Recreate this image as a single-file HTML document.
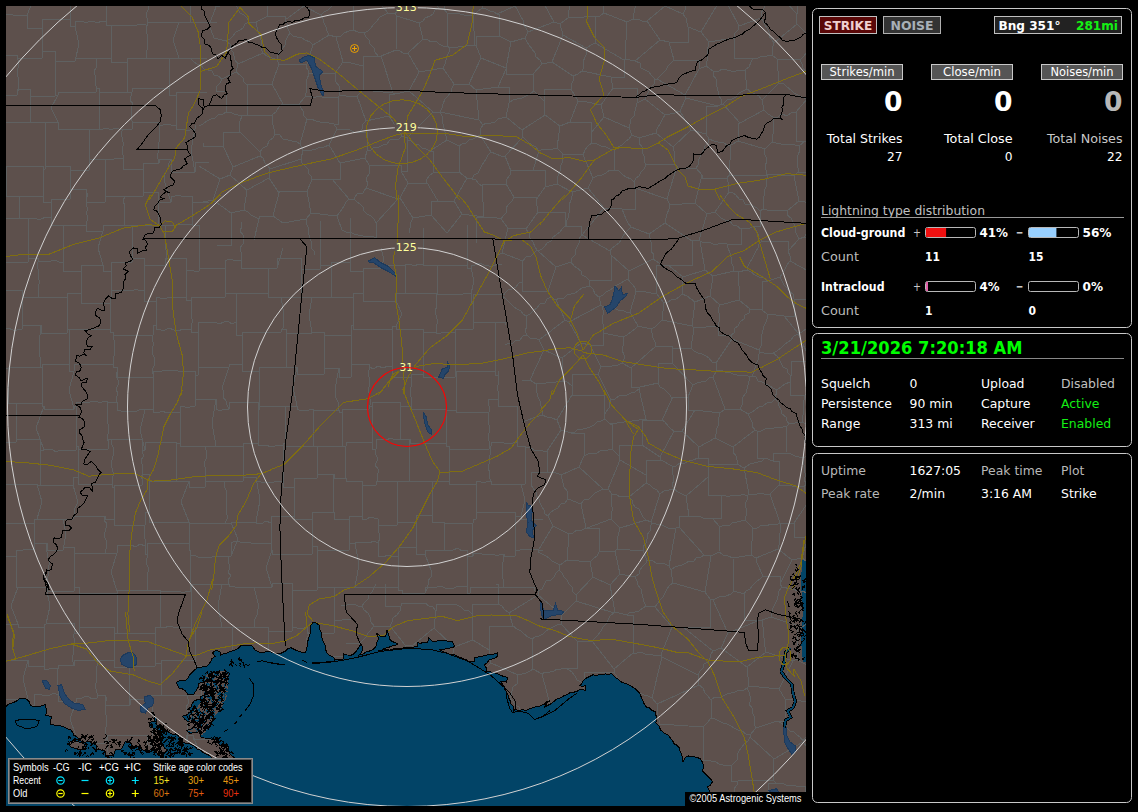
<!DOCTYPE html>
<html><head><meta charset="utf-8"><title>Lightning Map</title>
<style>
html,body{margin:0;padding:0;background:#000;}
body{width:1138px;height:812px;overflow:hidden;}
svg{display:block;}
text{font-family:"DejaVu Sans","Liberation Sans",sans-serif;}
.b{font-weight:bold;}
.r{font-weight:normal;}
.lib{font-family:"Liberation Sans",sans-serif;}
</style></head><body>
<svg width="1138" height="812" viewBox="0 0 1138 812">
<rect width="1138" height="812" fill="#000"/>
<defs><clipPath id="mc"><rect x="6" y="6" width="800" height="800"/></clipPath></defs>

<rect x="6" y="6" width="800" height="800" fill="#5d504c"/>
<g clip-path="url(#mc)" shape-rendering="crispEdges" fill="none" stroke-width="1">
<path d="M6.0 806.0 L6.0 706.8 L5.9 706.8 L8.2 704.4 L11.8 703.1 L14.8 701.9 L17.3 700.6 L19.7 698.2 L23.3 698.0 L27.1 699.4 L29.4 702.1 L30.8 705.6 L33.6 706.3 L36.9 706.8 L41.0 706.1 L45.6 704.3 L45.7 707.5 L46.8 710.5 L45.6 715.4 L48.3 715.8 L51.7 716.7 L50.6 720.3 L50.5 724.0 L54.8 725.1 L59.1 725.3 L62.3 726.3 L65.3 727.7 L68.6 729.2 L71.4 730.2 L73.9 735.1 L76.6 736.3 L78.8 738.8 L82.5 742.5 L77.7 741.8 L73.9 740.1 L70.6 741.7 L67.7 743.8 L71.4 747.4 L75.6 748.3 L78.8 749.9 L82.2 749.5 L86.2 748.7 L84.3 745.8 L83.7 742.5 L88.7 741.3 L92.5 743.2 L96.0 745.0 L97.3 749.9 L100.6 750.0 L104.7 751.1 L105.9 756.1 L110.0 755.5 L113.3 756.1 L114.3 752.9 L115.7 749.9 L118.9 750.0 L121.9 748.7 L123.4 744.8 L125.6 741.3 L130.5 742.5 L133.0 747.4 L135.8 746.7 L139.1 746.2 L142.8 749.9 L147.8 751.1 L151.0 749.7 L155.1 749.9 L157.1 753.3 L160.1 756.1 L162.8 753.8 L165.5 752.0 L167.5 749.9 L164.6 748.1 L162.5 745.0 L161.2 741.3 L160.1 737.6 L158.1 734.1 L157.6 730.2 L154.5 728.2 L150.2 727.7 L149.0 722.8 L152.3 721.6 L155.1 721.6 L154.3 717.3 L153.9 713.0 L151.8 712.6 L154.1 716.0 L157.0 718.8 L156.1 721.8 L156.2 724.9 L160.8 725.9 L164.1 728.4 L166.1 731.1 L169.3 732.8 L172.5 734.3 L175.4 733.9 L178.1 735.4 L180.6 739.2 L183.4 742.5 L186.4 743.3 L189.7 743.8 L192.2 745.1 L195.1 746.4 L197.0 749.0 L200.7 750.1 L202.7 752.1 L205.7 753.8 L208.7 755.1 L211.5 757.4 L213.8 759.3 L216.8 760.9 L219.9 760.2 L223.2 760.4 L225.4 761.6 L229.0 760.5 L231.5 760.4 L234.9 761.7 L237.9 760.9 L235.8 758.3 L232.6 756.5 L230.2 754.3 L229.1 751.3 L228.4 747.8 L227.3 744.2 L223.2 744.3 L220.3 746.0 L218.6 743.1 L216.8 739.8 L212.2 739.5 L208.0 738.1 L204.2 738.0 L201.0 737.2 L199.2 731.9 L194.7 732.2 L190.4 733.7 L186.0 730.2 L189.7 729.9 L192.2 728.4 L194.2 726.1 L195.7 723.1 L191.9 722.5 L188.3 721.6 L185.1 719.6 L182.5 716.1 L187.8 714.4 L191.3 710.8 L187.8 709.1 L191.1 707.0 L192.2 703.8 L193.9 701.2 L197.1 699.7 L201.0 699.4 L200.1 696.8 L204.5 695.0 L206.2 689.8 L202.7 688.0 L204.5 684.5 L203.6 681.8 L198.3 683.6 L198.5 686.8 L196.6 689.8 L193.9 694.1 L191.0 694.0 L187.8 694.1 L185.1 690.6 L182.1 688.7 L179.0 688.0 L176.4 682.7 L179.9 680.1 L185.1 681.0 L187.9 678.1 L189.6 674.8 L192.2 672.2 L194.8 669.8 L197.5 667.8 L202.0 667.0 L206.2 666.9 L208.8 664.2 L210.6 661.6 L212.0 658.5 L215.0 656.4 L212.4 652.8 L215.9 650.2 L220.3 652.0 L220.3 655.5 L223.3 653.7 L226.4 653.5 L229.1 652.0 L231.7 651.1 L235.0 650.2 L237.9 648.5 L240.5 645.8 L244.0 645.2 L248.2 645.1 L251.9 645.8 L255.4 650.2 L258.6 651.9 L262.5 652.8 L267.8 651.1 L273.0 652.8 L276.8 654.0 L280.1 653.7 L285.3 651.1 L287.3 649.0 L290.6 647.6 L295.9 650.2 L301.1 652.0 L305.5 652.8 L306.4 649.4 L307.3 645.8 L307.8 641.3 L309.1 637.0 L310.3 633.5 L310.8 630.0 L310.9 625.5 L313.1 621.9 L316.7 623.4 L319.3 625.5 L319.8 629.4 L321.2 632.8 L321.7 636.6 L322.5 639.8 L323.8 642.7 L325.5 645.7 L325.4 648.9 L326.8 652.5 L329.1 655.1 L334.0 657.6 L334.5 660.0 L338.0 659.3 L341.2 659.7 L343.9 658.8 L343.9 653.9 L347.1 655.0 L351.3 655.1 L353.9 653.8 L356.2 651.4 L358.4 647.7 L361.1 644.0 L363.1 648.9 L361.3 652.5 L358.7 655.1 L362.6 654.5 L365.2 652.3 L368.5 651.4 L372.7 649.7 L375.9 646.5 L376.9 642.6 L378.4 639.1 L377.7 635.7 L375.9 632.9 L378.6 634.7 L380.8 636.6 L385.7 636.6 L386.3 633.6 L387.0 630.5 L388.8 634.7 L389.4 639.1 L392.0 641.4 L395.2 642.7 L398.1 644.0 L394.5 645.5 L391.2 646.2 L388.2 647.7 L384.9 648.2 L381.6 650.2 L378.4 650.9 L381.8 650.2 L385.6 649.3 L389.7 650.2 L393.1 648.9 L396.7 648.9 L400.1 648.5 L404.1 647.8 L407.9 648.0 L411.2 647.7 L414.2 646.9 L417.8 646.5 L417.8 642.8 L420.7 643.3 L424.3 642.0 L427.6 642.8 L428.8 637.9 L432.5 641.6 L436.0 641.6 L438.8 640.2 L442.4 640.3 L445.7 640.3 L448.5 641.8 L452.2 641.6 L454.7 646.5 L451.3 647.9 L447.3 648.2 L443.8 649.3 L439.9 649.4 L442.4 651.4 L444.8 652.8 L448.0 653.2 L451.0 655.1 L454.2 654.6 L457.2 656.3 L460.4 657.4 L463.4 658.9 L466.4 659.9 L468.8 661.5 L471.9 662.0 L474.9 661.3 L474.4 657.6 L478.5 657.0 L481.8 656.3 L484.6 655.7 L488.0 654.6 L491.1 654.9 L494.1 653.9 L497.8 652.6 L497.8 656.3 L494.9 657.9 L492.2 659.1 L489.2 660.0 L487.2 662.8 L484.2 664.9 L486.1 667.7 L486.7 671.1 L489.8 671.8 L493.7 672.6 L496.6 673.6 L500.5 675.1 L503.7 676.5 L507.6 677.3 L506.4 682.2 L503.7 681.4 L500.3 681.4 L503.9 685.9 L504.8 689.1 L506.4 692.0 L507.9 694.7 L508.6 697.7 L510.1 700.7 L511.0 703.7 L513.1 706.2 L513.8 709.3 L518.7 710.5 L522.3 709.7 L526.1 710.5 L529.1 708.8 L532.0 708.0 L535.0 707.0 L538.4 706.8 L542.2 704.7 L545.8 703.1 L550.0 700.7 L546.2 701.8 L543.2 704.6 L540.0 705.6 L544.0 704.5 L547.4 701.9 L544.9 706.8 L548.6 705.0 L551.7 703.4 L554.8 700.7 L557.2 698.6 L561.1 697.8 L564.0 695.6 L567.1 694.5 L570.0 692.7 L573.1 692.4 L577.0 691.3 L579.4 689.6 L582.5 689.4 L585.6 690.8 L585.6 685.9 L582.7 686.1 L579.4 685.9 L581.8 683.6 L583.2 680.5 L585.6 678.5 L589.0 676.8 L592.9 674.8 L595.9 675.3 L599.1 674.8 L602.2 674.3 L605.5 673.9 L608.0 674.5 L611.4 673.6 L614.0 675.8 L616.0 678.0 L618.8 679.7 L621.5 682.1 L625.2 683.5 L628.7 684.6 L631.8 686.6 L635.0 688.4 L637.3 690.8 L639.9 693.3 L640.9 696.3 L642.2 699.4 L643.8 703.0 L645.9 706.8 L649.2 707.9 L652.1 710.6 L655.7 711.7 L655.8 714.9 L657.0 717.9 L655.7 722.8 L659.0 726.1 L660.7 730.2 L664.3 733.1 L668.1 735.1 L670.4 738.0 L672.5 740.5 L674.2 743.8 L677.0 745.3 L679.1 747.4 L680.2 751.2 L681.6 754.8 L682.7 758.5 L682.8 762.2 L685.3 757.3 L688.6 756.0 L692.7 756.1 L696.6 757.4 L700.1 758.5 L702.4 762.0 L703.8 765.9 L702.5 770.8 L705.4 773.9 L708.7 777.0 L710.7 779.1 L712.4 781.9 L710.6 785.0 L707.5 786.8 L709.9 791.8 L710.6 795.5 L712.1 799.0 L712.1 802.9 L712.4 806.5 L712.0 806.0Z" fill="#024467" stroke="none"/>
<path d="M802 560 L806 560 L806 662 L803 662 L801 640 L803 610 L801 585Z" fill="#024467" stroke="none"/>
<path d="M-1 -13L27 -13M27 -13L70 -13M70 -13L70 -10M70 -10L75 -11L79 -9L84 -11L88 -10L93 -10L97 -10L102 -9L106 -10M106 -10L106 -7M106 -7L147 -7M147 -7L147 -13M147 -13L151 -14L155 -13L160 -14L164 -14L169 -12L173 -14L177 -12L182 -12L186 -14L190 -13M190 -13L190 -17M-1 22L3 22M3 22L3 15M3 15L8 14L13 15L17 15L22 16L27 15M27 15L27 28M27 28L32 28L37 28L42 28M42 28L42 19M42 19L70 19M70 19L70 26M70 26L75 26M75 26L75 22M75 22L79 21L84 22L88 22L93 21L97 23L102 21L106 22M106 22L106 25M106 25L111 25M111 25L116 26L120 25L124 25L129 25L133 25L137 25L141 24L146 25M146 25L146 26M146 26L147 26M147 26L147 22M147 22L179 22M179 22L190 22M190 22L217 22M3 55L17 55M17 55L17 58M17 58L42 58M42 58L42 51M42 51L55 51M55 51L55 61M55 61L75 61M75 61L75 58M75 58L96 58M96 58L111 58M111 58L111 62M111 62L127 62M127 62L127 58M127 58L146 58M146 58L169 58M169 58L179 58M179 58L207 58M-9 95L17 95M17 95L17 89M17 89L30 89M30 89L30 96M30 96L55 96M55 96L55 95M55 95L58 95M58 95L58 92M58 92L96 92M96 92L96 88M96 88L99 88M99 88L99 92M99 92L127 92M127 92L132 92M132 92L132 88M132 88L169 88M169 88L169 95M169 95L176 95M176 95L176 92M176 92L207 92M-9 122L-1 122M-1 122L30 122M30 122L45 122M45 122L58 122M58 122L58 129M58 129L89 129M89 129L99 129M99 129L103 129L107 128L111 130L115 128L119 129L123 129M123 129L132 129M132 129L132 122M132 122L159 122M159 122L159 125M159 125L163 125L167 124L171 125L176 125M176 125L176 129M176 129L181 129L186 130L190 130L195 129M195 129L195 125M-1 169L6 169M6 169L6 166M6 166L43 166M43 166L43 169M43 169L45 169M45 169L45 166M45 166L70 166M70 166L70 170M70 170L89 170M89 170L89 159M89 159L105 159M105 159L110 159L114 159L118 158L123 159M123 159L123 169M123 169L143 169M143 169L143 163M143 163L159 163M159 163L159 159M159 159L165 160L171 159M171 159L171 172M171 172L195 172M195 172L195 162M195 162L209 162M6 196L19 196M19 196L43 196M43 196L43 202M43 202L51 202M51 202L51 199M51 199L70 199M70 199L70 189M70 189L86 189M86 189L86 202M86 202L105 202M105 202L105 196M105 196L125 196M125 196L143 196M143 196L143 192M143 192L158 192M158 192L158 202M158 202L171 202M171 202L171 196M171 196L175 196L179 195L183 197L187 196L192 196M192 196L192 202M192 202L209 202M-3 218L19 218M19 218L28 218M28 218L32 218L37 219L41 219L46 217L51 218M51 218L51 225M51 225L63 225M63 225L86 225M86 225L86 231M86 231L103 231M103 231L103 225M103 225L125 225M125 225L132 225M132 225L158 225M158 225L165 225M165 225L170 225L174 226L178 224L183 224L187 224L192 225M192 225L199 225M-4 271L-3 271M-3 271L-3 262M-3 262L28 262M28 262L28 258M28 258L38 258M38 258L38 262M38 262L42 261L46 262L51 261L55 260L59 262L63 262M63 262L63 271M63 271L81 271M81 271L81 265M81 265L103 265M103 265L103 271M103 271L111 271M111 271L111 262M111 262L132 262M132 262L132 258M132 258L144 258M144 258L144 265M144 265L165 265M165 265L165 258M165 258L186 258M186 258L186 271M186 271L190 270L194 271L199 271M199 271L199 268M199 268L225 268M225 268L225 261M225 261L229 259L233 260L237 260L241 261M241 261L241 268M241 268L268 268M268 268L277 268M277 268L277 258M277 258L301 258M301 258L301 269M301 269L320 269M320 269L320 265M320 265L331 265M331 265L331 262M331 262L350 262M350 262L350 271M350 271L355 272L359 271L363 271M363 271L363 268M363 268L384 268M384 268L384 265M384 265L405 265M405 265L410 264L414 266L419 264L423 265M423 265L437 265M437 265L467 265M467 265L467 268M467 268L471 268M471 268L471 265M471 265L475 265L480 263L484 265L489 266L493 266L498 264L502 265M-5 290L-4 290M-4 290L22 290M22 290L22 297M22 297L38 297M38 297L67 297M67 297L67 293M67 293L81 293M81 293L81 303M81 303L110 303M110 303L110 297M110 297L111 297M111 297L111 290M111 290L116 291L120 290L124 291L128 290L132 291L136 289L140 291L144 290M144 290L144 301M144 301L156 301M156 301L156 297M156 297L160 298L165 299L169 297L173 298L178 297L182 297L186 297M186 297L186 300M186 300L191 300M191 300L191 297M191 297L225 297M225 297L225 293M225 293L236 293M236 293L268 293M268 293L268 297M268 297L281 297M281 297L301 297M301 297L312 297M312 297L331 297M331 297L353 297M353 297L353 293M353 293L363 293M363 293L363 301M363 301L396 301M396 301L396 293M396 293L405 293M405 293L436 293M436 293L436 294M436 294L437 294M437 294L442 294L446 294L450 295L454 294L458 294L463 294L467 293L471 294M471 294L471 303M471 303L473 303M473 303L473 294M473 294L505 294M-5 329L-1 329M-1 329L3 328L8 328L13 330L17 330L22 329M22 329L22 325M22 325L27 326L31 325L36 325L41 325M41 325L41 333M41 333L67 333M67 333L67 329M67 329L69 329M69 329L110 329M110 329L110 332M110 332L113 332M113 332L113 335M113 335L153 335M153 335L153 325M153 325L156 325M156 325L156 329M156 329L161 330L165 330L169 328L174 330L178 331L183 329L187 330L191 329M191 329L191 332M191 332L198 332M198 332L198 322M198 322L202 323L206 322L211 322L215 322L219 324L224 322L228 321L232 324L236 322M236 322L236 335M236 335L242 335M242 335L242 332M242 332L281 332M281 332L281 329M281 329L286 329M286 329L286 333M286 333L312 333M312 333L312 332M312 332L324 332M324 332L324 335M324 335L351 335M351 335L351 325M351 325L353 325M353 325L353 329M353 329L392 329M392 329L392 326M392 326L396 326M396 326L396 329M396 329L423 329M423 329L423 332M423 332L436 332M436 332L436 333M436 333L441 333L446 332L450 332L455 333M455 333L455 329M455 329L473 329M473 329L473 322M473 322L495 322M495 322L500 322L505 322M505 322L505 325M-1 368L8 368M8 368L8 367M8 367L41 367M41 367L42 367M42 367L42 364M42 364L69 364M69 364L69 371M69 371L74 371M74 371L74 364M74 364L113 364M113 364L113 367M113 367L117 367M117 367L117 377M117 377L153 377M153 377L153 374M153 374L153 374M153 374L153 371M153 371L157 372L162 371L166 370L170 371L174 370L178 371L182 371L187 371L191 371L195 371M195 371L195 375M195 375L198 375M198 375L198 367M198 367L229 367M229 367L229 364M229 364L242 364M242 364L242 371M242 371L246 372L251 371L255 371L259 371M259 371L259 367M259 367L286 367M286 367L297 367M297 367L297 374M297 374L324 374M324 374L324 368M324 368L339 368M339 368L339 377M339 377L351 377M351 377L351 364M351 364L369 364M369 364L369 367M369 367L374 369L378 366L383 368L388 366L392 367M392 367L392 377M392 377L411 377M411 377L411 374M411 374L423 374M423 374L423 377M423 377L455 377M455 377L455 374M455 374L456 374M456 374L456 371M456 371L495 371M495 371L495 375M495 375L498 375M498 375L498 371M8 403L16 403M16 403L42 403M42 403L42 406M42 406L44 406M44 406L44 409M44 409L74 409M74 409L74 406M74 406L76 406M76 406L76 402M76 402L80 403L84 402L88 403L92 401L96 401L100 403L104 401L108 402M108 402L117 402M117 402L117 410M117 410L121 411L125 411L129 411L133 411L137 411L141 409L145 410M145 410L145 409M145 409L153 409M153 409L153 412M153 412L158 413L162 411L167 413L171 412L176 412L180 412M180 412L180 406M180 406L185 407L190 407L195 406M195 406L195 399M195 399L216 399M216 399L216 409M216 409L220 411L224 409L229 409M229 409L229 402M229 402L258 402M258 402L258 410M258 410L259 410M259 410L259 406M259 406L285 406M285 406L297 406M297 406L297 409M297 409L301 411L305 410L309 410L313 409M313 409L313 410M313 410L339 410M339 410L339 412M339 412L342 412M342 412L342 409M342 409L369 409M369 409L369 406M369 406L372 406M372 406L372 402M372 402L400 402M400 402L400 406M400 406L411 406M411 406L411 409M411 409L446 409M446 409L446 410M446 410L456 410M456 410L456 412M456 412L489 412M489 412L490 408L488 404L489 399M489 399L498 399M498 399L498 406M498 406L517 406M517 406L517 412M1 442L16 442M16 442L16 439M16 439L40 439M40 439L40 445L40 450M40 450L44 450M44 450L48 449L52 449L56 452L60 450L64 450L68 450L72 451L76 450M76 450L76 446M76 446L78 446M78 446L78 449M78 449L108 449M108 449L108 439M108 439L112 439M112 439L142 439M142 439L142 450M142 450L145 450M145 450L145 442M145 442L176 442M176 442L176 443M176 443L180 443M180 443L180 446M180 446L205 446M205 446L211 446L216 446M216 446L243 446M243 446L243 443M243 443L258 443M258 443L258 446M258 446L262 445L266 445L271 447L275 446L279 445L283 446M283 446L283 443M283 443L285 443M285 443L285 446M285 446L313 446M313 446L317 446M317 446L342 446M342 446L346 446M346 446L346 442M346 442L372 442M372 442L372 449M372 449L376 449M376 449L376 439M376 439L381 439L386 440L391 438L395 440L400 439M400 439L410 439M410 439L410 443M410 443L446 443M446 443L446 446M446 446L449 446M449 446L449 449M449 449L489 449M489 449L489 446M489 446L491 446M491 446L491 442M491 442L495 443L500 442L504 443L509 443L513 443L517 442M517 442L517 446M517 446L525 446M525 446L525 450M1 481L3 481M3 481L3 484M3 484L37 484M37 484L37 485M37 485L40 485M40 485L73 485M73 485L73 477M73 477L78 477M78 477L78 484M78 484L112 484M112 484L112 487M112 487L114 487M114 487L114 485M114 485L142 485M142 485L142 474M142 474L149 474M149 474L149 481M149 481L176 481M176 481L189 481M189 481L189 487M189 487L205 487M205 487L205 481M205 481L225 481M225 481L243 481M243 481L243 477M243 477L256 477M256 477L256 481M256 481L261 482L265 482L270 483L274 482L279 481L283 481M283 481L283 487M283 487L294 487M294 487L294 478M294 478L317 478M317 478L317 474M317 474L334 474M334 474L334 478M334 478L346 478M346 478L346 481M346 481L362 481M362 481L362 485M362 485L376 485M376 485L376 481M376 481L397 481M397 481L410 481M410 481L432 481M432 481L449 481M449 481L449 484M449 484L476 484M476 484L476 481M476 481L481 482L486 482L491 481M491 481L491 484M491 484L495 485L499 484L504 484L508 485L512 484L517 485L521 484M521 484L525 484M525 484L525 478M-2 519L3 519M3 519L3 523M3 523L34 523M34 523L34 519M34 519L37 519M37 519L63 519M63 519L68 520L73 519M73 519L73 516M73 516L105 516M105 516L105 519M105 519L114 519M114 519L114 525M114 525L145 525M145 525L145 512M145 512L149 512M149 512L149 522M149 522L189 522M189 522L189 522M189 522L189 523M189 523L225 523M225 523L231 523M231 523L231 522M231 522L256 522M256 522L256 523M256 523L261 524L266 521L271 523M271 523L271 516M271 516L294 516M294 516L294 519M294 519L312 519M312 519L312 512M312 512L334 512M334 512L334 519M334 519L349 519M349 519L349 516M349 516L362 516M362 516L362 519M362 519L366 520L370 517L374 518L378 519M378 519L378 525M378 525L383 525L388 526L392 525L397 525M397 525L397 522M397 522L416 522M416 522L416 515M416 515L432 515M432 515L432 522M432 522L444 522M444 522L444 523M444 523L473 523M473 523L473 519M473 519L476 519M476 519L476 512M476 512L515 512M515 512L515 516M515 516L521 516M521 516L521 519M521 519L543 519M-2 556L3 557L7 556L12 557L16 556M16 556L16 550M16 550L21 551L25 549L29 549L34 550M34 550L34 543M34 543L47 543M47 543L47 550M47 550L63 550M63 550L63 547M63 547L69 547L74 547M74 547L74 553M74 553L105 553M105 553L117 553M117 553L117 546M117 546L122 545L127 546L131 545L136 547L140 544L145 546M145 546L145 554M145 554L147 554M147 554L147 543M147 543L189 543M189 543L189 550M189 550L190 550M190 550L190 556M190 556L194 555L198 557L203 557L207 557L212 557L216 556L221 557L225 556L229 556M229 556L231 556M231 556L231 543M231 543L235 541L240 542L244 543L249 542L253 544L257 543L262 543L266 544L271 543M271 543L271 550M271 550L272 550M272 550L272 554M272 554L312 554M312 554L312 546M312 546L317 546M317 546L317 550M317 550L349 550M349 550L349 543M349 543L355 543M355 543L360 542L365 542L369 543L374 541L378 543M378 543L378 556M378 556L383 557L388 555L393 557L398 556M398 556L398 547M398 547L416 547M416 547L416 554M416 554L425 554M425 554L425 550M425 550L444 550M444 550L448 551L453 550L458 548L462 551L467 550M467 550L467 556M467 556L473 556M473 556L473 554M473 554L478 553L482 554L486 555L491 554L495 555L499 555L504 554M504 554L504 556M504 556L515 556M515 556L515 550M515 550L520 550L524 549L529 550L534 549L538 550L543 550M16 587L18 587M18 587L46 587M46 587L47 587M47 587L47 591M47 591L74 591M74 591L74 587M74 587L79 587M79 587L79 593M79 593L117 593M117 593L117 591M117 591L117 591M117 591L117 590M117 590L147 590M147 590L160 590M160 590L160 591M160 591L164 591L168 591L173 591L177 591L181 592L185 592L190 591M190 591L191 591M191 591L191 584M191 584L222 584M222 584L229 584M229 584L229 587M229 587L233 586L237 588L241 587L246 588L250 587L254 587M254 587L272 587M272 587L272 583M272 583L292 583M292 583L292 590M292 590L317 590M317 590L317 587M317 587L334 587M334 587L355 587M355 587L368 587M368 587L398 587M398 587L398 590M398 590L402 590M402 590L402 593M402 593L425 593M425 593L425 587M425 587L437 587M437 587L441 586L445 588L450 588L454 588L458 586L463 586L467 587M467 587L467 593M467 593L470 593M470 593L470 587M470 587L504 587M504 587L505 587M505 587L534 587M534 587L534 591M2 624L18 624M18 624L18 627M18 627L44 627M44 627L44 624M44 624L46 624M46 624L46 623M46 623L74 623M74 623L74 633M74 633L79 633M79 633L79 627M79 627L114 627M114 627L114 633M114 633L117 633M117 633L155 633M155 633L155 627M155 627L160 627M160 627L164 628L169 626L173 627L178 628L182 627L187 628L191 627M191 627L191 631M191 631L195 631M195 631L195 627M195 627L222 627M222 627L232 627M232 627L254 627M254 627L268 627M268 627L268 631M268 631L292 631M292 631L292 627M292 627L297 628L302 629L307 627M307 627L307 633M307 633L334 633M334 633L334 620M334 620L338 621L342 620L347 619L351 620M-4 656L2 656M2 656L2 660M2 660L28 660M28 660L28 666M28 666L44 666M44 666L44 669M44 669L49 669L53 668L58 669M58 669L58 666M58 666L64 665L69 665L74 666M74 666L74 660M74 660L97 660M97 660L114 660M114 660L114 667M114 667L130 667M130 667L130 666M130 666L155 666M155 666L155 663M155 663L161 663M161 663L161 660M161 660L195 660M195 660L195 666M195 666L201 666M201 666L201 669M201 669L232 669M232 669L232 659M232 659L246 659M246 659L246 667M246 667L251 668L255 667L259 667L264 666L268 667M268 667L268 663M268 663L279 663M279 663L279 667M279 667L307 667M307 667L307 663M307 663L319 663M319 663L319 656M319 656L351 656M-4 705L1 705M1 705L1 699M1 699L28 699M28 699L28 705M28 705L34 705M34 705L34 695M34 695L38 694L42 695L46 696L50 695L54 693L58 695M58 695L58 702M58 702L63 701L67 703L71 703L76 702M76 702L76 698M76 698L80 699L84 697L88 696L92 699L97 698M97 698L97 695M97 695L105 695M105 695L105 705M105 705L130 705M130 705L130 699M130 699L151 699M151 699L151 695M151 695L161 695M161 695L187 695M187 695L201 695M201 695L226 695M226 695L246 695M246 695L246 700L246 706M246 706L262 706M262 706L279 706M279 706L304 706M304 706L304 702M304 702L309 703L314 701L319 702M319 702L324 703L329 702L333 702L338 701L342 701L347 702M1 739L4 739M4 739L34 739M34 739L34 745M34 745L35 745M35 745L67 745M67 745L67 736M67 736L76 736M76 736L76 743M76 743L80 742L84 743L88 743L93 743L97 743L101 743L105 743M105 743L105 739M105 739L107 739M107 739L107 735M107 735L147 735M147 735L147 745M147 745L151 745M151 745L187 745M187 745L187 735M187 735L193 735M193 735L193 739M193 739L197 739L201 740L205 739L209 739L213 740L217 738L222 738L226 739M226 739L226 732M226 732L231 732L236 732M236 732L236 736M236 736L262 736M262 736L262 735M262 735L267 735M267 735L267 739M267 739L298 739M298 739L298 736M298 736L304 736M304 736L304 742M304 742L330 742M330 742L330 739M330 739L347 739M4 762L12 762M12 762L12 765M12 765L35 765M35 765L35 769M35 769L41 769M41 769L41 762M41 762L45 761L49 763L54 762L58 762L62 764L67 762M67 762L67 769M67 769L69 769M69 769L107 769M107 769L112 769M112 769L145 769M145 769L145 765M145 765L147 765M147 765L147 762M147 762L178 762M178 762L178 775M178 775L193 775M193 775L193 773M193 773L216 773M216 773L216 765M216 765L236 765M236 765L236 769M236 769L256 769M256 769L267 769M267 769L267 766M267 766L283 766M283 766L283 762M283 762L298 762M298 762L298 766M298 766L317 766M317 766L317 772M317 772L330 772M330 772L330 762M330 762L352 762M-2 808L12 808M12 808L12 814M12 814L38 814M38 814L38 808M38 808L41 808M41 808L41 801M41 801L45 800L49 800L54 801L58 802L63 802L67 801M67 801L67 814M67 814L69 814M69 814L69 808M69 808L73 808L78 808L82 807L86 808L90 808L94 809L98 809L103 808L107 808L111 808M111 808L111 811M111 811L112 811M112 811L112 808M112 808L116 808L120 808L124 807L128 807L132 809L137 808L141 807L145 808M145 808L145 811M145 811L155 811M155 811L155 812M155 812L178 812M178 812L178 808M178 808L184 808M184 808L184 814M184 814L216 814M216 814L216 804M216 804L229 804M229 804L229 805M229 805L256 805M256 805L256 814M256 814L263 814M263 814L263 812M263 812L283 812M283 812L283 814M283 814L305 814M305 814L305 812M305 812L317 812M317 812L317 808M317 808L346 808M-2 851L38 851M38 851L38 845M38 845L67 845M67 845L111 845M111 845L111 842M111 842L155 842M155 842L155 845M155 845L184 845M184 845L184 842M184 842L229 842M229 842L263 842M263 842L263 841M263 841L305 841M305 841L305 845M305 845L346 845M-1 -13L-1 -8L1 -4L3 -0L4 5M4 5L2 9L2 13L-0 18L-1 22M27 -13L33 1M33 1L27 15M70 -13L70 19M106 -10L106 22M147 -7L147 -3L146 1L148 5L148 10L146 14L147 18L147 22L147 26M190 -13L190 22M3 22L2 26L2 30L4 34L4 39L2 43L2 47L4 51L3 55M42 28L42 58M75 26L79 44M79 44L75 61M111 25L111 58M146 25L148 42M148 42L146 58M179 22L173 40M173 40L179 58M17 55L18 60L19 64L18 68L17 73L18 77L18 82L18 86L18 91L17 95M55 51L55 96M96 58L96 62L97 67L94 71L95 75L95 79L95 84L97 88L96 92M127 62L127 92M169 58L169 88M-9 95L-9 122M30 89L30 122M58 95L51 108M51 108L58 122M99 88L99 129M132 92L131 96L130 100L133 104L131 108L131 112L131 117L132 121L133 125L132 129M176 95L176 125M-1 122L1 145M1 145L-1 169M45 122L45 169M89 129L89 170M123 129L121 133L122 137L123 142L123 146L122 150L123 155L123 159M159 122L159 142M159 142L158 146L159 151L157 155L158 159L159 163M195 129L191 150M191 150L195 172M6 169L6 196M43 166L43 196M70 166L71 182M71 182L70 199M105 159L105 202M143 169L143 196M171 159L169 163L168 168L166 172L164 176L164 180M164 180L171 202M19 196L19 218M51 202L51 218M86 189L87 193L87 197L86 201L86 205L88 209L86 213L88 217L87 221L86 225M125 196L123 201L125 206L124 210M124 210L125 225M158 192L158 225M192 196L192 225M-3 218L-3 271M28 218L28 262M63 225L64 243M64 243L63 262M103 231L98 248M98 248L103 265M132 225L132 262M165 225L165 245M165 245L166 250L166 255L166 260L165 265M199 225L199 271M241 222L242 226L240 231L243 235L243 239L243 244L240 248L241 252L242 257L241 261M283 248L277 268M320 221L320 269M350 218L350 262M381 248L382 252L383 256L384 260L382 264L384 268M423 228L423 265M467 225L467 265M-4 271L-4 290M38 258L38 262L37 267L39 271L38 275L39 280L39 284L38 288L39 293L38 297M81 271L81 293M111 271L111 297M144 258L144 290M186 258L186 297M225 268L225 297M268 268L268 293M301 258L301 297M331 265L331 297M363 271L363 293M405 265L405 293M437 265L437 294M471 268L472 272L473 277L474 281M474 281L471 294M-5 290L-6 295L-5 299L-5 303L-5 308L-5 312L-5 316L-5 321L-5 325L-5 329M22 290L22 329M67 297L67 333M110 303L110 329M156 301L156 325M191 300L191 304L191 309L192 313L191 317L193 321L191 325L191 329M236 293L236 322M281 297L284 315M284 315L283 319L284 324L283 328L281 332M312 297L309 315M309 315L312 333M353 297L353 325M396 301L402 314M402 314L396 326M436 293L436 298L436 302L437 306L435 311L436 315L437 319L437 324L436 328L436 332M473 303L473 329M-1 329L-1 368M41 325L39 346M39 346L41 367M69 329L69 364M113 332L115 348M115 348L113 364M153 335L152 340L154 344L152 348L152 353L154 357L154 361L154 366L152 370L153 374M198 332L198 375M242 335L242 364M286 329L286 367M324 332L324 374M351 335L351 377M392 329L392 367M423 329L423 374M455 333L455 377M495 322L495 371M8 368L8 403M42 367L42 403M74 371L69 390M69 390L74 409M117 367L117 372L116 376L118 380L118 385L116 389L118 394L116 398L117 402M153 377L153 409M195 371L195 406M229 367L222 388M222 388L224 392L223 397L226 401L227 405L229 409M259 371L259 410M297 367L293 387M293 387L297 406M339 368L335 389M335 389L335 394L336 398L338 402L338 406L339 410M369 364L370 368L368 372L369 377L369 381L370 385L368 389L369 393L369 397L371 401L370 405L369 409M411 377L412 382L411 387L410 392M410 392L411 397L411 401L411 406M456 374L457 392M457 392L456 410M498 375L498 379L499 383L497 387L498 391L498 395L498 399M16 403L16 442M44 406L36 428M36 428L44 450M76 406L76 450M108 402L107 407L107 411L107 415L107 419L108 424L108 428L109 432L107 436L108 441L108 445L108 449M145 410L140 430M140 430L145 450M180 412L180 443M216 399L212 423M212 423L216 446M258 402L258 443M285 406L285 443M313 409L313 446M342 412L342 446M372 406L372 442M400 402L400 439M446 409L446 443M489 412L488 416L488 421L489 425L490 429L489 433L488 437L489 441L489 445L489 449M517 406L517 442M1 442L1 447L1 451L-0 455L1 460L-1 464L1 468L1 473L2 477L1 481M40 439L40 485M78 446L78 477M112 439L111 443L113 447L113 452L113 456L112 460L111 464L112 468L113 472L113 476L112 480L112 484M142 439L143 443L142 448L142 452L144 456L141 460L142 464L142 469L143 473L141 477L143 481L142 485M176 442L176 481M205 446L206 450L206 454L206 459L204 463L205 467L205 471L205 475L205 479L205 483L205 487M243 446L243 481M283 446L283 481M317 446L317 478M346 446L345 462M345 462L346 478M376 449L375 453L377 457L377 461L375 465L378 469L378 473L377 477L377 481L376 485M410 439L409 460M409 460L410 481M449 446L449 481M491 446L489 464M489 464L488 468L490 473L489 477L491 481M525 446L525 484M3 481L-5 500M-5 500L3 519M37 484L42 502M42 502L37 519M73 485L78 502M78 502L76 506L74 510L75 515L73 519M114 487L114 519M149 474L149 512M189 481L181 502M181 502L189 522M225 481L224 486L226 490L226 494L226 498L227 502M227 502L226 506L226 510L227 515L227 519L225 523M256 477L260 500M260 500L256 522M294 487L294 516M334 474L333 493M333 493L334 512M362 481L362 516M397 481L397 503M397 503L397 525M432 481L432 515M476 484L476 519M521 484L525 500M525 500L521 516M-2 519L-2 556M34 523L34 550M63 519L64 524L65 529L66 534M66 534L63 550M105 516L104 520L107 524L106 528L105 532L104 536L106 540L106 544L106 549L105 553M145 525L144 529L145 533L144 537L146 541L145 546M189 522L189 543M231 523L238 539M238 539L231 556M271 523L271 543M312 519L312 554M349 519L349 550M378 519L379 524L378 528L379 533L380 538L378 543M416 522L416 547M444 522L444 550M473 523L472 539M472 539L473 556M515 512L515 556M16 556L16 587M47 543L46 547L47 552L47 556L49 560L49 565M49 565L47 587M74 547L74 591M117 553L111 572M111 572L117 591M147 554L147 558L146 563L148 567L148 572M148 572L147 590M190 550L190 591M229 556L228 560L229 564L230 568L228 572L231 576L228 580L229 584M272 550L266 568M266 568L272 587M317 546L317 590M355 543L359 565M359 565L355 587M398 556L398 587M425 554L432 573M432 573L431 577L428 581L428 585L427 589L425 593M467 550L467 587M504 554L502 570M502 570L504 587M18 587L11 606M11 606L18 624M46 587L50 606M50 606L46 624M79 587L79 633M117 593L117 633M160 590L160 627M191 591L191 627M222 584L218 606M218 606L222 627M254 587L259 607M259 607L257 611L257 615L255 619L254 623L254 627M292 583L292 631M334 587L334 633M2 624L1 629L3 633L1 638L3 642L3 647L2 651L2 656M44 627L44 666M74 623L74 627L75 632L73 636L75 640L74 645L73 649L74 653L72 657L73 662L74 666M114 627L114 660M155 633L155 666M195 631L195 660M232 627L232 669M268 627L268 667M307 627L308 632L308 636L306 640L308 645L308 649L307 654L307 658L307 663L307 667M-4 656L-4 705M28 660L23 679M23 679L28 699M58 669L57 682M57 682L58 686L59 690L58 695M97 660L98 664L96 668L97 673L96 677L97 681L95 685L96 689L97 693L97 698M130 667L129 686M129 686L130 705M161 663L161 695M201 666L201 695M246 659L246 695M279 663L279 706M319 663L319 702M1 705L1 739M34 705L34 739M76 702L70 719M70 719L76 736M105 695L107 699L105 703L105 707L105 711L106 715L106 719L106 723L106 727L105 731L106 735L106 739L105 743M151 699L154 722M154 722L152 727L152 731L153 736L153 741L151 745M187 695L188 699L189 703L186 707L188 712L189 716L188 720L187 724L187 728L188 733L186 737L187 741L187 745M226 695L223 717M223 717L223 722L225 726L224 731L224 735L226 739M262 706L262 736M304 706L304 736M4 739L4 762M35 745L35 765M67 745L67 762M107 739L109 744L107 748L108 752L109 756L109 761L107 765L107 769M147 735L153 750M153 750L147 765M193 735L200 755M200 755L193 775M236 732L236 765M267 735L267 769M298 739L296 743L294 747L292 751M292 751L298 762M330 742L328 757M328 757L330 772M12 762L8 785M8 785L12 808M41 769L39 774L41 778L41 782L41 786L40 791L40 795L39 799L40 804L41 808M69 769L69 814M112 769L112 811M145 769L145 774L144 778L145 782L146 786L145 791L145 795L145 799L145 804L145 808M178 762L178 812M216 773L217 794M217 794L215 798L215 802L217 806L216 810L216 814M256 769L249 787M249 787L256 805M283 766L283 789M283 789L283 794L284 798L282 803L282 808L283 812M317 766L317 812M-2 808L1 829M1 829L-2 851M38 814L39 818L38 822L39 826L37 830L37 834L37 839L37 843L39 847L38 851M67 801L60 823M60 823L67 845M111 808L111 845M155 811L155 842M184 808L184 845M229 804L229 842M263 814L269 828M269 828L263 842M305 814L311 827M311 827L305 841M823 5L797 5L797 14M797 14L796 19L797 24M797 24L816 43M781 -3L797 14M777 59L772 55M777 59L800 60M774 43L772 49L772 55M774 43L797 24M800 60L816 43M816 719L813 715L813 710L810 706L809 702M819 686L809 702M761 18L739 26M761 18L761 13L763 10L765 6L767 2L768 -2M743 -13L740 -9L737 -6L734 -2L731 1L728 5M728 5L739 26M774 43L772 40L769 36L769 32L767 28L765 25L763 21L761 18M772 55L767 56L762 56L758 58L753 58M753 58L734 58L734 38M734 38L735 33L738 30L739 26M814 755L803 742M816 719L814 723L812 727L808 729L807 734L806 737L803 741M803 742L803 741M813 778L805 787M805 787L801 786L796 786L792 785L788 786L784 784L780 783L776 783M803 742L774 759M774 759L773 780M773 780L776 783M802 422L812 427M802 422L802 417L804 413L803 409L803 404L804 400L805 395M805 395L810 394L814 392L819 393L823 391L827 390M800 60L802 64L803 68L806 72L809 76L811 80L813 84M745 70L749 67L751 62L753 58M745 70L740 70L736 71L731 71L727 70L722 69L718 72L713 71M734 38L709 42M709 42L708 47L707 51L707 56L707 61L706 66M713 71L706 66M517 0L522 -0L526 1L530 2L534 1L539 2L543 2M517 0L515 -4L515 -8L514 -12L514 -16M543 2L551 2L551 -17M517 0L515 6M515 6L517 9L519 13L521 17L523 20L524 25L526 28L528 32M528 32L554 22M543 2L554 22M809 702L785 699M803 741L800 737L797 735L794 732L790 731L787 728L784 725L781 723L777 721M777 721L785 721L785 699M762 620L771 617M762 620L762 625L764 629L763 634L764 638L764 643L765 647L766 652M771 617L802 627M766 652L793 661M802 627L797 627L797 659M793 661L797 659M747 667L749 686M747 667L766 652M779 689L749 686M779 689L793 661M813 667L809 665L805 664L801 662L797 659M779 689L785 699M802 627L805 625L810 624L813 621L816 618M805 787L809 813M776 783L768 783L768 819M773 780L738 780L738 781M738 781L737 785L734 789L735 794L731 798L732 803L730 807M736 815L730 807M353 6L374 -4M353 6L353 6L353 30M353 30L358 32L364 33M364 33L368 31L371 28L374 24L377 21L380 17L384 15L388 13M388 13L374 -4M415 -16L395 14M395 14L388 13M378 56L375 52L374 48L370 44L369 40L366 37L364 33M378 56L363 56L363 66M336 37L343 62M336 37L341 36L344 33L349 31L353 30M363 66L359 65L355 64L351 63L347 62L343 62M378 56L381 56M395 14L397 16M381 56L396 50M397 16L396 50M381 56L393 93M363 66L363 90M393 93L363 90M777 59L779 83M813 84L806 99M779 83L784 84L787 87L791 90L794 93L798 95L802 97L806 99M745 70L747 89M779 83L762 100M747 89L751 92L755 94L759 96L762 100M354 199L357 194L363 193L366 188M354 199L357 202L360 204L363 207L364 211L367 214L371 216L374 219L376 223M376 223L398 199M366 188L398 199M337 216L340 212L342 209L344 206L346 202L349 199M337 216L342 230M354 199L349 199M376 223L376 223L376 238M342 230L346 232L350 232L354 234L358 235L363 236L367 236L372 236L376 238M306 219L283 223M306 219L306 223L308 227L308 231L309 235L310 239L312 243L311 248L314 251L314 255M311 213L337 216M311 213L306 219M777 721L756 728M749 686L747 688M756 728L754 724L754 720L754 716L752 712L752 708L749 704L751 700L750 696L749 692L747 688M515 6L497 14M497 14L494 12L490 11L486 9L482 8M479 -14L481 -10L479 -5L482 -1L483 4L482 8M353 6L340 -3M303 -7L304 6M340 -3L336 -0L333 3L331 7L328 10L324 12L321 15M304 6L321 15M336 37L329 35M329 35L327 31L326 27L324 23L323 19L321 15M415 -16L439 8M397 16L419 23M419 23L423 21L425 18L430 16L433 14L435 10L439 8M456 -14L455 -9L451 -7L451 -2L448 2L445 5L444 9M482 8L477 12L473 16M473 16L469 15L464 15L460 14L456 13L451 13L447 13M447 13L444 9M439 8L444 9M332 179L349 199M332 179L340 179L340 163M366 188L368 184L366 179L369 174L369 169L369 165M369 165L365 158M365 158L340 163M369 165L401 165L401 171M398 199L400 198M400 198L408 183M401 171L408 183M804 458L818 446M804 458L803 463L805 467L804 471L806 475L804 479L806 484M806 484L830 474M798 334L811 361M798 334L794 336L791 340L788 342L784 345L781 348L777 351L773 353M811 361L791 361L791 376M773 353L777 356L779 359L781 363L783 367L787 369L788 373L791 376M805 395L790 395L790 382M811 361L822 363M790 382L791 376M709 42L701 32M706 66L699 69M674 60L699 60L699 69M674 60L669 42M669 42L688 42L688 27M701 32L688 27M728 5L717 5M701 32L717 5M717 5L701 -12M552 62L573 76M552 62L563 35M582 71L584 67L583 62L585 57L587 53L586 48M582 71L578 74L573 76M586 48L563 35M528 32L525 38M554 22L560 24M552 62L542 64M525 38L527 42L529 45L532 49L535 53L536 57L540 60L542 64M560 24L563 35M747 89L743 91L739 93L736 97L732 99L727 100L723 104M762 100L764 110M764 110L740 123M740 123L723 104M713 71L713 75L716 79L716 83L717 87L718 91L719 96L721 99L722 104M722 104L723 104M499 36L476 36L476 45M499 36L511 42M511 42L506 68M506 68L481 58M481 58L476 45M475 45L473 16M475 45L476 45M497 14L499 14L499 36M525 38L511 42M542 64L533 74M533 74L506 74L506 69M506 69L506 68M469 84L476 90M469 84L481 58M506 69L498 87M476 90L498 87M703 760L703 727M703 760L707 760L711 761L715 761L719 764L723 765L727 765L731 766M731 766L734 763L737 760L737 755L739 751L742 747L744 744L748 741L750 737M703 727L707 723L711 718M711 718L715 719L719 721L723 723L727 724L731 726L734 728L738 730L742 731L746 734L750 735M750 737L750 735M660 753L663 755L667 757L671 758L675 759L679 760L683 762L686 763L690 766L694 767M660 753L656 753L656 730M694 767L698 763L703 760M656 730L659 724M659 724L703 727M774 759L750 737M738 781L731 781L731 766M756 728L750 735M711 700L715 697L720 698L723 696L727 694L731 693L735 692L739 690L744 690L747 688M711 700L711 718M656 797L650 767M656 797L634 813M622 802L625 805L628 807L632 809L634 813M622 802L621 798L620 794L621 789L621 785L620 781L618 777L618 773L618 769M650 767L620 767M620 767L618 769M588 828L587 801M587 801L622 801L622 802M587 801L582 796M582 796L583 792L585 788L586 783L586 779L587 774L588 770M588 770L618 769M660 753L650 767M618 734L656 734L656 730M618 734L618 739L619 743L620 747L619 751L621 755L620 759L619 763L620 767M691 786L670 799M691 786L715 807M670 799L681 825M715 807L696 828M694 767L691 786M656 797L670 799M730 807L715 807L715 807M747 667L721 648M760 620L728 633M760 620L762 620M721 648L728 633M760 620L744 620L744 594M744 594L734 591M734 591L731 594L726 596L721 596L717 598L713 600M728 633L713 600M343 62L335 73M363 90L357 96M357 96L352 96L348 97L344 95L340 95M340 95L339 91L339 86L336 82L335 78L335 73M283 223L273 216M254 240L259 219M273 216L259 216L259 219M311 213L307 191M332 179L312 180M312 180L307 191M273 216L279 193M307 191L279 191L279 193M259 219L255 217L251 215L248 212L244 210M244 210L247 190M247 190L269 178M279 193L269 178M396 50L400 51L403 53L408 53M419 23L423 39M408 53L423 39M447 13L448 46M423 39L427 39L431 42L436 41L439 44L443 46L448 46M475 45L449 48M449 48L448 46M359 132L367 132L367 151M359 132L362 129L363 124L366 121M367 151L371 150L374 147L379 147L383 145L387 144L390 140L394 139L399 139L402 136M366 121L389 116M402 136L389 116M365 158L367 151M340 163L329 145M329 145L337 129M337 129L342 129L346 129L350 130L354 132L359 132M393 93L395 94M357 96L366 121M395 94L389 94L389 116M401 171L407 171L407 140M402 136L407 138M407 138L407 140M806 484L804 487M829 509L809 501M804 487L805 492L807 496L809 501M827 533L808 537M808 537L794 537L794 523M809 501L794 523M809 593L821 572M809 593L782 587M821 572L817 570L814 566L809 564L806 561L802 558M782 587L780 584M780 584L792 560M802 558L792 560M816 618L815 614L813 610L814 605L811 601L810 597L809 593M771 617L772 613L773 608L775 604L777 600L778 596L779 591L782 587M808 537L802 558M744 594L746 591L750 589L753 585L756 582L760 579L763 576M763 576L780 576L780 584M778 549L792 560M778 549L756 558M763 576L761 572L759 567L757 563L756 558M778 549L779 545L780 541L779 537L780 533L780 528L781 524M794 523L781 524M719 552L723 555L728 556L733 558M719 552L720 527M733 558L751 555M751 555L753 528M720 527L724 525L729 526L732 523L737 522L741 521L745 520M745 520L753 528M734 591L733 558M756 558L751 555M780 523L781 524M780 523L776 525L771 524L766 526L762 525L757 528L753 528M767 314L784 316M767 314L767 319L766 322L764 326L763 330L762 334L761 338L761 342L761 346L759 350M784 316L798 333M798 334L798 333M773 353L769 353L764 353L760 352M759 350L760 352M777 390L773 388L770 386L766 384L762 382L758 381L756 377L752 376M777 390L781 387L785 384L790 382M760 352L758 356L758 360L756 364L755 368L754 372L752 376M804 458L799 457L795 456L791 454L786 453M786 453L773 453L773 461M804 487L779 485M773 461L779 461L779 485M780 523L770 494M779 485L770 494M739 300L750 309M739 300L740 295L739 290L739 286L738 281L738 277L738 272M768 281L764 278L759 277L755 275L751 272L747 270M768 281L762 281L762 310M762 310L750 309M738 272L747 270M762 241L788 241L788 251M762 241L759 244L758 248L756 251L754 255L752 259L750 262L748 266L747 270M780 277L768 281M780 277L783 273L785 269L787 265L790 261M790 261L790 256L788 251M767 314L762 310M784 316L794 316L794 299M794 299L793 294L789 291L787 288L784 285L782 281L780 277M731 335L734 333L735 328L738 326L740 322L744 319L745 315L749 313L750 309M731 335L732 339M732 339L759 350M731 335L718 335L718 326M739 300L720 305M720 305L718 309L719 313L720 317L719 322L718 326M738 272L734 271M720 305L710 296M710 296L713 276M734 271L713 276M806 99L807 99M827 111L807 99M754 226L760 226L760 211M754 226L750 228L745 228L741 229M760 211L757 208L753 206L750 204L745 204L743 200L739 199L736 195L733 193L729 192M741 229L737 226L733 225L730 221L725 220L721 218L718 215L715 212M729 192L715 212M762 241L759 238L758 234L756 230L754 226M734 271L733 266L731 262L731 257L730 253L728 248L727 244M727 244L741 244L741 229M729 175L766 175L766 174M729 175L731 145M738 141L731 145M738 141L765 149M765 149L764 153L766 157L767 161L765 166L766 170L766 174M740 123L738 123L738 141M718 106L722 104M718 106L706 106L706 134M706 134L709 139M709 139L714 141L718 142L723 142L727 145L731 145M794 299L811 299L811 295M790 261L810 272M810 272L811 295M798 333L802 332L806 329L810 329L813 325L818 324M811 295L816 298M669 42L660 40M660 40L647 21M647 21L665 6M688 27L687 23L686 18L683 14M665 6L683 14M683 14L685 10L686 6L690 3L692 -1L692 -6L694 -9L697 -12M560 24L568 18M568 18L572 -14M627 22L625 59M627 22L604 13M604 13L600 16M600 16L595 16L595 43M595 43L624 60M624 60L625 59M660 40L635 61M647 21L642 21L638 19L633 19M633 19L627 22M635 61L625 59M639 -15L633 19M602 -13L604 13M568 18L600 16M586 48L595 43M611 77L624 77L624 60M611 77L582 71M645 99L665 115M645 99L647 95L649 91L651 87L654 84L655 79M657 79L685 95M657 79L655 79M665 115L670 114L675 113L680 111M680 111L686 98M686 98L685 95M637 103L645 99M637 103L636 107L635 111L634 116L631 119L630 124L629 128M656 133L657 129L660 124L662 120L665 115M656 133L639 138M639 138L632 135M629 128L632 135M613 88L637 88L637 103M613 88L611 77M635 61L640 63L641 68L645 70L649 72L652 76L655 79M674 60L671 63L668 66L666 70L663 73L660 76L657 79M699 69L685 95M673 147L691 130M673 147L656 133M691 130L680 111M691 130L706 134M718 106L686 98M672 627L683 627M672 627L655 607M683 627L710 627L710 599M655 607L658 603L660 600L663 597L665 593L667 589L669 586L673 583M673 583L705 592M705 592L710 599M627 615L630 612L635 612L639 611L643 608L646 606M627 615L633 615L633 653M646 606L655 607M661 655L657 655L653 655L649 654L645 654L641 652L637 653L633 653M661 655L672 627M721 648L713 651M713 651L683 627M713 600L710 599M704 555L711 556M704 555L701 557L697 557L694 561L689 561L686 563L682 565L678 566L675 567L671 570M711 556L705 592M671 570L673 583M711 556L719 552M662 657L652 698M662 657L698 675M699 685L698 680L698 675M699 685L657 704M657 704L652 698M713 651L711 654L710 658L708 662L704 664L703 668L700 671L698 675M661 655L662 657M711 700L708 696L705 693L703 688L699 685M659 724L659 720L658 716L657 712L657 708L657 704M582 796L562 796L562 798M562 798L550 820M618 734L610 728M588 770L575 750M610 728L606 731L603 733L600 735L596 737L592 739L589 741L586 744L583 746L579 749L575 750M562 798L560 795L556 793L553 790L551 786L548 784L545 781M575 750L566 747M566 747L560 750M545 781L547 777L549 773L550 769L553 766L554 762L555 757L558 754L560 750M363 822L353 793M395 824L401 810M401 810L399 806L398 802L395 799L393 795L391 792L389 788L387 784M387 784L383 786L379 786L374 788L370 788L366 789L361 790L357 793L353 793M353 793L345 788M345 787L351 759M244 210L231 213M217 245L231 245L231 213M231 213L213 200M213 200L208 201L203 202L199 203M337 129L334 124M340 95L338 97M334 124L338 124L338 97M312 180L311 176L308 173L308 169L305 166L302 163L301 159M269 178L270 169M301 159L270 169M329 145L324 147L320 147L316 149L312 150L307 150L303 150M301 159L303 150M307 119L311 119L316 121L320 122L325 122L329 123L334 124M307 119L300 144M303 150L300 144M341 605L345 606L349 604L354 604L358 606L362 606M362 606L365 602L368 599L369 595L372 592L374 588L376 584M307 119L304 116L303 111L301 108L299 104M338 97L334 98L330 97L326 98L322 97L318 96L314 98L310 96L305 97M299 104L305 97M335 73L308 73L308 70M305 97L306 93L307 88L306 83L307 79L309 74L308 70M329 35L313 45M313 45L306 67M308 70L306 67M199 126L203 124L207 121L211 119L215 118L218 115L223 114L226 112M216 91L226 91L226 112M409 91L433 112M409 91L419 72M419 72L443 68M433 112L440 112M454 84L452 88L451 92L448 96L445 99L443 104L442 108L440 112M454 84L443 68M440 112L440 112M395 94L409 91M407 138L433 112M408 53L419 72M449 48L449 52L447 56L446 60L445 64L443 68M469 84L454 84L454 84M479 120L476 90M479 120L440 112M459 146L447 140M459 146L459 172M447 140L430 151M430 151L433 151L433 173M459 172L433 173M479 120L483 125M480 135L480 130L483 125M480 135L477 137L473 139L469 140L466 143L462 144L459 146M440 112L442 116L442 120L443 124L444 128L445 132L446 136L447 140M467 178L459 172M467 178L472 179M472 179L474 175L478 173L480 169L482 165L484 162L486 159L488 155L491 152M491 152L480 135M407 140L411 141L414 144L419 145L422 148L426 149L430 151M408 183L426 183L426 181M426 181L429 176L433 173M704 555L679 527M712 518L708 519L703 518L699 516L694 516L689 516M712 518L720 527M689 516L679 516L679 527M671 570L669 566M669 566L676 528M679 527L676 528M777 390L775 399M750 377L752 376M750 377L749 381L748 385L747 389L746 393L743 397L742 401L742 405L740 409M740 409L748 414M748 414L752 412L755 410L759 407L763 406L767 403L772 402L775 399M802 422L789 424M775 399L778 402L779 406L781 410L782 414L786 417L787 421L789 424M786 453L787 426M789 424L787 426M773 461L765 458M787 426L783 427L779 427L774 428L770 428L765 429L761 431L757 431M765 458L757 458L757 431M748 414L750 418L752 422L752 426L755 430M757 431L755 430M695 410L688 410L688 397M695 410L720 413M720 413L725 409M725 409L713 377M688 397L693 385M693 385L697 383L701 382L706 381L709 378L713 377M750 377L746 375L742 375L737 375L733 374L729 372L725 372L721 370L717 370M740 409L725 409M713 377L717 370M732 339L716 363M716 363L717 370M799 146L805 141M799 146L795 145L790 144L785 144L781 144L776 143L772 142M805 141L796 141L796 112M772 142L772 138L773 134L773 130L773 126L773 122L773 117M773 117L778 117L782 114L787 116L791 113L796 112M824 142L805 141M826 173L821 175L816 173L812 172L807 172L802 172L798 172M798 172L798 168L797 163L797 159L798 155L800 150L799 146M807 99L796 112M764 110L768 114L773 117M765 149L772 142M767 174L767 179L766 183L766 187L764 191L764 196L763 200L763 204L763 209M767 174L794 176M794 176L799 201M763 209L767 210L772 210L777 210L782 210L787 211M787 211L799 201M727 178L729 175M727 178L728 182L728 187L729 192M760 211L763 209M766 174L767 174M798 172L794 176M819 205L815 203L811 202L807 203L803 201L799 201M788 251L799 239M799 239L797 235L795 231L795 226L793 222L791 218L787 215L787 211M799 239L804 237M804 237L824 212M810 272L814 269L818 267L822 266L826 265M804 237L808 239L811 241L815 243L819 245L822 247L826 249M665 6L660 -11M501 219L497 218L493 217L489 217L484 217M501 219L503 216L506 213L506 208L509 204L512 201L514 197M514 197L506 184M506 184L482 184L482 186M482 186L484 217M484 217L484 217M613 88L601 105M573 76L573 81L571 85L571 89M571 89L578 101M578 101L583 101L587 102L592 103L596 104L601 105M629 128L604 117M601 105L604 117M545 115L544 101M545 115L522 130M522 130L506 117M534 91L530 94L526 96L522 98L517 99L513 100L509 103M534 91L544 101M509 103L506 117M533 74L534 91M498 87L509 87L509 103M571 89L544 89L544 101M483 125L486 123L491 123L495 122L498 119L502 118L506 117M511 171L505 156M511 171L533 170M505 156L523 137M533 170L539 151M523 137L526 140L529 143L532 145L536 147L539 151M506 184L507 179L510 175L511 171M472 179L476 180L479 184L482 186M491 152L496 154L501 156L505 156M522 130L523 137M608 719L580 703M608 719L625 690M614 672L625 690M614 672L584 672L584 684M584 684L580 703M610 728L608 719M566 747L561 714M561 714L580 703M652 698L648 696L644 695L640 693L636 694L632 693L628 692L625 690M633 653L614 669M614 669L614 672M387 784L390 779L391 774M351 759L355 756L359 755L363 754L366 752L370 750L374 748L377 746M391 774L390 770L388 765L385 762L383 758L381 754L380 749L377 746M333 717L368 714M368 714L383 729M377 746L383 729M627 615L615 612M614 669L592 641M592 641L595 638L598 635L601 631L603 627L606 624L608 620L610 616L614 613M615 612L614 613M538 591L538 595M538 595L509 613M496 584L498 584L498 604M498 604L502 606L505 610L509 613M300 144L297 142L292 141L288 140L283 139L280 135L275 134M275 134L273 138L269 141L267 146L263 148L260 152M270 169L268 166L265 163L263 158L260 156M260 156L260 152M240 132L223 132L223 146M240 132L260 152M260 156L233 167M223 146L233 167M247 190L243 187L240 184L237 181L233 178L230 175M213 200L220 179M220 179L230 175M230 175L233 167M326 677L331 676L335 678L339 678L344 679L348 679L352 681L357 680L361 680L365 682L370 681M346 643L359 644M359 644L376 674M376 674L370 681M368 714L370 681M362 606L364 610L368 613L370 617L371 622L374 626M374 626L371 630L368 633L366 637L362 641L359 644M374 626L390 626L390 626M390 626L405 645M379 673L405 673L405 645M379 673L376 674M383 729L387 728L391 729L395 727M395 727L413 690M379 673L413 690M425 603L401 603L401 606M401 606L385 606L385 584M390 626L392 622L393 618L397 615L400 611L401 606M272 84L283 104M272 84L247 85M243 115L247 115L247 85M243 115L272 115L272 115M272 115L276 112L279 107L283 104M299 104L283 104M279 64L306 64L306 67M279 64L272 84M222 79L220 83L217 86L216 91M222 79L236 72M236 72L240 75L243 78L244 82L247 85M242 116L238 115L234 114L230 112L226 112M242 116L243 115M275 134L274 129L273 125L272 120L272 115M242 116L240 121L239 127L240 132M313 45L310 42L305 40L302 38L297 37L293 36L290 33M279 64L277 60M277 60L278 55L280 51L283 48L285 45L286 40L288 36L290 33M304 6L285 20M266 -16L268 16M268 16L285 16L285 20M285 20L287 24L288 29L290 33M203 -9L205 -5L208 -2L212 0L215 3L216 7M216 7L209 25M237 -12L237 -7L234 -2L233 3M233 3L216 7M688 397L672 397L672 399M693 385L672 363M672 363L658 363L658 383M672 399L670 395L667 392L664 389L660 387L658 383M674 431L660 457M674 431L671 429L668 426L665 422L662 420M662 420L647 420M647 420L642 420L642 445M660 457L642 445M695 410L682 431M682 431L674 431M672 399L662 420M646 606L644 602L643 598L642 594L641 589L638 585L637 581L635 577M669 566L665 564L660 563L656 563L652 560L647 560M647 560L646 563L643 566L640 570L639 574L635 577M615 612L610 585M610 585L620 574M620 574L635 577M548 516L553 526M548 516L551 512L554 510L558 508L561 504L565 503L568 499M553 526L569 534M586 528L582 530L577 530L573 533L569 534M586 528L581 504M568 499L581 504M770 494L766 495L762 493L757 494L753 494L749 494M765 458L762 461L758 462L754 463L750 464L747 466L744 468M744 468L749 494M712 518L721 518L721 495M745 520L746 516L746 512L746 508L745 504L747 500L747 496M721 495L726 496L730 496L734 495L739 496L743 494L747 496M747 496L749 494M727 178L702 178L702 175M709 139L708 143L705 146L704 150L702 153L700 157L698 161L698 165L696 168M702 175L696 168M554 472L531 472L531 485M554 472L561 475M548 516L545 514M568 499L567 495L567 491L564 487L563 483L562 479L561 475M531 485L533 488L536 492L536 496L539 499L540 503L542 507L544 510L545 514M426 181L438 201M467 178L454 201M438 201L454 201M484 217L462 214M454 201L462 214M447 233L431 215M431 215L413 218M413 218L411 222L410 228L409 233M438 201L431 201L431 215M462 214L447 233M400 198L413 218M484 217L476 217L476 243M501 219L508 228M502 253L508 228M502 253L498 255M578 101L570 122M545 115L560 126M560 126L565 124L570 122M539 151L543 149L548 150L553 149L557 148M560 126L557 148M604 117L591 133M570 122L591 122L591 133M514 197L536 197L536 200M533 170L545 170L545 187M536 200L545 187M592 641L577 641M584 684L581 682L577 680L575 676L572 672L569 670L565 668M565 668L577 668L577 641M562 615L561 624M562 615L538 595M513 626L509 613M513 626L517 629L521 631L524 634L528 637L532 639M532 639L535 637L539 636L543 634L546 631L549 629L553 627L557 625L561 624M562 615L576 601M614 613L576 601M577 641L561 624M412 646L405 645M412 646L434 628M425 603L429 606L433 607L436 611M434 628L436 611M545 781L540 781L536 783L531 783L527 784M560 750L517 742M517 742L512 746M527 784L512 784L512 746M391 774L428 766M417 736L418 740L422 743L424 747L425 751L428 754L429 758L431 762M417 736L413 736L410 732L406 733L402 731L399 728L395 727M428 766L431 762M401 810L405 809L409 808L413 806L418 805L421 802L425 801M428 766L428 770L428 775L428 779L427 784L426 788L427 793L426 797L425 801M425 801L444 813M498 604L472 604L472 614M472 614L469 611L464 610L461 607L457 605L453 604M453 604L436 604L436 611M220 179L199 166M223 146L203 146L203 143M214 38L209 25M222 79L218 76L214 75L212 71L208 70L204 69L201 65L197 64L194 62L191 59M263 53L261 49L262 45L261 40L260 36L258 31L257 27L256 22M263 53L238 64M238 64L235 60L234 56L233 52L230 49L230 44L226 41M226 41L230 39L233 36L236 32L240 30L243 28L245 24L249 22M249 22L256 22M277 60L272 58L267 56L263 53M268 16L256 22M236 72L238 64M214 38L218 39L222 40L226 41M233 3L236 5L238 9L240 13L244 15L247 18L249 22M639 389L646 419M639 389L635 392L631 393L627 395L623 395L619 396L615 399L611 400M646 419L610 424M611 400L609 404L609 408L606 412L604 416M610 424L605 419M604 416L605 419M640 387L658 383M640 387L639 389M647 420L646 419M598 374L572 374L572 386M598 374L611 400M572 395L572 386M572 395L604 395L604 416M576 595L593 577M576 595L573 592L572 587L569 584L567 580L564 577L562 573L559 570M567 560L590 562M567 560L560 565M593 577L590 562M559 570L560 565M610 585L593 577M576 601L576 595M538 591L542 589L544 585L546 581L551 580L554 577L556 573L559 570M553 526L538 551M538 552L538 551M538 552L542 554L546 556L549 558L552 561L556 563L560 565M569 534L567 560M676 528L672 528L668 528L664 526L660 524L656 524L652 523M647 560L643 551M643 551L643 547L646 543L647 539L647 535L650 531L650 527L652 523M686 496L689 516M686 496L682 494L678 492L674 489M674 489L669 490L664 491L660 494M660 494L651 522M651 522L652 523M674 489L672 485L674 480L673 475L672 471L672 466M660 494L657 490L653 488L650 485L646 483M672 466L661 460M661 460L646 460L646 475M646 483L646 475M733 447L733 452L736 456L737 460L737 464M733 447L715 438M737 464L708 464L708 477M715 438L699 447M699 447L698 458M698 458L708 458L708 477M708 477L708 477M755 430L733 447M744 468L737 464M720 413L719 417L718 421L718 426L716 430L716 434L715 438M721 495L708 495L708 477M682 431L699 447M660 457L661 460M672 466L676 466L680 463L685 463L689 461L693 460L698 458M686 496L708 477M508 228L526 229M536 200L538 212M526 229L538 212M673 147L674 151L675 155L674 160L675 164M639 138L639 143L642 147L642 152L644 156L644 161L646 165M646 165L675 164M696 168L677 168L677 166M675 164L677 166M702 175L695 203M667 199L677 166M667 199L670 205M670 205L695 203M715 212L707 214M707 214L695 203M556 267L548 291M556 267L538 251M548 291L522 291L522 282M522 282L523 261M523 261L526 257L531 256L534 253L537 250M538 251L537 250M502 253L523 261M526 229L529 233L530 238L533 242L535 247L537 250M538 212L565 212L565 226M565 226L562 229L560 232L556 235L553 237L551 241L547 243L545 246L542 249L538 251M672 363L672 359M640 387L631 387L631 368M631 368L656 346M656 346L672 346L672 359M716 363L712 362L709 358L706 356L702 354L698 353L694 351L691 348M691 348L672 348L672 359M718 326L694 328M691 348L694 328M557 148L563 154M545 187L557 184M563 154L562 159L562 163L560 167L560 171L558 176L557 180L557 184M561 714L551 708M565 668L561 669L557 669L554 671L550 672L545 672L542 674M551 708L542 674M517 742L526 717M551 708L526 717M532 639L533 669M533 669L542 674M513 626L489 626L489 650M472 614L473 640M489 650L473 640M434 628L454 647M454 647L473 640M520 792L505 792L505 794M520 792L531 818M505 794L504 798L501 802L499 806L497 810L493 813L492 817L490 821M527 784L524 789L520 792M462 802L459 805L455 807L452 810L448 811L444 813M462 802L465 805L470 806L473 808L476 812L479 815L484 816L487 819L490 821M631 368L622 363M598 374L601 367M622 363L618 365L614 365L610 367L605 366L601 367M542 415L547 417L552 418L557 420M542 415L522 422M547 451L543 451L538 450L534 450L530 447L525 447M547 451L561 430M561 430L557 420M536 384L536 389L537 393L538 397L540 401L541 406L542 410L542 415M536 384L566 381M572 395L557 420M566 381L572 386M530 380L522 380M530 380L536 384M554 472L547 472L547 451M571 433L575 432L578 429L583 429L587 428L590 427L594 425L597 422L601 421L605 419M571 433L561 430M651 522L646 520M646 483L629 497M646 520L643 517L641 513L639 509L635 507L633 504L632 500L629 497M587 528L599 528L599 552M587 528L611 519M611 519L620 528M620 528L619 532L618 536L617 541L617 545L617 549M599 552L615 551M615 551L617 549M586 528L587 528M590 562L593 559L597 556L599 552M646 520L620 528M629 497L625 496L620 497L616 494L612 494M612 494L611 498L611 502L612 507L612 511L611 515L611 519M643 551L617 549M620 574L615 551M603 489L579 467M603 489L608 489M608 489L620 460M584 456L588 454L592 453L596 454L600 451L604 450L608 450L612 449M584 456L579 467M612 449L619 456M619 456L620 460M581 504L584 500L589 499L592 496L595 493L599 491L603 489M561 475L579 467M612 494L608 489M646 475L620 460M571 433L584 433L584 456M610 424L612 424L612 449M642 445L619 445L619 456M581 343L562 358M581 343L569 322M569 322L565 320M565 320L539 340M562 358L544 350M544 350L539 340M566 381L562 381L562 358M590 345L601 367M590 345L581 343M530 380L544 350M502 296L505 298L508 301L511 304L514 307L517 309L521 311L523 314L526 316M526 316L526 321L527 326L525 331L527 335M527 335L523 336L520 340L516 340L513 343L509 343L505 345M522 282L519 283L516 287L512 289L508 290L505 293L502 296M548 291L551 297M551 297L547 299L545 303L540 304L537 308L533 311L530 314L526 316M551 297L556 300M556 300L565 320M539 340L535 338L530 338L527 335M591 133L592 143M563 154L568 154L573 155L578 154L583 155M592 143L588 146L585 150L583 155M632 135L629 139L625 142L622 145L618 147L615 150M592 143L597 144L601 146L606 147L610 149L615 150M565 226L566 226M557 184L572 192M572 192L572 196L571 200L569 205L570 209L569 213L568 218L566 222L566 226M571 262L556 267M571 262L572 258L575 255L575 251L577 247L579 243L579 239L581 236M566 226L581 226L581 236M526 717L522 715L520 711L519 707L515 705L513 701L510 699M533 669L530 671L526 673L522 674L518 675M518 675L517 679L517 684L513 687L512 691L511 695L510 699M489 650L490 654L490 659L491 663M518 675L491 663M512 746L508 744L504 746L500 747L495 746M495 746L488 706M510 699L488 699L488 706M489 749L485 748L481 748L477 746L473 744L469 743L466 741L461 740M489 749L483 749L483 774M483 774L466 784M466 784L463 782L460 778L455 777L451 775L449 771L445 769L441 767L437 765L434 762M434 762L461 740M505 794L483 774M495 746L489 749M462 802L462 797L464 793L466 788L466 784M431 762L434 762M451 666L470 683M451 666L428 673M444 710L453 711M444 710L421 688M453 711L457 709L460 706L463 702L467 700L471 697M470 683L471 697M428 673L421 673L421 688M454 647L451 666M491 663L488 666L485 669L483 672L480 675L477 678L474 681L470 683M412 646L428 673M417 736L444 736L444 710M461 740L460 736L459 732L458 727L456 723L456 719L455 715L453 711M413 690L421 688M488 706L484 703L479 702L475 700L471 697M683 277L668 265M683 277L705 270M668 265L692 265L692 241M705 270L700 241M692 241L699 240M700 241L699 240M713 276L705 270M727 244L722 243L718 244L713 244L709 242L704 243L700 241M670 205L669 209L667 214L666 218L665 223M707 214L699 240M665 223L692 241M590 345L603 345L603 333M622 363L624 359L624 355L622 350L623 346L624 341L623 337M603 333L623 337M569 322L601 305M601 305L602 306M603 333L604 328L603 324L602 320L603 315L603 310L602 306M710 296L695 302M694 328L692 326M692 326L695 302M683 277L682 294M695 302L691 299L687 296L682 294M556 300L559 298L564 298L567 295L571 294L575 293L578 291L582 288L586 287L590 286M601 305L599 297M599 297L595 294L593 289L590 286M571 262L574 266L577 268L581 271L582 275L586 277L589 280M589 280L590 286M610 251L582 235M610 251L611 255M581 236L582 235M589 280L611 280L611 255M593 178L597 176L602 175L606 173L610 170L615 170M593 178L588 188M588 188L604 208M615 170L619 171L623 175L626 177L631 179L634 182M622 209L604 208M622 209L635 209L635 188M634 182L635 188M583 155L593 178M615 150L614 155L614 160L614 165L615 170M572 192L588 188M582 235L604 208M646 165L644 169L641 172L639 176L636 178L634 182M610 251L612 248L615 246L619 243L621 240L623 236L625 233L628 230L631 227M631 227L628 223L626 219L624 214L622 209M631 227L649 234M667 199L635 188M649 234L665 223M649 234L650 238L651 242L651 247L651 251L654 255L653 259M668 265L662 265M653 259L662 265M611 255L629 271M653 259L629 271M599 297L603 295L606 292L610 290L613 288L617 285L621 283L624 281L628 279M629 271L628 279M630 312L638 326M630 312L636 292M636 292L641 291L646 292L651 293L656 293M662 320L664 303M662 320L659 323L655 327L651 329M664 303L656 293M651 329L638 326M602 306L606 307L610 308L614 308L618 310L622 310L626 312L630 312M623 337L627 335L631 332L635 329L638 326M628 279L630 282L633 285L635 288L636 292M662 265L656 265L656 293M692 326L662 320M682 294L679 297L676 299L671 300L668 302L664 303M656 346L655 342L653 338L652 333L651 329" stroke="#5f6161"/>
<path d="M6.0 806.0 L6.0 706.8 L5.9 706.8 L8.2 704.4 L11.8 703.1 L14.8 701.9 L17.3 700.6 L19.7 698.2 L23.3 698.0 L27.1 699.4 L29.4 702.1 L30.8 705.6 L33.6 706.3 L36.9 706.8 L41.0 706.1 L45.6 704.3 L45.7 707.5 L46.8 710.5 L45.6 715.4 L48.3 715.8 L51.7 716.7 L50.6 720.3 L50.5 724.0 L54.8 725.1 L59.1 725.3 L62.3 726.3 L65.3 727.7 L68.6 729.2 L71.4 730.2 L73.9 735.1 L76.6 736.3 L78.8 738.8 L82.5 742.5 L77.7 741.8 L73.9 740.1 L70.6 741.7 L67.7 743.8 L71.4 747.4 L75.6 748.3 L78.8 749.9 L82.2 749.5 L86.2 748.7 L84.3 745.8 L83.7 742.5 L88.7 741.3 L92.5 743.2 L96.0 745.0 L97.3 749.9 L100.6 750.0 L104.7 751.1 L105.9 756.1 L110.0 755.5 L113.3 756.1 L114.3 752.9 L115.7 749.9 L118.9 750.0 L121.9 748.7 L123.4 744.8 L125.6 741.3 L130.5 742.5 L133.0 747.4 L135.8 746.7 L139.1 746.2 L142.8 749.9 L147.8 751.1 L151.0 749.7 L155.1 749.9 L157.1 753.3 L160.1 756.1 L162.8 753.8 L165.5 752.0 L167.5 749.9 L164.6 748.1 L162.5 745.0 L161.2 741.3 L160.1 737.6 L158.1 734.1 L157.6 730.2 L154.5 728.2 L150.2 727.7 L149.0 722.8 L152.3 721.6 L155.1 721.6 L154.3 717.3 L153.9 713.0 L151.8 712.6 L154.1 716.0 L157.0 718.8 L156.1 721.8 L156.2 724.9 L160.8 725.9 L164.1 728.4 L166.1 731.1 L169.3 732.8 L172.5 734.3 L175.4 733.9 L178.1 735.4 L180.6 739.2 L183.4 742.5 L186.4 743.3 L189.7 743.8 L192.2 745.1 L195.1 746.4 L197.0 749.0 L200.7 750.1 L202.7 752.1 L205.7 753.8 L208.7 755.1 L211.5 757.4 L213.8 759.3 L216.8 760.9 L219.9 760.2 L223.2 760.4 L225.4 761.6 L229.0 760.5 L231.5 760.4 L234.9 761.7 L237.9 760.9 L235.8 758.3 L232.6 756.5 L230.2 754.3 L229.1 751.3 L228.4 747.8 L227.3 744.2 L223.2 744.3 L220.3 746.0 L218.6 743.1 L216.8 739.8 L212.2 739.5 L208.0 738.1 L204.2 738.0 L201.0 737.2 L199.2 731.9 L194.7 732.2 L190.4 733.7 L186.0 730.2 L189.7 729.9 L192.2 728.4 L194.2 726.1 L195.7 723.1 L191.9 722.5 L188.3 721.6 L185.1 719.6 L182.5 716.1 L187.8 714.4 L191.3 710.8 L187.8 709.1 L191.1 707.0 L192.2 703.8 L193.9 701.2 L197.1 699.7 L201.0 699.4 L200.1 696.8 L204.5 695.0 L206.2 689.8 L202.7 688.0 L204.5 684.5 L203.6 681.8 L198.3 683.6 L198.5 686.8 L196.6 689.8 L193.9 694.1 L191.0 694.0 L187.8 694.1 L185.1 690.6 L182.1 688.7 L179.0 688.0 L176.4 682.7 L179.9 680.1 L185.1 681.0 L187.9 678.1 L189.6 674.8 L192.2 672.2 L194.8 669.8 L197.5 667.8 L202.0 667.0 L206.2 666.9 L208.8 664.2 L210.6 661.6 L212.0 658.5 L215.0 656.4 L212.4 652.8 L215.9 650.2 L220.3 652.0 L220.3 655.5 L223.3 653.7 L226.4 653.5 L229.1 652.0 L231.7 651.1 L235.0 650.2 L237.9 648.5 L240.5 645.8 L244.0 645.2 L248.2 645.1 L251.9 645.8 L255.4 650.2 L258.6 651.9 L262.5 652.8 L267.8 651.1 L273.0 652.8 L276.8 654.0 L280.1 653.7 L285.3 651.1 L287.3 649.0 L290.6 647.6 L295.9 650.2 L301.1 652.0 L305.5 652.8 L306.4 649.4 L307.3 645.8 L307.8 641.3 L309.1 637.0 L310.3 633.5 L310.8 630.0 L310.9 625.5 L313.1 621.9 L316.7 623.4 L319.3 625.5 L319.8 629.4 L321.2 632.8 L321.7 636.6 L322.5 639.8 L323.8 642.7 L325.5 645.7 L325.4 648.9 L326.8 652.5 L329.1 655.1 L334.0 657.6 L334.5 660.0 L338.0 659.3 L341.2 659.7 L343.9 658.8 L343.9 653.9 L347.1 655.0 L351.3 655.1 L353.9 653.8 L356.2 651.4 L358.4 647.7 L361.1 644.0 L363.1 648.9 L361.3 652.5 L358.7 655.1 L362.6 654.5 L365.2 652.3 L368.5 651.4 L372.7 649.7 L375.9 646.5 L376.9 642.6 L378.4 639.1 L377.7 635.7 L375.9 632.9 L378.6 634.7 L380.8 636.6 L385.7 636.6 L386.3 633.6 L387.0 630.5 L388.8 634.7 L389.4 639.1 L392.0 641.4 L395.2 642.7 L398.1 644.0 L394.5 645.5 L391.2 646.2 L388.2 647.7 L384.9 648.2 L381.6 650.2 L378.4 650.9 L381.8 650.2 L385.6 649.3 L389.7 650.2 L393.1 648.9 L396.7 648.9 L400.1 648.5 L404.1 647.8 L407.9 648.0 L411.2 647.7 L414.2 646.9 L417.8 646.5 L417.8 642.8 L420.7 643.3 L424.3 642.0 L427.6 642.8 L428.8 637.9 L432.5 641.6 L436.0 641.6 L438.8 640.2 L442.4 640.3 L445.7 640.3 L448.5 641.8 L452.2 641.6 L454.7 646.5 L451.3 647.9 L447.3 648.2 L443.8 649.3 L439.9 649.4 L442.4 651.4 L444.8 652.8 L448.0 653.2 L451.0 655.1 L454.2 654.6 L457.2 656.3 L460.4 657.4 L463.4 658.9 L466.4 659.9 L468.8 661.5 L471.9 662.0 L474.9 661.3 L474.4 657.6 L478.5 657.0 L481.8 656.3 L484.6 655.7 L488.0 654.6 L491.1 654.9 L494.1 653.9 L497.8 652.6 L497.8 656.3 L494.9 657.9 L492.2 659.1 L489.2 660.0 L487.2 662.8 L484.2 664.9 L486.1 667.7 L486.7 671.1 L489.8 671.8 L493.7 672.6 L496.6 673.6 L500.5 675.1 L503.7 676.5 L507.6 677.3 L506.4 682.2 L503.7 681.4 L500.3 681.4 L503.9 685.9 L504.8 689.1 L506.4 692.0 L507.9 694.7 L508.6 697.7 L510.1 700.7 L511.0 703.7 L513.1 706.2 L513.8 709.3 L518.7 710.5 L522.3 709.7 L526.1 710.5 L529.1 708.8 L532.0 708.0 L535.0 707.0 L538.4 706.8 L542.2 704.7 L545.8 703.1 L550.0 700.7 L546.2 701.8 L543.2 704.6 L540.0 705.6 L544.0 704.5 L547.4 701.9 L544.9 706.8 L548.6 705.0 L551.7 703.4 L554.8 700.7 L557.2 698.6 L561.1 697.8 L564.0 695.6 L567.1 694.5 L570.0 692.7 L573.1 692.4 L577.0 691.3 L579.4 689.6 L582.5 689.4 L585.6 690.8 L585.6 685.9 L582.7 686.1 L579.4 685.9 L581.8 683.6 L583.2 680.5 L585.6 678.5 L589.0 676.8 L592.9 674.8 L595.9 675.3 L599.1 674.8 L602.2 674.3 L605.5 673.9 L608.0 674.5 L611.4 673.6 L614.0 675.8 L616.0 678.0 L618.8 679.7 L621.5 682.1 L625.2 683.5 L628.7 684.6 L631.8 686.6 L635.0 688.4 L637.3 690.8 L639.9 693.3 L640.9 696.3 L642.2 699.4 L643.8 703.0 L645.9 706.8 L649.2 707.9 L652.1 710.6 L655.7 711.7 L655.8 714.9 L657.0 717.9 L655.7 722.8 L659.0 726.1 L660.7 730.2 L664.3 733.1 L668.1 735.1 L670.4 738.0 L672.5 740.5 L674.2 743.8 L677.0 745.3 L679.1 747.4 L680.2 751.2 L681.6 754.8 L682.7 758.5 L682.8 762.2 L685.3 757.3 L688.6 756.0 L692.7 756.1 L696.6 757.4 L700.1 758.5 L702.4 762.0 L703.8 765.9 L702.5 770.8 L705.4 773.9 L708.7 777.0 L710.7 779.1 L712.4 781.9 L710.6 785.0 L707.5 786.8 L709.9 791.8 L710.6 795.5 L712.1 799.0 L712.1 802.9 L712.4 806.5 L712.0 806.0Z" fill="#024467" stroke="none"/>
<path d="M299.1 60.3 L304.5 56.6 L309.4 55.4 L314.3 57.9 L315.6 66.5 L322.9 71.4 L319.3 75.1 L320.5 83.7 L323.7 92.3 L322.9 96.0 L318.0 87.4 L314.3 76.3 L310.6 66.5 L306.9 60.3 L300.8 62.8Z" fill="#25456a" stroke="#1d3a5c"/>
<path d="M368.5 261.0 L374.7 257.8 L380.8 262.7 L388.2 266.4 L395.6 273.8 L395.6 276.3 L388.2 271.3 L380.8 267.6 L373.4 262.7 L369.7 262.7Z" fill="#25456a" stroke="#1d3a5c"/>
<path d="M438.7 377.2 L442.4 368.6 L447.3 367.4 L447.8 362.5 L449.8 364.9 L448.5 371.1 L444.8 374.8 L443.6 378.5Z" fill="#25456a" stroke="#1d3a5c"/>
<path d="M604.5 307.0 L607.7 313.2 L611.4 310.7 L616.3 307.0 L620.0 300.9 L626.2 296.0 L627.4 293.5 L622.5 294.7 L621.3 287.3 L618.8 291.0 L615.1 286.1 L613.9 292.3 L612.6 298.4 L610.2 304.6Z" fill="#25456a" stroke="#1d3a5c"/>
<path d="M526.1 502.0 L528.6 505.7 L531.0 505.7 L532.3 510.7 L531.0 520.5 L536.0 525.4 L532.3 530.4 L533.5 537.8 L529.8 536.5 L526.1 531.6 L528.1 523.0 L526.1 513.1Z" fill="#25456a" stroke="#1d3a5c"/>
<path d="M423.9 413.4 L426.4 417.1 L427.6 424.5 L431.3 429.4 L431.3 434.3 L427.6 431.9 L425.1 424.5 L423.9 418.3Z" fill="#25456a" stroke="#1d3a5c"/>
<path d="M540.5 601.4 L544.1 610.4 L553.1 610.4 L555.6 603.2 L557.8 610.4 L563.9 611.2 L562.1 614.0 L551.3 615.8 L544.1 619.4 L541.2 614.0Z" fill="#25456a" stroke="#1d3a5c"/>
<path d="M136.5 660.0 L136.3 664.4 L132.7 667.1 L126.9 667.1 L121.8 664.4 L120.1 660.0 L122.5 655.6 L127.7 652.9 L132.8 652.9 L135.7 655.6Z" fill="#25456a" stroke="#1d3a5c"/>
<path d="M144.1 697.0 L150.2 695.2 L153.9 699.4 L152.7 705.6 L147.8 708.0 L145.3 713.0 L140.4 711.7 L140.9 706.8 L145.3 703.1Z" fill="#25456a" stroke="#1d3a5c"/>
<path d="M42.4 681.0 L46.8 680.5 L50.5 685.9 L49.3 689.6 L45.6 688.3Z" fill="#25456a" stroke="#1d3a5c"/>
<path d="M57.9 685.9 L61.6 684.6 L64.5 693.3 L69.0 699.4 L73.9 703.1 L82.5 704.3 L85.0 709.3 L78.8 710.5 L71.4 708.0 L64.5 703.6 L60.3 697.0Z" fill="#25456a" stroke="#1d3a5c"/>
<path d="M783.5 726.8 L786.0 727.0 L786.5 735.0 L789.7 741.6 L795.4 745.8 L796.0 751.0 L791.9 754.3 L787.6 748.0 L784.4 741.6Z" fill="#25456a" stroke="#1d3a5c"/>
<path d="M769.0 790.5 L776.4 788.8 L778.9 791.8 L771.5 793.0Z" fill="#25456a" stroke="#1d3a5c"/>
<path d="M790.0 648.0 L785.5 652.7 L784.4 661.0 L781.3 671.7 L785.5 678.0 L791.9 684.4 L792.9 692.9 L795.4 701.4 L792.9 707.7 L787.6 710.9 L790.8 717.2 L785.5 720.4 L784.4 727.5" stroke="#000" stroke-width="3.4"/>
<path d="M790.0 648.0 L785.5 652.7 L784.4 661.0 L781.3 671.7 L785.5 678.0 L791.9 684.4 L792.9 692.9 L795.4 701.4 L792.9 707.7 L787.6 710.9 L790.8 717.2 L785.5 720.4 L784.4 727.5" stroke="#024467" stroke-width="1.7"/>
<path d="M181.0 5.9 L192.1 17.2 L198.2 32.0 L200.7 49.3 L200.7 71.4 L200.0 91.1 L194.5 103.4 L188.4 113.3 L184.7 137.9 L176.1 147.8 L174.8 157.6 L162.5 177.3 L152.7 194.5 L149.0 200.0 M200.7 71.4 L216.7 66.5 L226.6 51.7 L229.0 22.2 L240.1 7.4 L248.7 17.2 L248.7 23.4 L261.0 34.5 L264.7 51.7 L270.9 57.9 M214.2 200.0 L221.6 192.1 L236.4 184.7 L258.6 176.1 L270.0 172.4 M270.0 59.1 L284.8 60.3 L297.1 54.2 L306.9 52.9 L319.3 59.1 L339.0 73.9 L353.7 86.2 L368.5 98.5 L380.8 108.4 L393.1 118.2 L405.4 133.0 L417.8 147.8 L430.1 160.1 L442.4 177.3 L452.2 189.6 L459.6 200.0 M473.2 5.9 L471.9 24.6 L467.0 44.3 L452.2 55.4 L435.0 60.3 L430.1 73.9 L422.7 91.1 L415.3 103.4 L407.9 115.7 L404.2 133.0 L405.4 147.8 L398.1 167.5 L395.6 184.7 L396.8 200.0 M270.0 172.4 L302.0 165.0 L331.6 158.8 L356.2 150.2 L380.8 140.4 L398.1 134.2 L417.8 133.0 L442.4 133.0 L467.0 136.7 L491.6 135.4 L516.3 136.7 L531.0 145.3 L540.0 152.7 M588.0 5.9 L586.8 22.2 L594.2 36.9 L604.0 46.8 L604.0 61.6 L599.1 78.8 L604.0 94.8 L590.5 109.6 L596.6 123.1 L606.5 135.4 L613.9 147.8 L621.3 147.3 L611.4 150.2 L594.2 160.1 L581.9 177.3 L569.6 192.1 L562.2 200.0 M806.0 71.4 L786.3 78.8 L761.6 88.7 L741.9 96.0 L724.7 107.1 L707.5 115.7 L687.8 126.8 L668.1 136.7 L658.2 142.8 L645.9 149.0 L621.3 147.3 M540.0 152.7 L552.3 158.8 L569.6 157.6 L584.3 161.3 L594.2 160.1 M658.2 142.8 L668.1 150.2 L673.0 160.1 L677.9 169.9 L685.3 177.3 L687.8 185.9 L700.1 189.6 L714.8 189.1 L737.0 183.5 L761.6 179.8 L786.3 173.6 L806.0 175.3 M714.8 189.1 L719.8 200.0 M5.9 256.6 L24.6 254.1 L49.3 254.1 L73.9 244.3 L98.5 238.1 L123.1 228.2 L147.8 224.6 L160.1 225.8 M150.2 195.0 L145.3 204.9 L150.2 219.6 L160.1 225.8 L165.0 220.9 L172.4 222.1 L175.3 227.0 L172.4 231.4 L162.5 231.4 L160.1 225.8 M163.8 231.4 L167.5 251.6 L172.4 281.2 L172.4 305.8 L176.1 332.9 L182.2 355.1 L183.5 372.3 L181.0 395.0 M175.3 225.8 L192.1 215.9 L209.3 204.9 L220.4 195.0 M398.1 195.0 L398.1 219.6 L397.6 239.3 L393.1 259.0 L396.8 278.7 L395.6 300.9 L399.3 323.1 L401.8 342.8 L403.0 364.9 L404.2 382.2 L405.0 395.0 M415.3 364.9 L430.1 347.7 L447.3 335.4 L462.1 320.6 L474.4 298.4 L486.7 276.3 L496.6 256.6 L503.9 241.8 L513.8 235.6 L531.0 231.9 L540.9 222.1 M458.4 195.0 L467.0 204.9 L474.4 217.2 L484.2 231.9 L491.6 234.4 L503.9 240.6 L521.2 239.3 L531.0 246.7 L536.0 256.6 L540.9 276.3 L547.4 291.0 M403.0 372.3 L417.8 366.2 L432.5 363.7 L457.2 364.4 L479.3 363.7 L503.9 358.8 L528.6 352.6 L540.0 351.4 M403.0 367.4 L388.2 382.2 L378.4 395.0 M415.3 364.9 L407.9 377.2 L403.0 389.5 L404.2 395.0 M583.1 350.1 L592.9 335.4 L613.9 323.1 L638.5 313.2 L663.1 296.0 L687.8 282.4 L712.4 271.3 L727.2 256.6 L744.4 250.4 L759.2 240.6 L776.4 231.9 L806.0 223.3 M583.1 350.1 L576.9 332.9 L569.6 318.1 L557.2 305.8 L547.4 291.0 M569.6 323.1 L574.5 305.8 L584.3 293.5 M583.1 352.6 L604.0 355.1 L621.3 361.2 L643.4 364.9 L668.1 368.6 L692.7 369.8 L712.4 371.1 L732.1 371.1 L751.8 372.3 L761.6 367.4 L776.4 360.0 L791.2 350.1 L806.0 340.3 M540.0 351.4 L554.8 348.9 L569.6 347.7 L583.1 351.4 M583.1 355.1 L589.3 367.4 L599.1 382.2 L605.3 395.0 M583.1 355.1 L572.0 367.4 L559.7 379.7 L552.3 395.0 M719.8 195.0 L727.2 204.9 L737.0 214.7 L749.3 222.1 L756.7 231.9 L761.6 249.2 L766.6 266.4 L770.3 278.7 M739.5 256.6 L744.4 266.4 L761.6 276.3 L776.4 286.1 L786.3 296.0 L796.1 303.4 L806.0 308.3 M540.0 224.6 L549.9 212.2 L564.6 195.0 M388.1 386.6 L390.3 380.0 L393.3 374.0 L400.7 369.6 M592.0 350.0 L590.8 354.5 L587.5 357.8 L583.0 359.0 L578.5 357.8 L575.2 354.5 L574.0 350.0 L575.2 345.5 L578.5 342.2 L583.0 341.0 L587.5 342.2 L590.8 345.5 L592.0 350.0 M5.9 461.4 L24.6 462.6 L49.3 465.1 L73.9 470.0 L88.7 476.2 L101.0 475.0 L118.2 473.7 L135.4 473.7 L147.8 479.9 L152.7 481.1 L172.4 479.9 L197.0 476.2 L221.6 475.7 L246.3 475.0 L261.0 473.7 L270.9 470.0 M182.2 390.0 L177.3 402.3 L169.9 414.6 L163.8 426.9 L161.3 439.3 L157.6 456.5 L153.9 468.8 L147.8 479.9 L147.8 488.5 L140.4 500.8 L135.4 513.1 L131.8 532.8 L130.0 550.1 L129.3 572.2 L129.3 590.0 M261.0 473.7 L253.6 483.6 L246.3 500.8 L237.6 515.6 L236.4 525.4 L229.0 535.3 L219.2 545.1 L215.5 557.5 L214.2 572.2 L211.8 590.0 M403.0 390.0 L407.9 402.3 L415.3 419.6 L425.1 444.2 L432.5 461.4 L439.9 471.3 L437.5 481.1 L430.1 493.4 L422.7 508.2 L412.8 527.9 L400.5 545.1 L385.7 562.4 L368.5 577.2 L353.7 587.0 L343.9 590.0 M439.9 472.5 L462.1 471.3 L479.3 463.9 L496.6 456.5 L511.3 447.9 L521.2 434.3 L531.0 422.0 L543.4 409.7 M383.3 390.0 L368.5 398.6 L343.9 402.3 L334.0 412.2 L319.3 426.9 L302.0 446.6 L284.8 463.9 L270.0 470.0 M604.0 390.0 L611.4 404.8 L626.2 420.8 L638.5 429.4 L633.6 436.8 L631.1 449.1 L629.9 471.3 L629.9 498.4 L633.6 520.5 L643.4 537.8 L648.4 557.5 L652.0 577.2 L655.7 590.0 L663.1 612.0 M626.2 420.8 L638.5 426.9 L645.9 436.8 L648.4 442.9 L663.1 451.6 L682.8 460.2 L707.5 466.3 L732.1 468.8 L756.7 472.5 L776.4 479.9 L796.1 486.0 L806.0 493.4 M626.2 422.0 L633.6 434.3 M552.3 390.0 L549.9 399.9 L540.0 410.9 M5.9 661.3 L24.6 656.3 L49.3 648.9 L71.4 644.0 L91.1 642.8 L110.8 640.3 L128.1 640.3 L147.8 641.6 L167.5 648.9 L184.7 655.1 L197.0 655.1 L209.3 650.2 L221.6 647.7 L242.6 644.0 L256.1 642.8 L270.0 644.0 M71.4 644.0 L86.2 648.9 L98.5 663.7 L110.8 671.1 L133.0 674.8 L147.8 681.0 L160.1 684.6 L172.4 673.6 L187.2 655.1 M125.6 612.0 L126.8 626.8 L128.1 640.3 L133.0 656.3 L134.2 671.1 M201.9 612.0 L197.0 626.8 L189.6 639.1 L185.9 655.1 M7.4 616.9 L13.5 631.7 L12.3 646.5 L16.0 660.0 M129.7 578.7 L127.9 614.0 L129.7 632.1 M212.6 578.7 L207.2 599.6 L194.6 624.9 L187.3 646.5 M7.2 614.0 L14.4 635.7 L12.6 650.1 M270.0 644.0 L284.8 641.1 L297.1 635.4 L306.9 626.8 L313.1 622.3 L331.6 625.5 L351.3 630.5 L368.5 636.6 L383.3 635.4 L393.1 626.8 L407.9 620.6 L427.6 618.2 L442.4 616.4 L457.2 620.6 L476.9 615.7 L491.6 615.0 L516.3 615.7 L531.0 621.9 L540.0 626.3 M306.9 626.8 L305.7 612.0 M344.0 590.0 L334.0 596.6 L319.0 599.0 L309.4 605.0 L307.0 614.0 L313.0 621.0 M540.0 626.3 L554.8 630.5 L569.6 636.6 L589.3 640.3 L613.9 639.6 L638.5 644.0 L658.2 647.7 L677.9 652.6 L687.8 652.6 L707.5 660.0 L727.2 661.3 L741.9 661.3 L756.7 657.6 L776.4 655.8 L786.3 655.1 M663.1 612.0 L673.0 626.8 L687.8 639.1 L697.6 651.4 L707.5 661.3 L714.8 676.0 L722.2 698.2 L734.5 717.9 L744.4 737.6 L748.1 754.8 L751.8 777.0 L754.2 791.8 M803.6 540.0 L802.8 557.2 L797.6 571.0 L789.0 586.6 L784.7 596.9 L785.5 615.9 L788.1 629.7 L789.0 640.0 L785.5 653.8 L786.4 667.6 L794.1 676.2 L793.6 668.6 L801.0 681.0 L804.7 695.7 M806.0 536.5 L802.3 550.1 L801.0 567.3 L796.1 582.1 L791.2 590.0 M791.0 656.0 L789.9 661.3 L786.9 664.6 L783.1 664.6 L780.1 661.3 L779.0 656.0 L780.1 650.7 L783.1 647.4 L786.9 647.4 L789.9 650.7 L791.0 656.0 M437.5 131.8 L436.3 140.1 L432.7 147.8 L427.0 154.4 L419.7 159.5 L411.0 162.7 L401.8 163.8 L392.6 162.7 L384.0 159.5 L376.6 154.4 L370.9 147.8 L367.3 140.1 L366.1 131.8 L367.3 123.5 L370.9 115.8 L376.6 109.2 L383.9 104.1 L392.6 100.9 L401.8 99.8 L411.0 100.9 L419.7 104.1 L427.0 109.2 L432.7 115.8 L436.3 123.5 L437.5 131.8" stroke="#806e10"/>
<path d="M204.8 676.0 L211.5 671.8 L227.3 670.8 L228.4 688.0 L225.9 700.3 L221.2 708.2 L213.3 717.9 L208.0 728.4 L202.7 735.4 L197.5 732.8 L187.8 731.1 L193.9 725.8 L187.8 718.8 L202.7 700.3 L204.8 686.2Z" fill="#5d504c" stroke="none"/>
<path d="M206.2 707.0 L207.2 708.0 L209.2 706.0 M215.9 673.5 L216.9 674.5 L218.9 675.5 M214.2 711.1 L213.2 709.1 L212.2 707.1 L211.2 708.1 M205.7 725.3 L204.7 726.3 L205.7 725.3 L204.7 726.3 M204.3 706.4 L206.3 705.4 M218.9 696.7 L219.9 694.7 L218.9 695.7 M224.7 701.2 L225.7 700.2 L224.7 701.2 L226.7 699.2 M219.4 688.2 L220.4 687.2 M225.3 679.5 L224.3 677.5 L223.3 676.5 L224.3 674.5 M215.5 683.0 L214.5 684.0 L213.5 683.0 L215.5 682.0 M200.1 728.0 L199.1 727.0 M211.2 673.5 L210.2 672.5 M198.3 720.7 L199.3 719.7 L198.3 717.7 M197.7 709.7 L199.7 708.7 L198.7 709.7 M207.4 707.9 L206.4 708.9 L205.4 707.9 M195.8 732.2 L197.8 730.2 L198.8 728.2 M226.9 686.2 L227.9 685.2 L228.9 686.2 L229.9 685.2 M227.5 678.9 L229.5 679.9 L231.5 680.9 M199.2 705.1 L198.2 704.1 M201.2 718.2 L203.2 716.2 L205.2 714.2 L204.2 713.2 M226.9 672.1 L225.9 671.1 L224.9 672.1 L225.9 671.1 M206.2 694.6 L208.2 695.6 M224.9 693.5 L225.9 691.5 L226.9 689.5 L227.9 690.5 M204.7 692.1 L206.7 693.1 L207.7 692.1 L208.7 693.1 M191.2 719.3 L192.2 720.3 M226.7 678.1 L228.7 677.1 L229.7 675.1 L230.7 674.1 M208.8 719.5 L210.8 718.5 L211.8 716.5 M201.1 713.8 L203.1 712.8 M196.7 730.3 L195.7 728.3 M207.9 724.9 L209.9 722.9 M226.4 688.7 L225.4 687.7 M221.5 695.5 L222.5 696.5 L223.5 697.5 L225.5 696.5 M200.8 724.4 L202.8 722.4 L204.8 723.4 M214.1 707.3 L213.1 706.3 L214.1 704.3 L213.1 703.3 M205.9 711.5 L207.9 710.5 L206.9 711.5 L205.9 709.5 M221.2 687.3 L220.2 686.3 L222.2 687.3 L221.2 685.3 M197.0 721.1 L199.0 722.1 L201.0 723.1 L200.0 722.1 M224.0 695.9 L225.0 693.9 L227.0 691.9 M203.1 707.6 L204.1 706.6 L205.1 707.6 L204.1 705.6 M196.4 729.0 L197.4 730.0 M198.4 717.2 L199.4 718.2 M210.1 720.5 L209.1 718.5 L208.1 717.5 M220.3 682.0 L222.3 680.0 L223.3 678.0 M208.8 714.6 L209.8 715.6 L211.8 713.6 M218.6 699.2 L219.6 700.2 L221.6 701.2 L220.6 702.2 M198.2 714.2 L197.2 713.2 L196.2 714.2 L198.2 713.2 M211.0 683.8 L210.0 684.8 L209.0 685.8 L210.0 683.8 M209.6 673.6 L211.6 674.6 L210.6 673.6 M225.6 700.5 L226.6 698.5 L227.6 697.5 M207.1 691.3 L208.1 692.3 M217.2 686.6 L216.2 685.6 L218.2 686.6 M209.3 699.0 L211.3 698.0 L213.3 699.0 M213.4 712.1 L212.4 713.1 L214.4 714.1 L213.4 712.1 M195.7 721.1 L194.7 719.1 M223.9 679.3 L224.9 678.3 M204.9 721.9 L203.9 720.9 M202.3 723.9 L201.3 724.9 L203.3 725.9 M218.6 703.3 L217.6 701.3 L218.6 699.3 L217.6 697.3 M218.7 710.4 L219.7 708.4 L218.7 706.4 L217.7 704.4 M199.3 714.3 L198.3 712.3 L200.3 711.3 L199.3 709.3 M208.7 698.6 L209.7 696.6 L211.7 697.6 L210.7 695.6 M217.8 697.0 L219.8 695.0 M191.6 722.0 L190.6 723.0 L192.6 722.0 M210.9 683.1 L211.9 682.1 L212.9 680.1 L214.9 681.1 M204.3 728.8 L206.3 727.8 L207.3 725.8 L208.3 723.8 M217.1 675.3 L218.1 674.3 L217.1 672.3 M224.4 674.0 L226.4 673.0 L227.4 671.0 M214.6 707.6 L213.6 706.6 L215.6 705.6 L217.6 703.6 M212.8 718.6 L213.8 717.6 L215.8 715.6 M209.7 697.7 L211.7 695.7 L213.7 694.7 L215.7 692.7 M210.1 714.0 L211.1 712.0 M203.5 733.5 L205.5 734.5 L207.5 732.5 M205.2 702.8 L207.2 701.8 L209.2 700.8 M214.4 707.0 L216.4 708.0 L218.4 707.0 M211.6 711.7 L213.6 710.7 L212.6 709.7 M218.2 674.0 L219.2 672.0 L218.2 671.0 L220.2 670.0 M198.0 719.6 L200.0 717.6 M206.3 683.9 L207.3 684.9 M212.2 712.1 L213.2 711.1 L215.2 712.1 L214.2 711.1 M217.6 686.2 L219.6 685.2 M215.6 707.3 L214.6 708.3 L215.6 706.3 L214.6 704.3 M208.2 713.0 L210.2 711.0 M199.1 719.7 L198.1 720.7 L197.1 721.7 L198.1 720.7 M207.2 684.4 L208.2 685.4 L207.2 683.4 M220.4 699.7 L219.4 698.7 L220.4 699.7 L221.4 698.7 M220.7 694.6 L222.7 693.6 L223.7 694.6 L225.7 692.6 M205.1 694.7 L206.1 693.7 M210.7 702.1 L211.7 701.1 L210.7 699.1 L211.7 697.1 M216.0 702.8 L217.0 701.8 L216.0 699.8 L217.0 700.8 M217.3 694.5 L218.3 695.5 M205.7 709.2 L206.7 708.2 L208.7 707.2 L209.7 706.2 M217.4 704.2 L218.4 703.2 M217.8 694.6 L219.8 692.6 L221.8 693.6 M206.2 726.1 L205.2 727.1 M222.0 698.1 L224.0 697.1 L226.0 695.1 L227.0 693.1 M214.3 677.1 L215.3 675.1 L217.3 673.1 L218.3 674.1 M202.0 723.0 L204.0 721.0 L205.0 720.0 M209.6 717.4 L211.6 715.4 L212.6 716.4 L213.6 714.4 M213.8 704.7 L212.8 702.7 L213.8 701.7 L212.8 699.7 M199.6 733.5 L200.6 732.5 M217.5 690.4 L216.5 688.4 M218.4 671.9 L217.4 670.9 L216.4 668.9 M197.3 717.2 L199.3 715.2 L200.3 713.2 L201.3 712.2 M194.8 719.8 L196.8 720.8 L198.8 719.8 M222.4 702.1 L223.4 703.1 L225.4 701.1 M207.4 685.1 L206.4 683.1 M220.3 695.7 L222.3 694.7 L221.3 695.7 L220.3 693.7 M206.1 686.7 L208.1 684.7 L209.1 682.7 M219.1 680.1 L218.1 681.1 L220.1 682.1 L221.1 683.1 M209.5 680.5 L208.5 678.5 M221.2 676.1 L223.2 677.1 L225.2 675.1 M191.1 719.2 L193.1 718.2 L192.1 716.2 L193.1 714.2 M225.0 676.7 L224.0 674.7 L226.0 673.7 M209.1 681.0 L210.1 680.0 L211.1 678.0 M214.9 675.1 L216.9 673.1 M216.6 686.1 L215.6 685.1 L214.6 686.1 L213.6 687.1 M194.0 711.4 L196.0 710.4 L197.0 709.4 L199.0 710.4 M206.9 712.2 L207.9 710.2 L206.9 708.2 M213.0 679.3 L215.0 677.3 L214.0 675.3 L215.0 673.3 M225.2 698.4 L224.2 699.4 L223.2 697.4 L225.2 696.4 M213.1 717.8 L215.1 716.8 L214.1 717.8 L216.1 718.8 M201.7 712.9 L203.7 711.9 M216.7 687.2 L217.7 688.2 L216.7 687.2 L218.7 688.2 M208.6 707.9 L210.6 708.9 M210.8 672.5 L209.8 670.5 L208.8 668.5 L209.8 669.5 M204.7 692.3 L205.7 691.3 M206.6 678.8 L205.6 676.8 L207.6 677.8 L209.6 678.8 M190.4 730.0 L192.4 729.0 M212.2 678.7 L213.2 679.7 M224.2 686.4 L225.2 684.4 L224.2 685.4 L226.2 683.4 M206.2 696.9 L205.2 695.9 L207.2 696.9 L208.2 697.9 M206.8 680.0 L205.8 681.0 L206.8 679.0 M197.7 731.0 L199.7 729.0" stroke="#024467"/>
<path d="M5.9 706.8 L8.2 704.4 L11.8 703.1 L14.8 701.9 L17.3 700.6 L19.7 698.2 L23.3 698.0 L27.1 699.4 L29.4 702.1 L30.8 705.6 L33.6 706.3 L36.9 706.8 L41.0 706.1 L45.6 704.3 L45.7 707.5 L46.8 710.5 L45.6 715.4 L48.3 715.8 L51.7 716.7 L50.6 720.3 L50.5 724.0 L54.8 725.1 L59.1 725.3 L62.3 726.3 L65.3 727.7 L68.6 729.2 L71.4 730.2 L73.9 735.1 L76.6 736.3 L78.8 738.8 L82.5 742.5 L77.7 741.8 L73.9 740.1 L70.6 741.7 L67.7 743.8 L71.4 747.4 L75.6 748.3 L78.8 749.9 L82.2 749.5 L86.2 748.7 L84.3 745.8 L83.7 742.5 L88.7 741.3 L92.5 743.2 L96.0 745.0 L97.3 749.9 L100.6 750.0 L104.7 751.1 L105.9 756.1 L110.0 755.5 L113.3 756.1 L114.3 752.9 L115.7 749.9 L118.9 750.0 L121.9 748.7 L123.4 744.8 L125.6 741.3 L130.5 742.5 L133.0 747.4 L135.8 746.7 L139.1 746.2 L142.8 749.9 L147.8 751.1 L151.0 749.7 L155.1 749.9 L157.1 753.3 L160.1 756.1 L162.8 753.8 L165.5 752.0 L167.5 749.9 L164.6 748.1 L162.5 745.0 L161.2 741.3 L160.1 737.6 L158.1 734.1 L157.6 730.2 L154.5 728.2 L150.2 727.7 L149.0 722.8 L152.3 721.6 L155.1 721.6 L154.3 717.3 L153.9 713.0 L151.8 712.6 L154.1 716.0 L157.0 718.8 L156.1 721.8 L156.2 724.9 L160.8 725.9 L164.1 728.4 L166.1 731.1 L169.3 732.8 L172.5 734.3 L175.4 733.9 L178.1 735.4 L180.6 739.2 L183.4 742.5 L186.4 743.3 L189.7 743.8 L192.2 745.1 L195.1 746.4 L197.0 749.0 L200.7 750.1 L202.7 752.1 L205.7 753.8 L208.7 755.1 L211.5 757.4 L213.8 759.3 L216.8 760.9 L219.9 760.2 L223.2 760.4 L225.4 761.6 L229.0 760.5 L231.5 760.4 L234.9 761.7 L237.9 760.9 L235.8 758.3 L232.6 756.5 L230.2 754.3 L229.1 751.3 L228.4 747.8 L227.3 744.2 L223.2 744.3 L220.3 746.0 L218.6 743.1 L216.8 739.8 L212.2 739.5 L208.0 738.1 L204.2 738.0 L201.0 737.2 L199.2 731.9 L194.7 732.2 L190.4 733.7 L186.0 730.2 L189.7 729.9 L192.2 728.4 L194.2 726.1 L195.7 723.1 L191.9 722.5 L188.3 721.6 L185.1 719.6 L182.5 716.1 L187.8 714.4 L191.3 710.8 L187.8 709.1 L191.1 707.0 L192.2 703.8 L193.9 701.2 L197.1 699.7 L201.0 699.4 L200.1 696.8 L204.5 695.0 L206.2 689.8 L202.7 688.0 L204.5 684.5 L203.6 681.8 L198.3 683.6 L198.5 686.8 L196.6 689.8 L193.9 694.1 L191.0 694.0 L187.8 694.1 L185.1 690.6 L182.1 688.7 L179.0 688.0 L176.4 682.7 L179.9 680.1 L185.1 681.0 L187.9 678.1 L189.6 674.8 L192.2 672.2 L194.8 669.8 L197.5 667.8 L202.0 667.0 L206.2 666.9 L208.8 664.2 L210.6 661.6 L212.0 658.5 L215.0 656.4 L212.4 652.8 L215.9 650.2 L220.3 652.0 L220.3 655.5 L223.3 653.7 L226.4 653.5 L229.1 652.0 L231.7 651.1 L235.0 650.2 L237.9 648.5 L240.5 645.8 L244.0 645.2 L248.2 645.1 L251.9 645.8 L255.4 650.2 L258.6 651.9 L262.5 652.8 L267.8 651.1 L273.0 652.8 L276.8 654.0 L280.1 653.7 L285.3 651.1 L287.3 649.0 L290.6 647.6 L295.9 650.2 L301.1 652.0 L305.5 652.8 L306.4 649.4 L307.3 645.8 L307.8 641.3 L309.1 637.0 L310.3 633.5 L310.8 630.0 L310.9 625.5 L313.1 621.9 L316.7 623.4 L319.3 625.5 L319.8 629.4 L321.2 632.8 L321.7 636.6 L322.5 639.8 L323.8 642.7 L325.5 645.7 L325.4 648.9 L326.8 652.5 L329.1 655.1 L334.0 657.6 L334.5 660.0 L338.0 659.3 L341.2 659.7 L343.9 658.8 L343.9 653.9 L347.1 655.0 L351.3 655.1 L353.9 653.8 L356.2 651.4 L358.4 647.7 L361.1 644.0 L363.1 648.9 L361.3 652.5 L358.7 655.1 L362.6 654.5 L365.2 652.3 L368.5 651.4 L372.7 649.7 L375.9 646.5 L376.9 642.6 L378.4 639.1 L377.7 635.7 L375.9 632.9 L378.6 634.7 L380.8 636.6 L385.7 636.6 L386.3 633.6 L387.0 630.5 L388.8 634.7 L389.4 639.1 L392.0 641.4 L395.2 642.7 L398.1 644.0 L394.5 645.5 L391.2 646.2 L388.2 647.7 L384.9 648.2 L381.6 650.2 L378.4 650.9 L381.8 650.2 L385.6 649.3 L389.7 650.2 L393.1 648.9 L396.7 648.9 L400.1 648.5 L404.1 647.8 L407.9 648.0 L411.2 647.7 L414.2 646.9 L417.8 646.5 L417.8 642.8 L420.7 643.3 L424.3 642.0 L427.6 642.8 L428.8 637.9 L432.5 641.6 L436.0 641.6 L438.8 640.2 L442.4 640.3 L445.7 640.3 L448.5 641.8 L452.2 641.6 L454.7 646.5 L451.3 647.9 L447.3 648.2 L443.8 649.3 L439.9 649.4 L442.4 651.4 L444.8 652.8 L448.0 653.2 L451.0 655.1 L454.2 654.6 L457.2 656.3 L460.4 657.4 L463.4 658.9 L466.4 659.9 L468.8 661.5 L471.9 662.0 L474.9 661.3 L474.4 657.6 L478.5 657.0 L481.8 656.3 L484.6 655.7 L488.0 654.6 L491.1 654.9 L494.1 653.9 L497.8 652.6 L497.8 656.3 L494.9 657.9 L492.2 659.1 L489.2 660.0 L487.2 662.8 L484.2 664.9 L486.1 667.7 L486.7 671.1 L489.8 671.8 L493.7 672.6 L496.6 673.6 L500.5 675.1 L503.7 676.5 L507.6 677.3 L506.4 682.2 L503.7 681.4 L500.3 681.4 L503.9 685.9 L504.8 689.1 L506.4 692.0 L507.9 694.7 L508.6 697.7 L510.1 700.7 L511.0 703.7 L513.1 706.2 L513.8 709.3 L518.7 710.5 L522.3 709.7 L526.1 710.5 L529.1 708.8 L532.0 708.0 L535.0 707.0 L538.4 706.8 L542.2 704.7 L545.8 703.1 L550.0 700.7 L546.2 701.8 L543.2 704.6 L540.0 705.6 L544.0 704.5 L547.4 701.9 L544.9 706.8 L548.6 705.0 L551.7 703.4 L554.8 700.7 L557.2 698.6 L561.1 697.8 L564.0 695.6 L567.1 694.5 L570.0 692.7 L573.1 692.4 L577.0 691.3 L579.4 689.6 L582.5 689.4 L585.6 690.8 L585.6 685.9 L582.7 686.1 L579.4 685.9 L581.8 683.6 L583.2 680.5 L585.6 678.5 L589.0 676.8 L592.9 674.8 L595.9 675.3 L599.1 674.8 L602.2 674.3 L605.5 673.9 L608.0 674.5 L611.4 673.6 L614.0 675.8 L616.0 678.0 L618.8 679.7 L621.5 682.1 L625.2 683.5 L628.7 684.6 L631.8 686.6 L635.0 688.4 L637.3 690.8 L639.9 693.3 L640.9 696.3 L642.2 699.4 L643.8 703.0 L645.9 706.8 L649.2 707.9 L652.1 710.6 L655.7 711.7 L655.8 714.9 L657.0 717.9 L655.7 722.8 L659.0 726.1 L660.7 730.2 L664.3 733.1 L668.1 735.1 L670.4 738.0 L672.5 740.5 L674.2 743.8 L677.0 745.3 L679.1 747.4 L680.2 751.2 L681.6 754.8 L682.7 758.5 L682.8 762.2 L685.3 757.3 L688.6 756.0 L692.7 756.1 L696.6 757.4 L700.1 758.5 L702.4 762.0 L703.8 765.9 L702.5 770.8 L705.4 773.9 L708.7 777.0 L710.7 779.1 L712.4 781.9 L710.6 785.0 L707.5 786.8 L709.9 791.8 L710.6 795.5 L712.1 799.0 L712.1 802.9 L712.4 806.5" stroke="#000"/>
<path d="M311.9 663.7 L331.6 662.0 L343.9 660.0 L356.2 657.6 L380.8 651.4 L407.9 648.4 L430.1 649.4 L447.3 653.4 L467.0 660.8 L479.3 668.1 L491.6 676.0 L503.9 687.1 L510.1 693.3 L515.0 700.7 L515.0 709.3 L512.6 712.5 L509.4 708.0 L506.9 698.2 L506.9 692.0 M512.6 712.5 L518.7 711.0 L528.6 713.5 L534.7 719.6 L543.4 715.9 L550.0 710.5 M540.0 717.9 L554.8 710.5 L569.6 698.2 L576.9 693.3 M257.2 661.6 L262.5 660.8 L273.0 663.4 L285.3 665.1 M311.7 663.0 L322.2 662.5 L334.5 660.9 M270.0 662.5 L284.8 664.9 M302.0 660.0 L306.9 662.5 M249.3 678.3 L253.7 684.5 L253.7 695.0 L250.2 703.8 L244.9 710.8 M242.3 714.4 L239.6 717.0 M237.0 721.4 L234.4 724.4 M228.2 729.3 L223.8 731.9 M14.8 720.4 L27.1 719.1 L39.4 720.4 L36.9 726.5 L27.1 729.0 L17.2 725.3 L14.8 720.4" stroke="#000"/>
<path d="M212.6 675.1 L210.6 676.1 L211.6 674.1 L212.6 673.1 L210.6 671.1 M220.4 678.5 L221.4 676.5 L222.4 678.5 M201.2 733.9 L202.2 732.9 L203.2 731.9 M197.2 723.5 L195.2 725.5 L196.2 724.5 M200.1 706.0 L201.1 704.0 L202.1 703.0 M205.6 705.0 L207.6 707.0 L209.6 708.0 L210.6 707.0 M206.9 727.3 L208.9 728.3 L209.9 726.3 L207.9 728.3 L209.9 727.3 M217.3 680.3 L219.3 678.3 L217.3 680.3 L218.3 681.3 M205.7 722.2 L203.7 723.2 L205.7 721.2 M186.1 716.0 L187.1 715.0 L188.1 714.0 L189.1 712.0 L191.1 713.0 M200.9 727.1 L199.9 726.1 L201.9 728.1 M202.7 706.2 L204.7 707.2 L206.7 706.2 L205.7 704.2 L204.7 703.2 M205.1 708.7 L206.1 706.7 L205.1 705.7 L206.1 706.7 M210.7 691.1 L211.7 693.1 L209.7 692.1 M210.9 680.1 L211.9 682.1 L212.9 681.1 L210.9 679.1 M204.3 701.9 L203.3 699.9 L204.3 700.9 M204.8 715.4 L202.8 714.4 L203.8 715.4 L202.8 717.4 L200.8 719.4 M196.8 712.2 L197.8 714.2 L198.8 713.2 M207.7 703.1 L206.7 705.1 L205.7 704.1 L207.7 703.1 L206.7 705.1 M205.5 718.0 L206.5 717.0 L207.5 716.0 M203.4 731.4 L204.4 729.4 L203.4 727.4 L202.4 726.4 M221.1 701.6 L222.1 699.6 L220.1 698.6 L219.1 697.6 L218.1 696.6 M218.8 692.0 L220.8 691.0 L222.8 689.0 L221.8 688.0 L220.8 686.0 M219.5 679.9 L221.5 680.9 L220.5 682.9 L221.5 681.9 L219.5 679.9 M188.0 719.2 L190.0 718.2 L189.0 716.2 M194.2 708.6 L195.2 707.6 L194.2 705.6 L195.2 704.6 M206.6 724.2 L205.6 726.2 L204.6 728.2 L205.6 726.2 L207.6 725.2 M210.7 720.9 L209.7 719.9 L211.7 721.9 M215.9 706.6 L216.9 708.6 L217.9 707.6 L215.9 709.6 M223.5 674.5 L224.5 676.5 L225.5 678.5 L224.5 679.5 M203.7 705.1 L204.7 704.1 L205.7 705.1 L206.7 704.1 M221.0 679.3 L223.0 678.3 L224.0 676.3 M213.5 698.3 L214.5 696.3 L213.5 697.3 M226.8 684.7 L228.8 683.7 L227.8 682.7 M206.5 692.5 L207.5 693.5 L205.5 694.5 M198.2 711.0 L196.2 709.0 L195.2 707.0 L193.2 708.0 L194.2 706.0 M224.0 682.2 L226.0 683.2 L228.0 682.2 M207.4 703.9 L208.4 701.9 L209.4 699.9 L208.4 698.9 M223.5 687.9 L221.5 688.9 L219.5 690.9 M221.8 674.8 L223.8 672.8 L224.8 674.8 M202.1 729.9 L201.1 727.9 L202.1 726.9 L200.1 725.9 L201.1 723.9 M211.6 705.0 L212.6 704.0 L213.6 703.0 M195.5 722.7 L193.5 720.7 L191.5 722.7 L192.5 721.7 M206.4 686.4 L204.4 685.4 L206.4 687.4 L208.4 689.4 M222.8 698.4 L220.8 697.4 L221.8 698.4 M210.2 715.5 L212.2 714.5 L211.2 715.5 M207.9 686.3 L206.9 687.3 L205.9 685.3 L206.9 684.3 M212.8 686.6 L210.8 687.6 L208.8 686.6 M193.8 708.5 L192.8 710.5 L194.8 711.5 L196.8 710.5 L197.8 712.5 M212.2 673.3 L213.2 672.3 L214.2 671.3 L215.2 673.3 L216.2 671.3 M220.4 708.4 L219.4 706.4 L217.4 704.4 L216.4 705.4 L214.4 704.4 M220.8 706.7 L218.8 708.7 L217.8 707.7 L218.8 705.7 L220.8 703.7 M216.9 703.1 L214.9 705.1 L212.9 704.1 L213.9 702.1 L214.9 701.1 M216.1 683.8 L218.1 682.8 L220.1 680.8 L222.1 681.8 L220.1 683.8 M211.8 683.3 L210.8 684.3 L211.8 685.3 L212.8 687.3 L211.8 685.3 M205.0 702.0 L203.0 701.0 L205.0 702.0 L206.0 703.0 L208.0 702.0 M204.3 678.1 L203.3 679.1 L201.3 678.1 L199.3 679.1 L201.3 677.1 M226.1 679.0 L227.1 680.0 L225.1 681.0 L224.1 680.0 L226.1 679.0 M205.4 699.7 L204.4 698.7 L205.4 697.7 L206.4 695.7 M209.8 693.9 L210.8 691.9 L211.8 689.9 L209.8 690.9 M211.8 680.1 L213.8 682.1 L214.8 681.1 L215.8 680.1 M215.6 673.6 L217.6 672.6 L218.6 671.6 L219.6 670.6 L217.6 672.6 M195.1 713.1 L197.1 715.1 L199.1 713.1 L198.1 712.1 M219.8 706.2 L220.8 705.2 L222.8 704.2 L223.8 703.2 M208.3 691.2 L209.3 693.2 L208.3 691.2 L210.3 690.2 M201.9 704.5 L202.9 705.5 L200.9 704.5 L201.9 706.5 M226.8 678.6 L227.8 677.6 L225.8 678.6 L224.8 677.6 L226.8 676.6 M204.4 699.6 L203.4 698.6 L202.4 700.6 M226.9 677.5 L228.9 675.5 L229.9 673.5 L227.9 672.5 L226.9 674.5 M194.7 711.8 L192.7 709.8 L190.7 710.8 L191.7 712.8 L190.7 711.8 M195.1 721.8 L193.1 723.8 L194.1 722.8 M221.0 686.2 L220.0 688.2 L219.0 686.2 L221.0 687.2 L219.0 685.2 M212.4 675.7 L214.4 676.7 L213.4 675.7 M202.2 714.8 L200.2 715.8 L201.2 713.8 M197.4 723.7 L199.4 722.7 L200.4 723.7 M205.1 729.6 L206.1 728.6 L208.1 726.6 M225.1 691.8 L226.1 690.8 L224.1 691.8 M213.2 695.0 L214.2 694.0 L213.2 692.0 L211.2 690.0 M226.2 678.5 L228.2 679.5 L229.2 678.5 M187.3 716.3 L188.3 718.3 L190.3 717.3 M197.9 718.4 L195.9 717.4 L194.9 716.4 L192.9 715.4 M224.6 687.1 L222.6 689.1 L223.6 690.1 L224.6 691.1 L225.6 689.1 M195.1 717.0 L196.1 718.0 L194.1 720.0 L192.1 718.0 M220.4 677.4 L222.4 676.4 L223.4 675.4 L225.4 674.4 L227.4 673.4 M197.0 715.4 L198.0 714.4 L199.0 715.4 M204.0 721.4 L202.0 723.4 L201.0 722.4 L200.0 721.4 L202.0 719.4 M212.5 701.7 L213.5 700.7 L215.5 698.7 L213.5 699.7 L214.5 697.7 M204.0 728.4 L205.0 726.4 L206.0 727.4 M224.1 682.7 L226.1 683.7 L225.1 685.7 M207.0 712.7 L209.0 710.7 L207.0 708.7 M204.7 723.7 L205.7 721.7 L206.7 720.7 L204.7 718.7 M200.1 726.7 L201.1 727.7 L199.1 725.7 L200.1 727.7 M211.2 675.5 L213.2 677.5 L215.2 675.5 M201.7 722.2 L202.7 721.2 L203.7 719.2 L202.7 718.2 L203.7 717.2 M212.3 695.8 L211.3 693.8 L213.3 692.8 L215.3 690.8 M220.2 696.8 L222.2 695.8 L221.2 693.8 L219.2 695.8 M189.8 722.9 L187.8 724.9 L188.8 725.9 L189.8 724.9 M205.0 673.9 L207.0 671.9 L208.0 670.9 L207.0 672.9 L209.0 674.9 M201.3 704.1 L202.3 702.1 L201.3 701.1 L200.3 699.1 M213.5 713.9 L211.5 712.9 L212.5 711.9 L213.5 712.9 M212.5 690.5 L214.5 689.5 L215.5 688.5 M206.0 682.0 L207.0 681.0 L209.0 680.0 M203.4 710.6 L202.4 709.6 L204.4 707.6 L202.4 706.6 M219.3 703.2 L217.3 701.2 L216.3 699.2 L217.3 701.2 L215.3 699.2 M212.6 721.4 L210.6 723.4 L208.6 722.4 M196.3 723.2 L195.3 721.2 L196.3 723.2 M217.3 680.7 L218.3 679.7 L217.3 680.7 L218.3 679.7 L217.3 681.7 M223.5 681.4 L221.5 683.4 L219.5 684.4 L221.5 686.4 M206.8 715.2 L207.8 717.2 L209.8 718.2 M209.3 693.8 L211.3 692.8 L210.3 694.8 M216.7 673.6 L217.7 674.6 L218.7 675.6 L216.7 673.6 L215.7 672.6 M196.4 711.1 L197.4 712.1 L195.4 711.1 L197.4 710.1 M210.8 673.4 L208.8 675.4 L209.8 676.4 M209.8 683.7 L211.8 682.7 L210.8 680.7 L209.8 679.7 L211.8 677.7 M213.2 688.0 L211.2 686.0 L212.2 687.0 L213.2 689.0 M203.3 731.4 L205.3 730.4 L204.3 728.4 L202.3 726.4 L203.3 724.4 M225.6 679.7 L226.6 681.7 L227.6 680.7 M219.8 681.8 L217.8 682.8 L215.8 681.8 L216.8 679.8 M224.3 675.7 L226.3 674.7 L225.3 672.7 L226.3 671.7 L224.3 669.7 M198.4 719.2 L199.4 717.2 L200.4 719.2 L202.4 721.2 L203.4 722.2 M194.0 718.8 L195.0 717.8 L197.0 718.8 M210.3 695.1 L211.3 694.1 L213.3 696.1 L211.3 694.1 L213.3 693.1 M209.0 690.4 L211.0 692.4 L212.0 690.4 M208.7 681.6 L206.7 679.6 L204.7 681.6 M225.0 692.8 L223.0 690.8 L221.0 689.8 M214.4 711.6 L212.4 709.6 L210.4 711.6 L211.4 710.6 L212.4 708.6 M215.3 695.4 L214.3 694.4 L212.3 692.4 M219.8 711.7 L220.8 710.7 L218.8 709.7 L216.8 708.7 L217.8 709.7 M199.1 730.9 L200.1 731.9 L201.1 733.9 M204.7 689.1 L202.7 688.1 L200.7 687.1 L201.7 685.1 L202.7 684.1 M215.0 705.4 L213.0 707.4 L214.0 706.4 M202.9 704.5 L200.9 702.5 L201.9 701.5 L199.9 700.5 M209.3 680.8 L208.3 679.8 L207.3 677.8 M208.5 677.2 L209.5 675.2 L211.5 674.2 L209.5 673.2 M223.2 672.1 L224.2 673.1 L226.2 675.1 M205.9 695.1 L204.9 694.1 L203.9 696.1 L204.9 698.1 L202.9 699.1 M209.5 704.3 L210.5 705.3 L209.5 704.3 L211.5 705.3 M209.3 678.6 L208.3 680.6 L207.3 681.6 L208.3 683.6 M206.8 680.9 L205.8 681.9 L203.8 680.9 L201.8 679.9 M212.0 677.4 L214.0 676.4 L212.0 674.4 M201.3 721.9 L200.3 723.9 L201.3 722.9 L199.3 721.9 L200.3 723.9 M194.2 725.9 L195.2 727.9 L197.2 726.9 L198.2 725.9 L197.2 723.9 M203.7 690.8 L201.7 689.8 L200.7 688.8 L199.7 689.8 L201.7 688.8 M203.8 710.8 L204.8 709.8 L205.8 707.8 L207.8 706.8 M224.1 677.3 L225.1 676.3 L224.1 675.3 L225.1 676.3 M207.6 717.1 L205.6 718.1 L206.6 719.1 L208.6 718.1 L207.6 717.1 M201.0 720.0 L202.0 721.0 L200.0 722.0 M202.2 715.8 L203.2 716.8 L201.2 715.8 L202.2 714.8 M193.2 722.5 L195.2 721.5 L194.2 720.5 L192.2 719.5 M204.4 707.0 L203.4 708.0 L205.4 707.0 M212.5 721.1 L213.5 720.1 L214.5 719.1 L215.5 718.1 M213.8 701.7 L214.8 702.7 L213.8 703.7 L214.8 702.7 L216.8 701.7 M211.3 676.0 L210.3 677.0 L212.3 675.0 L210.3 677.0 M212.8 686.7 L213.8 685.7 L212.8 684.7 M218.2 692.9 L217.2 691.9 L218.2 690.9 M210.7 715.2 L211.7 716.2 L210.7 715.2 M214.4 704.9 L216.4 702.9 L217.4 700.9 L218.4 699.9 L217.4 698.9 M204.6 706.7 L206.6 705.7 L208.6 704.7 L210.6 703.7 M207.6 726.5 L206.6 727.5 L208.6 729.5 M205.7 689.7 L206.7 688.7 L208.7 686.7 L207.7 687.7 M210.7 714.8 L208.7 716.8 L210.7 715.8 L209.7 713.8 M212.9 692.6 L213.9 691.6 L214.9 690.6 L215.9 689.6 L216.9 691.6 M222.5 692.8 L224.5 690.8 L225.5 689.8 M209.7 711.7 L211.7 713.7 L213.7 715.7 M209.1 696.3 L207.1 694.3 L206.1 693.3 M210.7 713.2 L211.7 715.2 L213.7 717.2 L212.7 719.2 L210.7 718.2 M211.4 681.7 L210.4 679.7 L212.4 677.7 L210.4 678.7 L209.4 679.7 M208.6 687.2 L207.6 686.2 L205.6 687.2 L203.6 686.2 M208.8 708.0 L210.8 710.0 L211.8 708.0 M202.3 715.7 L204.3 713.7 L202.3 712.7 L203.3 714.7 M190.4 720.5 L188.4 718.5 L190.4 717.5 L189.4 715.5 L191.4 713.5 M204.6 688.3 L203.6 687.3 L202.6 685.3 L203.6 684.3 L201.6 685.3 M211.6 716.5 L212.6 714.5 L210.6 712.5 L208.6 710.5 M211.1 695.7 L212.1 694.7 L214.1 696.7 L212.1 697.7 M199.9 707.8 L201.9 706.8 L200.9 704.8 L201.9 703.8 M211.6 697.6 L213.6 698.6 L214.6 699.6 L215.6 700.6 M198.3 709.8 L197.3 711.8 L198.3 713.8 M202.6 728.2 L204.6 727.2 L205.6 726.2 L207.6 727.2 M214.2 691.3 L216.2 690.3 L217.2 688.3 L218.2 687.3 M209.0 688.2 L211.0 689.2 L212.0 687.2 L213.0 689.2 L215.0 688.2 M192.4 719.2 L193.4 721.2 L191.4 720.2 M204.2 683.9 L205.2 681.9 L207.2 680.9 L208.2 678.9 M207.4 693.5 L206.4 692.5 L207.4 694.5 M206.8 701.4 L205.8 700.4 L204.8 699.4 L202.8 698.4 L203.8 699.4 M209.3 693.8 L208.3 692.8 L206.3 691.8 L207.3 689.8 L208.3 688.8 M218.7 680.6 L216.7 681.6 L217.7 683.6 L218.7 681.6 L216.7 679.6 M208.7 708.6 L209.7 709.6 L211.7 707.6 M208.4 727.0 L210.4 725.0 L211.4 724.0 L209.4 722.0 M213.4 696.0 L212.4 697.0 L211.4 696.0 L210.4 694.0 M205.1 677.0 L203.1 676.0 L204.1 678.0 L205.1 677.0 M217.4 677.3 L218.4 678.3 L220.4 676.3 L221.4 675.3 M223.4 700.8 L221.4 699.8 L220.4 697.8 M223.2 679.5 L221.2 678.5 L219.2 676.5 L221.2 677.5 M198.3 718.3 L200.3 720.3 L199.3 719.3 M222.4 687.7 L221.4 686.7 L219.4 687.7 L220.4 688.7 M205.4 691.1 L203.4 690.1 L204.4 688.1 L203.4 690.1 M204.8 689.0 L203.8 690.0 L205.8 691.0 L204.8 690.0 M223.6 674.2 L224.6 673.2 L222.6 672.2 L223.6 673.2 L224.6 672.2 M203.2 721.8 L204.2 720.8 L205.2 719.8 L203.2 718.8 L202.2 719.8 M209.0 679.4 L210.0 678.4 L209.0 677.4 M210.3 724.3 L212.3 725.3 L211.3 724.3 L210.3 726.3 L209.3 728.3 M214.4 704.2 L212.4 706.2 L213.4 707.2 L214.4 706.2 L212.4 704.2 M201.7 720.0 L202.7 719.0 L201.7 721.0 M220.7 694.3 L221.7 696.3 L222.7 694.3 M199.4 731.0 L197.4 729.0 L198.4 728.0 L199.4 727.0 L200.4 725.0 M216.1 699.5 L217.1 701.5 L216.1 699.5 M211.1 681.3 L212.1 683.3 L210.1 681.3 L208.1 680.3 M195.1 724.9 L196.1 723.9 L197.1 722.9 L199.1 720.9 L200.1 718.9 M215.5 673.4 L217.5 672.4 L218.5 674.4 M217.5 677.6 L219.5 676.6 L220.5 678.6 M213.4 700.5 L212.4 698.5 L214.4 697.5 L215.4 699.5 M206.9 696.1 L207.9 697.1 L209.9 696.1 M221.2 707.1 L223.2 709.1 L221.2 710.1 L222.2 709.1 M211.7 694.1 L210.7 692.1 L211.7 691.1 L210.7 693.1 L208.7 692.1 M211.8 723.0 L209.8 725.0 L210.8 727.0 M202.8 732.3 L200.8 733.3 L201.8 732.3 L199.8 730.3 M206.4 687.9 L207.4 689.9 L206.4 688.9 L204.4 690.9 M207.9 725.0 L208.9 724.0 L210.9 723.0 L211.9 724.0 L213.9 726.0 M220.1 672.4 L219.1 671.4 L220.1 673.4 L222.1 675.4 M201.2 730.5 L200.2 731.5 L201.2 732.5 M205.4 688.9 L206.4 686.9 L204.4 685.9 M208.1 709.8 L210.1 707.8 L211.1 706.8 L213.1 707.8 M216.3 677.5 L215.3 676.5 L216.3 677.5 M210.8 688.4 L208.8 687.4 L209.8 686.4 L211.8 684.4 L209.8 683.4 M217.7 708.5 L219.7 710.5 L218.7 709.5 L219.7 711.5 M210.6 695.1 L212.6 696.1 L213.6 697.1 L214.6 696.1 M207.0 709.1 L208.0 707.1 L210.0 706.1 L212.0 707.1 L211.0 709.1 M209.2 708.2 L210.2 709.2 L211.2 708.2 M226.4 683.7 L224.4 681.7 L222.4 682.7 L223.4 681.7 M197.4 710.7 L198.4 712.7 L200.4 711.7 L202.4 712.7 M201.7 703.0 L202.7 705.0 L201.7 704.0 L203.7 703.0 L205.7 702.0 M209.7 715.4 L207.7 714.4 L208.7 715.4 L209.7 713.4 L210.7 715.4 M191.3 713.1 L192.3 715.1 L194.3 714.1 L195.3 715.1 M220.0 683.9 L222.0 682.9 L220.0 684.9 M210.4 693.4 L208.4 692.4 L206.4 690.4 L207.4 692.4 L205.4 693.4 M191.2 720.4 L192.2 722.4 L193.2 721.4 L194.2 720.4 L196.2 722.4 M217.4 677.4 L215.4 676.4 L216.4 675.4 M220.3 710.3 L218.3 712.3 L219.3 711.3 M215.5 693.4 L213.5 694.4 L211.5 696.4 M217.6 673.3 L218.6 672.3 L217.6 671.3 M221.7 690.9 L222.7 689.9 L223.7 690.9 L225.7 688.9 M215.6 684.8 L217.6 683.8 L215.6 682.8 L213.6 681.8 M198.4 727.1 L200.4 725.1 L198.4 724.1 L199.4 726.1 M162.5 727.7 L163.5 725.7 L164.5 724.7 M158.6 740.4 L159.6 739.4 L161.6 738.4 M157.0 732.4 L159.0 731.4 L160.0 730.4 L161.0 729.4 L162.0 728.4 M160.0 736.6 L161.0 738.6 L163.0 740.6 M167.8 738.9 L165.8 740.9 L163.8 742.9 M187.4 748.3 L185.4 750.3 L184.4 751.3 L182.4 750.3 M181.2 746.6 L182.2 745.6 L180.2 743.6 M152.9 730.7 L153.9 729.7 L155.9 730.7 M165.6 752.7 L164.6 753.7 L163.6 751.7 L164.6 752.7 M162.8 729.1 L161.8 727.1 L163.8 725.1 L164.8 724.1 L166.8 723.1 M182.4 740.7 L181.4 742.7 L180.4 744.7 L182.4 746.7 L183.4 745.7 M179.4 741.6 L177.4 742.6 L175.4 744.6 M190.2 748.8 L192.2 747.8 L193.2 746.8 M182.5 752.2 L184.5 754.2 L182.5 753.2 L184.5 755.2 L183.5 754.2 M180.9 751.2 L179.9 753.2 L178.9 752.2 L179.9 753.2 M165.7 734.9 L166.7 733.9 L165.7 732.9 M160.6 739.2 L159.6 740.2 L160.6 739.2 L159.6 741.2 M179.3 742.6 L181.3 741.6 L179.3 742.6 L177.3 743.6 M154.9 730.6 L153.9 731.6 L155.9 730.6 M171.3 748.7 L172.3 749.7 L170.3 748.7 L172.3 747.7 M158.3 740.3 L159.3 738.3 L160.3 740.3 M161.0 728.0 L159.0 726.0 L161.0 725.0 M178.0 752.8 L177.0 750.8 L178.0 752.8 L179.0 751.8 L178.0 752.8 M164.1 733.1 L165.1 734.1 L164.1 732.1 L162.1 730.1 L163.1 729.1 M171.7 738.5 L172.7 740.5 L173.7 738.5 M156.2 727.3 L158.2 726.3 L156.2 724.3 M159.6 733.3 L160.6 735.3 L162.6 734.3 M162.4 745.2 L164.4 746.2 L162.4 745.2 L160.4 744.2 L159.4 743.2 M163.0 736.2 L164.0 738.2 L163.0 737.2 L161.0 739.2 L162.0 741.2 M189.9 753.6 L190.9 755.6 L188.9 753.6 L189.9 755.6 M178.9 741.2 L179.9 740.2 L178.9 741.2 L179.9 743.2 M158.3 745.9 L156.3 744.9 L157.3 745.9 L158.3 747.9 M160.6 736.1 L158.6 735.1 L157.6 734.1 L158.6 732.1 M159.7 752.5 L157.7 751.5 L158.7 752.5 L160.7 751.5 L161.7 750.5 M160.0 741.5 L161.0 743.5 L162.0 741.5 M187.4 745.9 L186.4 747.9 L187.4 749.9 L185.4 751.9 M160.4 733.3 L161.4 732.3 L163.4 733.3 M155.3 723.5 L156.3 722.5 L157.3 720.5 M157.4 748.7 L155.4 749.7 L153.4 748.7 L154.4 750.7 M174.1 751.0 L172.1 750.0 L173.1 751.0 M158.5 736.3 L160.5 734.3 L158.5 733.3 L156.5 731.3 L157.5 730.3 M161.0 759.1 L163.0 757.1 L161.0 758.1 L160.0 757.1 M172.0 753.9 L170.0 752.9 L171.0 754.9 M167.2 737.5 L169.2 736.5 L168.2 738.5 M155.8 743.7 L154.8 744.7 L156.8 745.7 M150.9 736.8 L148.9 735.8 L147.9 736.8 L149.9 737.8 L147.9 739.8 M175.2 742.0 L173.2 744.0 L171.2 743.0 M184.0 744.0 L182.0 745.0 L183.0 744.0 L182.0 742.0 L183.0 743.0 M152.7 731.8 L154.7 733.8 L155.7 732.8 L154.7 733.8 M156.6 726.4 L158.6 725.4 L160.6 724.4 L161.6 725.4 L160.6 727.4 M152.9 730.3 L153.9 732.3 L154.9 733.3 L152.9 732.3 M157.9 741.8 L158.9 740.8 L156.9 739.8 L157.9 738.8 M162.1 728.5 L161.1 729.5 L160.1 727.5 M159.6 734.4 L160.6 735.4 L161.6 733.4 M158.6 748.2 L159.6 746.2 L157.6 744.2 M185.6 754.0 L184.6 752.0 L183.6 753.0 L184.6 751.0 M159.3 731.4 L157.3 730.4 L159.3 732.4 L160.3 731.4 L158.3 730.4 M176.9 749.9 L178.9 750.9 L180.9 748.9 L178.9 749.9 L179.9 750.9 M152.5 743.2 L153.5 742.2 L151.5 740.2 L150.5 739.2 L149.5 741.2 M173.7 742.2 L172.7 744.2 L173.7 745.2 L172.7 747.2 L173.7 746.2 M183.5 749.9 L184.5 748.9 L185.5 749.9 L186.5 751.9 M161.1 740.9 L162.1 739.9 L161.1 738.9 M151.2 723.4 L152.2 725.4 L151.2 727.4 M176.6 748.3 L175.6 750.3 L173.6 751.3 M164.2 755.2 L162.2 753.2 L164.2 754.2 M152.6 741.2 L154.6 740.2 L152.6 741.2 L150.6 742.2 M165.6 731.3 L166.6 732.3 L168.6 731.3 L169.6 730.3 M171.0 756.4 L170.0 757.4 L171.0 755.4 L172.0 753.4 M171.3 754.7 L172.3 756.7 L173.3 755.7 M184.4 753.0 L185.4 751.0 L187.4 750.0 L189.4 749.0 L190.4 747.0 M163.3 738.6 L161.3 737.6 L163.3 736.6 L161.3 735.6 M164.9 755.8 L166.9 756.8 L164.9 758.8 L163.9 757.8 L161.9 755.8 M155.9 742.5 L157.9 740.5 L155.9 738.5 L156.9 736.5 L154.9 734.5 M159.8 740.2 L160.8 742.2 L158.8 744.2 L159.8 743.2 L157.8 744.2 M192.6 753.1 L190.6 754.1 L189.6 752.1 M151.9 738.9 L152.9 739.9 L153.9 737.9 L154.9 735.9 M178.7 740.3 L179.7 739.3 L180.7 738.3 L182.7 739.3 L183.7 738.3 M183.4 754.3 L181.4 753.3 L182.4 755.3 M160.6 726.1 L158.6 728.1 L156.6 726.1 M167.8 740.9 L169.8 742.9 L170.8 741.9 L171.8 739.9 L173.8 738.9 M172.4 742.3 L171.4 741.3 L172.4 739.3 L174.4 741.3 M161.7 745.1 L159.7 747.1 L158.7 749.1 L159.7 750.1 M173.2 739.5 L172.2 740.5 L171.2 739.5 L170.2 738.5 L169.2 736.5 M164.1 732.8 L162.1 731.8 L161.1 732.8 L163.1 730.8 M166.0 745.3 L167.0 746.3 L169.0 744.3 L170.0 743.3 L171.0 742.3 M171.0 750.8 L170.0 748.8 L169.0 749.8 L171.0 751.8 L170.0 753.8 M166.3 731.9 L167.3 729.9 L168.3 728.9 L166.3 730.9 M161.4 742.3 L162.4 743.3 L163.4 744.3 L162.4 745.3 M178.0 753.3 L177.0 752.3 L178.0 754.3 M160.5 753.0 L161.5 752.0 L162.5 753.0 M152.8 726.3 L150.8 725.3 L152.8 724.3 M173.1 738.4 L171.1 736.4 L172.1 738.4 L174.1 737.4 L176.1 736.4 M152.9 734.3 L153.9 732.3 L152.9 731.3 M179.9 740.7 L181.9 738.7 L179.9 737.7 L177.9 739.7 M179.9 747.2 L177.9 749.2 L179.9 751.2 L178.9 750.2 M185.9 753.9 L186.9 754.9 L185.9 756.9 M173.7 739.4 L174.7 738.4 L175.7 739.4 M174.4 739.0 L172.4 740.0 L173.4 739.0 L175.4 738.0 M170.4 738.1 L169.4 739.1 L170.4 738.1 L172.4 740.1 L170.4 741.1 M150.4 720.7 L151.4 718.7 L152.4 717.7 L154.4 718.7 L153.4 717.7 M170.0 756.5 L169.0 755.5 L167.0 754.5 L169.0 752.5 M153.2 742.5 L151.2 744.5 L150.2 743.5 M159.7 747.6 L160.7 746.6 L161.7 745.6 L160.7 744.6 L161.7 742.6 M159.8 752.3 L161.8 751.3 L160.8 749.3 L159.8 747.3 L158.8 746.3 M162.9 727.5 L163.9 729.5 L162.9 730.5 L163.9 731.5 L164.9 730.5 M156.7 750.9 L158.7 748.9 L159.7 747.9 M156.9 729.9 L157.9 727.9 L156.9 726.9 L155.9 725.9 L157.9 726.9 M162.8 732.2 L160.8 731.2 L162.8 732.2 L163.8 734.2 M175.7 749.1 L174.7 748.1 L175.7 747.1 M150.1 725.9 L151.1 723.9 L150.1 724.9 M165.4 737.7 L166.4 736.7 L164.4 737.7 L162.4 739.7 M170.0 748.7 L169.0 750.7 L171.0 749.7 M151.6 719.5 L149.6 718.5 L148.6 717.5 L149.6 718.5 L147.6 719.5 M182.0 748.2 L181.0 746.2 L182.0 744.2 L184.0 745.2 M171.8 740.0 L172.8 739.0 L171.8 738.0 M161.3 757.1 L163.3 759.1 L162.3 758.1 L161.3 760.1 M172.0 754.7 L170.0 752.7 L172.0 754.7 M159.3 748.6 L158.3 747.6 L159.3 745.6 M168.6 743.7 L169.6 745.7 L167.6 743.7 M160.7 749.9 L158.7 748.9 L156.7 750.9 L157.7 748.9 L155.7 747.9 M177.2 746.4 L178.2 744.4 L180.2 746.4 L179.2 744.4 M163.9 756.3 L161.9 754.3 L160.9 753.3 L161.9 752.3 M156.6 732.1 L155.6 731.1 L154.6 732.1 M151.7 739.6 L149.7 741.6 L147.7 740.6 L145.7 741.6 M179.6 748.7 L180.6 749.7 L178.6 748.7 M186.6 751.0 L185.6 750.0 L187.6 752.0 L188.6 754.0 L189.6 752.0 M185.2 748.9 L184.2 747.9 L185.2 746.9 M174.7 754.1 L172.7 753.1 L174.7 754.1 L176.7 753.1 L174.7 752.1 M178.7 752.4 L179.7 751.4 L180.7 749.4 L181.7 748.4 M156.4 740.4 L157.4 739.4 L159.4 741.4 M151.4 731.7 L150.4 730.7 L152.4 732.7 L151.4 730.7 M159.5 743.8 L158.5 742.8 L159.5 743.8 L158.5 744.8 M157.4 732.4 L159.4 733.4 L161.4 734.4 L162.4 736.4 L161.4 735.4 M160.8 741.2 L161.8 742.2 L159.8 744.2 L160.8 743.2 L159.8 744.2 M179.0 744.0 L180.0 742.0 L182.0 741.0 L183.0 739.0 M180.0 740.9 L181.0 742.9 L180.0 744.9 L182.0 742.9 M178.1 738.2 L179.1 739.2 L180.1 738.2 L181.1 737.2 L179.1 739.2 M172.7 754.1 L173.7 756.1 L172.7 757.1 M165.8 746.5 L166.8 745.5 L165.8 747.5 L166.8 746.5 M167.7 746.0 L169.7 747.0 L171.7 746.0 L172.7 744.0 M159.0 755.4 L160.0 754.4 L159.0 755.4 L157.0 754.4 M94.7 743.8 L95.7 742.8 L93.7 743.8 L95.7 744.8 L97.7 746.8 M148.4 753.3 L149.4 752.3 L147.4 750.3 M120.2 748.7 L121.2 750.7 L122.2 751.7 L121.2 749.7 M127.3 752.6 L125.3 753.6 L124.3 752.6 L122.3 751.6 L124.3 752.6 M106.9 742.8 L107.9 741.8 L106.9 743.8 L107.9 742.8 M134.1 754.8 L133.1 755.8 L131.1 754.8 M140.1 751.3 L139.1 750.3 L138.1 749.3 L139.1 747.3 L140.1 745.3 M141.5 752.4 L143.5 753.4 L142.5 752.4 L143.5 753.4 L141.5 755.4 M127.6 743.0 L126.6 742.0 L127.6 740.0 L128.6 742.0 L126.6 743.0 M68.8 743.3 L69.8 742.3 L67.8 741.3 M111.5 744.4 L109.5 746.4 L111.5 744.4 M161.0 756.7 L162.0 755.7 L161.0 757.7 L160.0 758.7 L161.0 760.7 M84.0 752.1 L86.0 753.1 L84.0 754.1 L82.0 756.1 M77.8 739.5 L79.8 738.5 L77.8 739.5 L78.8 740.5 L79.8 738.5 M131.3 745.0 L133.3 747.0 L135.3 746.0 L136.3 748.0 M85.7 739.8 L84.7 737.8 L85.7 735.8 L87.7 734.8 M146.3 750.1 L145.3 752.1 L146.3 750.1 L147.3 748.1 M139.4 746.7 L140.4 747.7 L139.4 749.7 L140.4 750.7 M84.2 738.4 L86.2 736.4 L87.2 734.4 M153.1 738.7 L155.1 736.7 L156.1 737.7 L158.1 736.7 M152.3 743.6 L153.3 742.6 L152.3 743.6 L153.3 741.6 M94.6 752.2 L96.6 751.2 L95.6 750.2 L94.6 749.2 L92.6 747.2 M88.1 745.3 L86.1 743.3 L84.1 742.3 L82.1 741.3 M156.3 743.8 L157.3 744.8 L158.3 746.8 M155.9 742.3 L154.9 740.3 L153.9 739.3 L154.9 738.3 L152.9 736.3 M86.7 741.5 L88.7 739.5 L89.7 737.5 L91.7 736.5 L93.7 735.5 M138.9 741.9 L139.9 740.9 L137.9 739.9 L138.9 738.9 M106.1 751.4 L104.1 750.4 L102.1 749.4 M160.5 734.3 L158.5 736.3 L159.5 735.3 L160.5 733.3 L159.5 732.3 M68.3 750.5 L66.3 749.5 L65.3 751.5 M82.9 743.1 L83.9 742.1 L81.9 740.1 M152.5 744.4 L153.5 746.4 L154.5 748.4 M126.5 751.8 L124.5 753.8 L125.5 754.8 M112.6 747.9 L111.6 745.9 L110.6 747.9 L112.6 746.9 L110.6 745.9 M134.3 757.3 L132.3 759.3 L133.3 760.3 L131.3 758.3 L130.3 756.3 M116.4 745.1 L115.4 743.1 L113.4 741.1 L111.4 739.1 M135.4 750.8 L136.4 749.8 L138.4 748.8 M159.8 745.0 L157.8 743.0 L155.8 741.0 M158.5 751.8 L157.5 753.8 L158.5 752.8 M146.0 753.2 L147.0 752.2 L145.0 751.2 M111.2 757.2 L113.2 759.2 L114.2 760.2 L113.2 758.2 L115.2 760.2 M156.0 755.4 L154.0 754.4 L155.0 752.4 L156.0 751.4 M77.1 752.5 L79.1 753.5 L80.1 751.5 L81.1 749.5 M120.1 747.3 L119.1 746.3 L120.1 744.3 L119.1 743.3 L120.1 741.3 M138.6 740.7 L137.6 742.7 L139.6 744.7 M135.8 748.5 L136.8 747.5 L135.8 748.5 L136.8 746.5 L134.8 745.5 M131.2 746.3 L132.2 745.3 L130.2 747.3 L128.2 746.3 L129.2 744.3 M68.0 738.6 L69.0 736.6 L71.0 738.6 M76.6 736.9 L75.6 735.9 L73.6 734.9 L74.6 735.9 M152.8 751.9 L153.8 752.9 L154.8 750.9 L153.8 748.9 L151.8 747.9 M145.5 747.6 L146.5 746.6 L144.5 745.6 L146.5 743.6 M160.5 755.9 L161.5 757.9 L160.5 756.9 L161.5 757.9 M133.5 754.0 L134.5 753.0 L132.5 752.0 M132.0 754.4 L133.0 753.4 L135.0 754.4 L133.0 752.4 M76.5 739.1 L75.5 740.1 L73.5 739.1 L75.5 738.1 M78.2 741.6 L80.2 739.6 L82.2 737.6 L84.2 736.6 L83.2 735.6 M117.9 742.3 L118.9 744.3 L120.9 742.3 M72.5 740.7 L71.5 742.7 L70.5 744.7 M153.8 734.1 L155.8 735.1 L157.8 734.1 M147.9 746.7 L146.9 747.7 L147.9 745.7 M78.6 757.3 L79.6 756.3 L80.6 754.3 L81.6 752.3 M131.5 748.4 L132.5 747.4 L134.5 749.4 M80.6 738.7 L81.6 736.7 L82.6 735.7 L81.6 733.7 M126.9 754.8 L128.9 753.8 L126.9 754.8 M85.8 750.2 L84.8 748.2 L86.8 746.2 L85.8 744.2 L86.8 743.2 M90.0 742.1 L92.0 741.1 L93.0 740.1 L92.0 739.1 L91.0 740.1 M89.3 756.6 L87.3 755.6 L86.3 756.6 L88.3 754.6 M123.9 750.9 L121.9 749.9 L122.9 750.9 M127.7 742.0 L129.7 741.0 L130.7 740.0 L131.7 738.0 L132.7 737.0 M119.2 745.2 L118.2 744.2 L120.2 743.2 M74.6 752.4 L75.6 754.4 L74.6 753.4 L75.6 752.4 M76.1 740.8 L74.1 741.8 L72.1 742.8 M133.4 748.9 L131.4 747.9 L130.4 746.9 L131.4 748.9 L132.4 750.9 M74.2 754.7 L76.2 753.7 L77.2 752.7 L79.2 753.7 L80.2 754.7 M141.3 746.5 L140.3 747.5 L138.3 746.5 L140.3 747.5 M134.9 749.0 L133.9 748.0 L134.9 747.0 L136.9 745.0 L135.9 747.0 M107.8 756.6 L106.8 757.6 L107.8 756.6 L109.8 757.6 L108.8 756.6 M131.1 754.1 L129.1 756.1 L128.1 755.1 M128.7 747.2 L129.7 746.2 L130.7 748.2 L131.7 749.2 M101.3 750.5 L100.3 749.5 L98.3 748.5 L100.3 749.5 M78.3 746.7 L79.3 745.7 L78.3 747.7 L77.3 748.7 M92.3 752.4 L94.3 754.4 L92.3 753.4 L90.3 755.4 L91.3 754.4 M84.0 748.7 L83.0 747.7 L82.0 748.7 M157.4 751.3 L155.4 749.3 L153.4 747.3 M160.9 756.9 L162.9 757.9 L160.9 759.9 M142.0 754.0 L140.0 752.0 L141.0 751.0 L142.0 749.0 M154.1 737.6 L156.1 736.6 L155.1 738.6 L156.1 736.6 L155.1 735.6 M105.4 749.3 L106.4 747.3 L108.4 745.3 M146.6 741.3 L145.6 743.3 L143.6 742.3 L144.6 741.3 M92.6 740.5 L93.6 738.5 L91.6 737.5 L89.6 736.5 L90.6 737.5 M87.8 749.3 L88.8 748.3 L87.8 747.3 L88.8 748.3 M137.6 748.2 L138.6 747.2 L139.6 749.2 L140.6 747.2 L141.6 748.2 M160.6 754.1 L158.6 753.1 L159.6 751.1 L160.6 753.1 M154.3 748.3 L155.3 749.3 L153.3 747.3 L151.3 749.3 M105.6 742.3 L106.6 741.3 L108.6 742.3 L110.6 741.3 M111.6 755.6 L112.6 753.6 L110.6 752.6 L108.6 753.6 M79.9 753.5 L78.9 751.5 L80.9 753.5 L78.9 754.5 L76.9 755.5 M95.6 750.8 L96.6 748.8 L94.6 749.8 M83.0 743.7 L82.0 742.7 L81.0 741.7 L83.0 742.7 M103.1 754.5 L104.1 752.5 L102.1 753.5 L104.1 752.5 M148.4 750.5 L147.4 749.5 L146.4 748.5 L144.4 750.5 M92.3 741.8 L91.3 743.8 L92.3 744.8 L91.3 745.8 L90.3 744.8 M89.9 738.1 L90.9 736.1 L88.9 737.1 L87.9 738.1 M103.4 739.0 L105.4 738.0 L106.4 736.0 L105.4 734.0 M158.3 740.1 L159.3 739.1 L157.3 738.1 L156.3 739.1 L157.3 741.1 M149.3 738.1 L150.3 737.1 L151.3 735.1 M146.6 753.1 L147.6 752.1 L149.6 751.1 L150.6 752.1 M113.1 739.8 L115.1 740.8 L116.1 739.8 L117.1 740.8 M154.7 745.0 L155.7 747.0 L156.7 745.0 M115.4 740.3 L114.4 739.3 L113.4 740.3 L114.4 741.3 L112.4 743.3 M70.0 745.5 L68.0 744.5 L70.0 742.5 L69.0 744.5 M95.9 743.2 L96.9 741.2 L95.9 743.2 L93.9 742.2 L94.9 741.2 M82.4 746.9 L84.4 745.9 L85.4 746.9 M154.5 745.9 L155.5 744.9 L154.5 742.9 L155.5 740.9 M154.2 738.6 L153.2 740.6 L151.2 742.6 M152.4 749.2 L151.4 751.2 L153.4 750.2 L154.4 749.2 L153.4 748.2 M130.2 751.9 L129.2 753.9 L130.2 755.9 L131.2 754.9 M108.9 743.2 L106.9 741.2 L104.9 742.2 L103.9 741.2 M221.5 747.0 L223.5 745.0 L221.5 747.0 M220.1 750.6 L221.1 749.6 L220.1 748.6 L219.1 747.6 L221.1 748.6 M224.3 742.6 L223.3 741.6 L221.3 740.6 M213.1 742.9 L214.1 741.9 L216.1 740.9 L218.1 742.9 L220.1 741.9 M211.8 739.5 L212.8 738.5 L210.8 737.5 M216.8 752.2 L215.8 751.2 L216.8 753.2 L214.8 751.2 M230.4 752.7 L231.4 751.7 L233.4 753.7 L234.4 752.7 M222.6 751.2 L220.6 750.2 L221.6 749.2 L222.6 751.2 L223.6 750.2 M222.5 745.0 L223.5 743.0 L222.5 741.0 M224.2 754.6 L226.2 755.6 L227.2 757.6 L225.2 758.6 M222.5 754.2 L224.5 752.2 L225.5 753.2 L227.5 755.2 M224.1 754.1 L222.1 755.1 L224.1 753.1 L225.1 755.1 M215.6 747.2 L217.6 745.2 L215.6 744.2 L214.6 742.2 L213.6 741.2 M216.2 740.7 L217.2 738.7 L215.2 737.7 L216.2 739.7 M227.9 749.6 L225.9 747.6 L223.9 746.6 L221.9 744.6 M212.3 739.7 L213.3 738.7 L214.3 736.7 L216.3 737.7 L218.3 736.7 M214.7 741.0 L213.7 740.0 L212.7 739.0 M228.9 750.3 L226.9 749.3 L227.9 751.3 L225.9 750.3 L226.9 752.3 M225.4 747.6 L223.4 749.6 L224.4 748.6 M221.1 751.8 L219.1 753.8 L220.1 751.8 M218.0 751.2 L220.0 753.2 L221.0 752.2 L222.0 751.2 M223.3 743.2 L224.3 744.2 L225.3 745.2 L224.3 747.2 L225.3 746.2 M218.9 742.4 L220.9 740.4 L218.9 742.4 L217.9 740.4 L219.9 741.4 M219.5 756.4 L217.5 755.4 L218.5 753.4 L216.5 752.4 M221.4 747.3 L223.4 749.3 L224.4 748.3 L225.4 747.3 L227.4 745.3 M223.9 756.0 L222.9 757.0 L224.9 756.0 L225.9 758.0 L223.9 757.0 M230.4 756.6 L229.4 755.6 L230.4 754.6 M224.0 758.1 L222.0 757.1 L223.0 758.1 L224.0 757.1 L223.0 756.1 M220.5 754.1 L221.5 752.1 L220.5 751.1 L221.5 752.1 M224.6 748.1 L223.6 746.1 L225.6 745.1 L226.6 743.1 M220.2 755.0 L221.2 754.0 L222.2 752.0 M222.6 745.1 L221.6 744.1 L223.6 743.1 M215.4 743.3 L216.4 742.3 L217.4 740.3 L218.4 739.3 L220.4 737.3 M217.7 753.9 L218.7 752.9 L217.7 754.9 L216.7 755.9 L215.7 757.9 M213.0 742.4 L212.0 744.4 L210.0 743.4 L208.0 742.4 L209.0 740.4 M232.0 663.4 L231.0 661.4 L232.0 659.4 M250.0 664.6 L248.0 665.6 L246.0 664.6 L244.0 665.6 L245.0 667.6 M243.2 663.5 L244.2 665.5 L243.2 663.5 L244.2 662.5 M232.4 661.4 L233.4 663.4 L234.4 664.4 M242.7 662.6 L240.7 660.6 L241.7 659.6 L239.7 660.6 L240.7 659.6 M237.1 666.0 L235.1 664.0 L237.1 666.0 M239.5 662.6 L240.5 664.6 L239.5 665.6 L240.5 666.6 M239.7 661.0 L238.7 659.0 L239.7 657.0 M231.0 663.4 L229.0 665.4 L231.0 664.4 L233.0 666.4 L231.0 664.4 M792.5 579.2 L791.5 580.2 L790.5 578.2 M801.5 621.4 L802.5 620.4 L800.5 619.4 L798.5 618.4 M803.8 588.5 L804.8 587.5 L803.8 585.5 M792.9 638.8 L793.9 636.8 L795.9 637.8 M795.7 630.5 L796.7 629.5 L797.7 627.5 M799.6 606.3 L800.6 604.3 L802.6 602.3 M803.8 635.1 L802.8 633.1 L803.8 635.1 L801.8 636.1 L799.8 634.1 M796.8 636.3 L797.8 635.3 L796.8 634.3 M799.0 606.7 L801.0 604.7 L800.0 603.7 L798.0 602.7 L800.0 600.7 M799.3 659.4 L798.3 660.4 L799.3 659.4 L797.3 658.4 M795.2 645.4 L794.2 643.4 L792.2 641.4 M797.1 659.1 L795.1 658.1 L796.1 657.1 L797.1 656.1 L795.1 655.1 M797.4 608.1 L798.4 607.1 L797.4 606.1 M790.0 607.1 L788.0 606.1 L789.0 604.1 L787.0 602.1 L788.0 601.1 M789.8 620.8 L790.8 621.8 L789.8 622.8 L791.8 623.8 L790.8 622.8 M795.6 566.3 L796.6 565.3 L795.6 564.3 M798.9 590.5 L796.9 589.5 L794.9 588.5 M794.3 648.2 L795.3 650.2 L796.3 649.2 L797.3 651.2 L796.3 652.2 M796.8 611.4 L795.8 612.4 L796.8 614.4 L797.8 616.4 M803.8 624.2 L804.8 623.2 L805.8 621.2 L807.8 620.2 L808.8 619.2 M790.8 625.1 L791.8 627.1 L793.8 626.1 L794.8 628.1 M794.6 593.3 L792.6 594.3 L794.6 595.3 L793.6 594.3 M801.9 632.7 L802.9 630.7 L803.9 629.7 L802.9 628.7 M798.8 629.6 L799.8 627.6 L800.8 629.6 L798.8 630.6 L799.8 629.6 M796.9 629.0 L795.9 630.0 L796.9 629.0 L794.9 628.0 M796.3 600.7 L798.3 598.7 L797.3 599.7 L799.3 598.7 M793.3 580.6 L792.3 579.6 L793.3 580.6 M789.9 629.4 L790.9 627.4 L789.9 625.4 M795.4 584.1 L796.4 582.1 L794.4 583.1 L796.4 585.1 M795.0 622.0 L793.0 621.0 L795.0 620.0 L797.0 618.0 M800.0 576.7 L801.0 575.7 L799.0 577.7 L798.0 576.7 M798.2 593.6 L797.2 592.6 L799.2 594.6 M800.6 648.9 L798.6 650.9 L799.6 652.9 M798.7 622.6 L800.7 620.6 L799.7 619.6 L801.7 620.6 L803.7 621.6 M794.0 603.5 L796.0 602.5 L797.0 604.5 L796.0 603.5 L794.0 605.5 M800.9 642.2 L802.9 641.2 L804.9 639.2 L802.9 638.2 M795.9 622.3 L796.9 621.3 L797.9 620.3 M803.7 637.3 L805.7 635.3 L806.7 634.3 L805.7 632.3 L803.7 630.3 M802.6 583.3 L804.6 582.3 L805.6 581.3 M793.3 632.0 L794.3 631.0 L792.3 633.0 L793.3 632.0 L791.3 633.0 M793.4 616.9 L795.4 617.9 L796.4 619.9 M798.2 619.0 L796.2 621.0 L797.2 619.0 L798.2 621.0 M798.6 578.9 L796.6 579.9 L795.6 578.9 L793.6 579.9 L792.6 578.9 M792.0 616.0 L794.0 617.0 L793.0 616.0 L795.0 615.0 M801.5 601.2 L799.5 599.2 L801.5 598.2 L802.5 597.2 L800.5 596.2 M797.2 641.3 L796.2 639.3 L795.2 638.3 L796.2 640.3 L795.2 642.3 M800.6 627.9 L801.6 629.9 L802.6 628.9 L804.6 630.9 M793.5 584.9 L794.5 583.9 L796.5 584.9 L797.5 583.9 L798.5 582.9 M795.7 657.2 L793.7 655.2 L794.7 657.2 M803.6 634.4 L801.6 633.4 L802.6 631.4 L800.6 633.4 M802.4 607.4 L804.4 609.4 L803.4 608.4 L802.4 609.4 L803.4 611.4 M798.4 577.4 L799.4 578.4 L800.4 576.4 M802.1 659.0 L803.1 660.0 L804.1 658.0 L802.1 659.0 M792.4 574.6 L793.4 573.6 L794.4 575.6 L793.4 574.6 L794.4 573.6 M794.7 641.8 L793.7 642.8 L794.7 644.8 M792.7 631.3 L790.7 630.3 L788.7 629.3 L790.7 630.3 M795.9 598.7 L793.9 600.7 L794.9 599.7 L793.9 598.7 M794.2 634.8 L796.2 633.8 L797.2 632.8 L799.2 631.8 L801.2 633.8 M792.1 655.0 L791.1 656.0 L792.1 654.0 L793.1 655.0 L794.1 653.0 M796.2 601.4 L795.2 602.4 L797.2 600.4 L798.2 601.4 L797.2 603.4 M797.3 619.0 L796.3 620.0 L794.3 619.0 M801.2 607.0 L803.2 606.0 L801.2 605.0 L803.2 604.0 L804.2 603.0 M793.8 626.6 L795.8 627.6 L794.8 625.6 L793.8 627.6 M801.6 581.2 L802.6 580.2 L804.6 582.2 L806.6 580.2 L804.6 579.2 M795.7 649.6 L796.7 647.6 L797.7 646.6 L796.7 647.6 L797.7 646.6 M803.1 582.2 L804.1 580.2 L806.1 578.2 L805.1 579.2 M791.3 617.8 L789.3 615.8 L790.3 613.8 L789.3 612.8 L788.3 610.8 M792.8 644.4 L794.8 643.4 L795.8 641.4 L796.8 640.4 M792.3 588.8 L794.3 586.8 L793.3 584.8 L791.3 585.8 L789.3 584.8 M799.5 639.4 L798.5 640.4 L796.5 641.4 M800.4 604.7 L802.4 603.7 L803.4 602.7 L801.4 604.7 L802.4 603.7 M799.2 621.0 L801.2 622.0 L800.2 621.0 L802.2 620.0 L800.2 622.0 M792.2 655.6 L793.2 657.6 L791.2 655.6 M799.3 650.5 L797.3 648.5 L798.3 647.5 L797.3 646.5 M796.0 578.3 L798.0 577.3 L797.0 576.3 L795.0 577.3 M793.9 622.1 L791.9 621.1 L789.9 619.1 L790.9 617.1 M800.9 594.7 L799.9 592.7 L797.9 590.7 L798.9 588.7 L799.9 587.7 M798.2 625.8 L800.2 623.8 L798.2 625.8 L800.2 626.8 L802.2 625.8 M794.7 606.9 L796.7 605.9 L797.7 604.9 M798.7 644.3 L799.7 646.3 L800.7 644.3 L801.7 642.3 M798.8 590.7 L797.8 589.7 L799.8 591.7 M793.1 580.3 L792.1 579.3 L791.1 580.3 L790.1 578.3 L791.1 576.3 M795.2 569.2 L796.2 571.2 L798.2 569.2 L796.2 567.2 M795.1 613.6 L797.1 614.6 L796.1 613.6 M796.6 626.0 L797.6 625.0 L798.6 627.0 M803.5 607.5 L802.5 608.5 L800.5 610.5 L798.5 612.5 L800.5 613.5 M798.0 647.1 L800.0 645.1 L801.0 644.1 M797.8 633.8 L799.8 634.8 L798.8 636.8 L800.8 634.8 M793.2 621.1 L794.2 622.1 L795.2 620.1 L793.2 622.1 M796.4 587.5 L797.4 589.5 L798.4 590.5 M799.8 601.1 L800.8 602.1 L801.8 604.1 L800.8 603.1 M803.1 590.2 L802.1 589.2 L803.1 588.2 L804.1 586.2 L802.1 587.2" stroke="#000"/>
<path d="M201.9 5.9 L201.9 9.3 L204.6 11.5 L204.4 14.8 L206.3 18.8 L208.1 22.2 L210.3 26.2 L206.9 29.6 L202.6 30.5 L201.9 33.2 L201.7 36.7 L204.4 39.4 L204.4 43.6 L209.3 45.6 L211.4 48.5 L211.6 51.1 L213.0 54.2 L216.3 55.2 L217.9 59.1 L221.6 55.4 L225.3 57.9 L227.8 52.9 L230.1 55.3 L230.1 58.3 L231.5 61.6 L231.1 64.8 L233.1 68.3 L230.3 71.4 L230.2 75.6 L227.8 78.8 L230.3 82.5 L226.3 83.6 L225.3 87.4 L225.4 90.8 L227.8 93.6 L224.4 94.7 L221.6 98.5 L218.4 96.3 L216.7 94.8 L213.0 96.0 L211.4 99.1 L210.8 101.7 L209.3 104.7 L204.4 107.1 L203.5 103.5 L203.2 99.7 L198.2 98.5 L198.2 103.4 L199.7 105.9 L203.2 108.4 L202.7 111.3 L201.9 114.5 L199.0 116.7 L197.0 118.2 L194.5 123.1 L191.5 124.0 L189.6 126.8 L193.3 130.5 L195.5 133.6 L195.8 136.7 L192.3 138.7 L189.6 140.4 L185.8 142.8 L187.5 145.9 L187.2 149.2 L188.8 152.8 L190.9 155.1 L187.5 156.8 L184.7 158.8 L187.2 163.8 L183.2 166.0 L181.0 168.7 L176.4 170.0 L172.4 171.2 L169.9 176.1 L172.2 178.9 L174.8 181.0 L173.3 184.9 L169.9 185.9 L167.4 187.5 L163.8 189.6 L167.1 192.1 L169.9 192.1 L166.1 191.9 L162.5 194.5 L160.1 197.0 L163.8 198.7 L159.4 200.3 L157.6 203.6 L154.9 206.4 L153.9 209.8 L157.2 211.3 L158.6 213.8 L160.1 217.2 L160.5 220.8 L161.3 224.6 L158.8 227.7 L155.1 227.0 L154.3 230.6 L152.7 233.2 L148.3 233.7 L145.3 234.4 L142.8 239.3 L145.7 240.3 L147.8 244.3 L145.4 247.1 L146.5 250.4 L142.1 250.9 L137.9 252.9 L137.6 248.9 L133.0 247.9 L129.3 251.6 L130.3 255.6 L133.0 259.0 L129.9 261.6 L125.6 262.7 L126.2 266.1 L123.1 268.9 L128.1 271.3 L124.9 274.5 L125.6 278.7 L123.5 281.8 L123.9 285.6 L123.1 288.6 L121.3 292.7 L115.7 293.5 L115.7 298.4 L112.4 298.6 L108.4 296.0 L105.2 299.2 L103.4 303.4 L104.1 306.9 L104.7 310.7 L100.2 309.8 L97.3 308.3 L95.5 311.9 L96.0 315.7 L99.9 318.3 L101.0 321.8 L99.2 325.5 L97.6 326.5 L93.6 328.0 L88.8 329.9 L85.0 330.4 L88.1 334.1 L91.1 335.4 L87.7 338.1 L86.2 342.8 L87.6 346.4 L92.3 346.5 L89.8 350.0 L84.9 349.1 L83.7 352.6 L87.4 356.3 L83.6 354.4 L79.5 356.2 L76.3 355.1 L76.3 358.1 L75.1 361.2 L79.4 363.2 L81.3 367.4 L79.8 371.1 L76.6 371.3 L75.1 374.8 L78.9 377.4 L81.3 380.9 L84.3 379.2 L87.4 378.5 L86.3 382.1 L82.1 382.3 L81.3 385.9 L83.4 388.8 L86.2 392.0 L87.4 394.9 L87.0 399.3 L82.5 401.1 L81.1 404.4 L76.3 404.8 L80.8 407.8 L81.3 412.2 L78.8 417.1 L82.2 418.4 L85.0 422.0 L84.9 426.7 L80.0 429.4 L79.7 433.2 L82.0 435.7 L82.5 439.3 L84.2 442.8 L82.6 446.1 L81.3 449.1 L86.0 449.5 L89.9 451.6 L87.1 455.7 L85.0 459.0 L83.7 463.9 L87.2 464.6 L91.1 461.4 L94.3 464.2 L96.0 466.3 L98.2 469.9 L101.0 472.5 L98.5 475.5 L97.3 478.7 L94.9 482.6 L91.1 483.6 L92.3 487.2 L92.3 491.0 L89.3 487.4 L85.0 487.3 L82.6 490.3 L80.0 492.2 L82.5 495.6 L87.4 495.9 L85.6 499.5 L83.7 503.3 L80.3 506.6 L77.6 508.2 L77.5 512.7 L73.9 515.6 L72.1 519.0 L67.7 519.3 L65.3 521.9 L65.3 525.4 L68.9 525.3 L71.4 527.9 L68.6 530.9 L62.8 530.4 L62.0 533.9 L61.6 537.8 L57.0 538.6 L54.2 537.8 L53.2 542.0 L56.6 545.1 L57.8 549.0 L55.7 552.4 L52.9 555.0 L50.4 556.5 L48.0 559.9 L50.3 562.6 L52.9 563.6 L51.9 566.8 L51.7 569.8 L47.8 570.3 L45.6 572.2 L43.6 575.6 L44.3 579.6 L46.8 582.2 L48.0 584.5 L49.3 590.0 L47.7 587.1 L46.8 584.2 L48.0 581.0 L45.6 578.2 L45.1 575.2 L46.9 572.1 L46.8 569.0 L46.3 572.2 L44.4 575.4 L43.2 578.0 L44.5 581.0 L45.8 583.9 L46.1 587.0 L46.7 590.8 L45.0 594.2 M5.9 105.2 L155.1 105.2 L160.1 109.6 L161.3 115.7 L160.1 121.9 L155.1 128.1 L147.8 135.4 L141.6 144.1 L137.4 149.2 L187.2 149.2 M209.3 105.2 L280.0 105.2 M304.5 5.9 L307.5 7.8 L309.4 11.1 L309.7 14.4 L308.2 17.2 L304.9 17.5 L301.6 19.7 L297.8 20.5 L294.6 20.9 L292.4 22.3 L288.9 21.6 L285.2 22.4 L283.1 24.3 L279.9 24.6 L277.4 29.6 L275.4 33.1 L276.2 36.9 L278.3 40.9 L281.1 44.3 L281.3 47.4 L282.3 50.5 L278.6 54.2 L274.1 53.1 L270.0 52.2 L268.4 50.5 L266.2 48.1 L262.2 47.4 L259.2 45.7 L256.1 44.3 L253.0 43.1 L248.5 42.0 L246.3 39.4 L242.7 40.5 L238.9 40.6 L236.6 43.4 L232.7 45.6 L230.1 49.4 L227.8 52.9 M270.0 105.2 L310.6 105.2 L312.4 97.3 L309.9 88.7 L324.2 91.1 L417.8 90.6 L422.7 91.6 L481.8 93.6 L550.0 95.3 L572.0 96.0 L636.0 97.3 L658.2 94.8 L712.4 95.5 L786.3 94.3 L806.0 98.0 M636.0 96.5 L639.4 95.0 L641.6 92.3 L645.4 90.8 L648.4 88.7 L651.5 87.7 L654.4 86.8 L657.2 86.8 L660.3 85.8 L663.1 85.0 L666.8 84.4 L670.1 83.4 L673.6 83.4 L676.7 82.5 L678.8 78.4 L681.6 75.1 L684.6 73.8 L688.3 72.2 L692.0 71.1 L695.1 70.2 L696.0 65.7 L697.6 61.6 L701.6 60.1 L704.3 57.5 L707.5 55.4 L708.9 52.4 L708.7 49.3 L711.4 47.6 L714.0 46.0 L716.8 44.2 L719.2 43.4 L722.2 41.9 L724.7 40.5 L727.6 39.7 L730.8 38.3 L733.2 37.9 L736.1 37.0 L739.4 35.3 L741.9 34.5 L744.1 32.4 L746.5 30.6 L749.4 29.6 L751.8 27.1 L754.2 25.2 L756.6 23.2 L759.3 21.0 L761.2 18.4 L762.9 16.0 L765.3 12.3 L762.9 9.9 L758.5 9.8 L754.2 9.9 L751.4 8.0 L749.3 5.9 M765.3 12.3 L765.6 15.7 L765.2 19.0 L764.1 22.2 L766.7 24.2 L768.7 26.6 L770.3 29.6 L773.7 31.5 L776.4 34.5 L779.7 37.1 L782.6 40.6 L786.9 41.3 L791.2 40.6 L794.4 40.1 L797.8 38.7 L801.0 36.9 L803.0 34.6 L806.0 33.2 M786.3 94.3 L783.9 97.4 L783.8 101.0 L783.9 104.3 L781.8 107.4 L782.6 110.8 L781.4 113.9 L780.1 117.0 L782.6 119.4 L778.0 118.2 L773.9 118.2 L770.5 121.4 L766.6 123.1 L764.2 126.1 L763.7 130.0 L761.6 133.0 L759.9 136.6 L756.7 139.1 L752.9 138.2 L749.3 137.9 L744.4 135.4 L741.4 136.4 L737.5 137.8 L734.5 139.1 L731.6 140.6 L730.4 143.7 L727.2 145.3 L724.7 148.1 L722.2 151.5 L717.3 152.7 L717.0 148.9 L716.1 145.3 L712.4 144.1 L709.9 145.6 L707.5 147.8 L704.6 149.8 L702.6 153.1 L700.1 155.1 L696.6 154.5 L693.9 153.9 L693.5 158.2 L692.7 162.5 L690.1 165.3 L687.8 167.5 L684.1 168.5 L680.4 168.7 L676.8 170.0 L673.0 172.4 L669.8 174.5 L667.3 176.1 L664.7 178.7 L660.9 180.6 L658.2 182.2 L654.8 184.5 L651.5 186.4 L648.4 188.4 L645.0 187.9 L641.6 187.1 L638.5 186.7 L635.2 188.1 L632.2 188.1 L629.1 188.3 L626.2 189.6 L622.1 190.9 L619.8 194.5 L616.3 195.8 L612.6 200.0 L611.4 199.9 L611.3 203.3 L610.9 206.7 L609.0 209.8 L604.5 211.7 L601.6 214.7 L598.7 214.6 L594.7 215.4 L591.7 215.9 L590.2 220.3 L589.3 224.6 L588.9 228.2 L588.9 232.0 L588.1 235.6 L588.0 239.3 M142.8 238.8 L280.0 238.8 L417.8 238.6 L550.0 239.3 L588.0 239.3 L658.2 239.8 L679.1 238.1 M679.1 238.1 L690.2 234.4 L702.5 230.7 L712.4 227.0 L722.2 223.3 L729.6 220.9 L732.1 219.6 L744.4 219.6 L806.0 223.3 M679.1 238.1 L677.4 240.9 L675.1 243.9 L673.0 246.7 L670.9 249.6 L668.2 251.5 L665.6 254.1 L663.9 257.5 L662.0 260.4 L660.7 264.0 L663.0 266.7 L665.5 268.3 L668.1 270.1 L671.1 271.3 L673.2 273.2 L675.3 275.3 L677.9 277.5 L681.2 279.5 L683.8 281.6 L686.5 283.7 L690.8 283.9 L695.1 283.7 L696.4 287.3 L698.1 290.5 L700.1 293.5 L702.0 296.6 L704.3 299.7 L705.0 303.4 L705.1 306.8 L706.2 310.1 L707.5 313.2 L710.1 315.4 L711.6 318.1 L712.8 320.5 L714.8 323.1 L716.1 325.8 L719.0 327.5 L720.0 330.9 L722.2 332.9 L725.4 334.6 L729.5 336.3 L732.1 339.1 L734.4 341.2 L737.6 342.7 L739.5 345.2 L741.4 349.1 L744.4 352.6 L747.1 356.0 L749.3 360.0 L751.7 362.1 L754.5 363.9 L757.9 364.9 L759.3 368.9 L761.6 372.3 L763.2 375.9 L766.6 378.5 L765.3 381.4 L765.3 384.6 L768.5 386.5 L771.5 389.5 L772.7 395.0 L775.6 397.6 L778.9 399.9 L780.7 402.9 L784.0 404.9 L786.3 407.2 L790.2 408.8 L792.3 411.8 L796.1 413.4 L797.3 417.8 L798.6 422.0 L800.0 426.1 L802.3 429.4 L802.9 432.7 L805.1 435.8 L804.7 439.3 L806.0 442.9 M299.6 238.6 L306.9 246.7 L302.0 293.5 L295.9 355.1 L292.2 395.0 L286.0 439.3 L281.1 493.4 L279.9 527.9 L281.1 562.4 L282.3 590.0 L283.5 612.0 L285.3 646.5 M492.9 239.3 L499.0 276.3 L506.4 318.1 L512.6 355.1 L517.5 395.0 L524.9 426.9 L531.0 449.1 L538.4 461.4 L539.7 472.5 L537.2 476.2 L545.8 479.9 L544.6 484.8 L537.2 488.5 L533.5 493.4 L532.3 503.3 L533.5 518.1 L534.7 537.8 L531.0 557.5 L529.8 572.2 L534.7 584.5 L537.2 590.0 L535.1 594.2 L542.3 603.2 L544.1 619.4 M5.9 415.4 L78.8 415.4 M45.0 594.2 L185.5 594.2 L178.3 614.0 L178.5 612.0 L177.3 621.9 L182.2 634.2 L188.4 641.6 L189.6 651.4 L194.5 661.3 L197.0 667.4 M535.1 594.2 L400.0 594.2 L399.9 594.2 L344.1 594.2 L346.3 612.0 L357.4 624.3 L356.2 634.2 L359.9 642.8 L361.6 645.2 M544.1 619.4 L540.0 618.9 L638.5 624.3 L687.8 628.0 L741.9 632.2 L744.1 632.2 L745.9 643.4 L748.4 650.3 L757.1 650.3 L758.8 636.6 L757.1 621.0 L758.8 613.3 L765.7 609.8 L776.9 614.1 L785.5 615.9 L795.9 619.3" stroke="#000"/>
</g>
<g clip-path="url(#mc)">
<g fill="none" stroke="#d2d2d2" stroke-width="1">
<circle cx="407" cy="407" r="159.5"/>
<circle cx="407" cy="407" r="279.5"/>
<circle cx="407" cy="407" r="399.5"/>
<circle cx="407" cy="407" r="519.5"/>
</g>
<rect x="394.7" y="2.5" width="23" height="9" fill="#5d504c"/>
<text x="406.2" y="10.8" font-size="10.5" fill="#ffff9c" text-anchor="middle" textLength="21" lengthAdjust="spacingAndGlyphs">313</text>
<rect x="394.7" y="122.5" width="23" height="9" fill="#5d504c"/>
<text x="406.2" y="130.8" font-size="10.5" fill="#ffff9c" text-anchor="middle" textLength="21" lengthAdjust="spacingAndGlyphs">219</text>
<rect x="394.7" y="242.5" width="23" height="9" fill="#5d504c"/>
<text x="406.2" y="250.8" font-size="10.5" fill="#ffff9c" text-anchor="middle" textLength="21" lengthAdjust="spacingAndGlyphs">125</text>
<rect x="398.4" y="362.5" width="15.5" height="9" fill="#5d504c"/>
<text x="406.2" y="370.8" font-size="10.5" fill="#ffff9c" text-anchor="middle" textLength="13.5" lengthAdjust="spacingAndGlyphs">31</text>
<circle cx="407" cy="407" r="39.5" fill="none" stroke="#ff0000" stroke-width="1.1"/>
<g stroke="#eaa000" stroke-width="1" fill="none"><circle cx="354.5" cy="48.5" r="4"/><path d="M352 48.5H357M354.5 46V51"/></g>
</g>
<rect x="8.5" y="758.5" width="244" height="45" fill="#000" stroke="#8a8a8a"/>
<rect x="9.5" y="759.5" width="242" height="43" fill="none" stroke="#5a5a5a"/>
<text x="13" y="770.5" class="lib" font-size="11" fill="#fff" textLength="35.7" lengthAdjust="spacingAndGlyphs">Symbols</text>
<text x="53" y="770.5" class="lib" font-size="11" fill="#fff" textLength="16.7" lengthAdjust="spacingAndGlyphs">-CG</text>
<text x="78" y="770.5" class="lib" font-size="11" fill="#fff" textLength="13.9" lengthAdjust="spacingAndGlyphs">-IC</text>
<text x="99" y="770.5" class="lib" font-size="11" fill="#fff" textLength="19.9" lengthAdjust="spacingAndGlyphs">+CG</text>
<text x="124" y="770.5" class="lib" font-size="11" fill="#fff" textLength="17" lengthAdjust="spacingAndGlyphs">+IC</text>
<text x="153" y="770.5" class="lib" font-size="11" fill="#fff" textLength="89.6" lengthAdjust="spacingAndGlyphs">Strike age color codes</text>
<text x="13" y="783.5" class="lib" font-size="11" fill="#fff" textLength="27.7" lengthAdjust="spacingAndGlyphs">Recent</text>
<text x="13" y="796.5" class="lib" font-size="11" fill="#fff" textLength="14.4" lengthAdjust="spacingAndGlyphs">Old</text>
<g stroke="#00e4ff" stroke-width="1.2" fill="none">
<circle cx="60.5" cy="780.5" r="3.7"/><path d="M58.3 780.5H62.7"/>
<path d="M81.5 780.5H88.5"/>
<circle cx="110" cy="780.5" r="3.7"/><path d="M107.8 780.5H112.2M110 778.3V782.7"/>
<path d="M131.8 780.5H138.8M135.3 777.0V784.0"/>
</g>
<g stroke="#ffff00" stroke-width="1.2" fill="none">
<circle cx="60.5" cy="793.5" r="3.7"/><path d="M58.3 793.5H62.7"/>
<path d="M81.5 793.5H88.5"/>
<circle cx="110" cy="793.5" r="3.7"/><path d="M107.8 793.5H112.2M110 791.3V795.7"/>
<path d="M131.8 793.5H138.8M135.3 790.0V797.0"/>
</g>
<text x="153.5" y="783.5" class="lib" font-size="11" fill="#f4e020" textLength="16" lengthAdjust="spacingAndGlyphs">15+</text>
<text x="188" y="783.5" class="lib" font-size="11" fill="#e4a410" textLength="16" lengthAdjust="spacingAndGlyphs">30+</text>
<text x="223" y="783.5" class="lib" font-size="11" fill="#e89410" textLength="16" lengthAdjust="spacingAndGlyphs">45+</text>
<text x="153.5" y="796.5" class="lib" font-size="11" fill="#dc7410" textLength="16" lengthAdjust="spacingAndGlyphs">60+</text>
<text x="188" y="796.5" class="lib" font-size="11" fill="#e45c10" textLength="16" lengthAdjust="spacingAndGlyphs">75+</text>
<text x="223" y="796.5" class="lib" font-size="11" fill="#e83010" textLength="16" lengthAdjust="spacingAndGlyphs">90+</text>
<rect x="685" y="792" width="121" height="14" fill="#000"/>
<text x="689.5" y="801.5" class="lib" font-size="11" fill="#fff" textLength="112" lengthAdjust="spacingAndGlyphs">©2005 Astrogenic Systems</text>
<g fill="none" stroke="#c8c8c8" stroke-width="1">
<rect x="812.5" y="8.5" width="319" height="319" rx="5"/>
<rect x="812.5" y="333.5" width="319" height="113" rx="5"/>
<rect x="812.5" y="453.5" width="319" height="349" rx="5"/>
</g>
<rect x="819.5" y="16.5" width="57" height="17" fill="#5a0808" stroke="#c0c0c0"/>
<text x="848" y="30" class="b" font-size="13" fill="#f0d0d0" text-anchor="middle" textLength="48.4" lengthAdjust="spacingAndGlyphs">STRIKE</text>
<rect x="883.5" y="16.5" width="57" height="17" fill="#333" stroke="#b0b0b0"/>
<text x="912" y="30" class="b" font-size="13" fill="#a8b0b8" text-anchor="middle" textLength="43.0" lengthAdjust="spacingAndGlyphs">NOISE</text>
<rect x="994.5" y="16.5" width="127" height="17" fill="#222" stroke="#c0c0c0"/>
<text x="998.5" y="30" class="b" font-size="13" fill="#fff" textLength="62.0" lengthAdjust="spacingAndGlyphs">Bng 351°</text>
<text x="1118" y="30" class="b" font-size="13" fill="#14f014" text-anchor="end" textLength="42.0" lengthAdjust="spacingAndGlyphs">281mi</text>
<rect x="821.5" y="64.5" width="81" height="15" fill="#555" stroke="#c8c8c8"/>
<text x="862" y="76" class="r" font-size="13" fill="#fff" text-anchor="middle" textLength="65.0" lengthAdjust="spacingAndGlyphs">Strikes/min</text>
<rect x="931.5" y="64.5" width="81" height="15" fill="#555" stroke="#c8c8c8"/>
<text x="972" y="76" class="r" font-size="13" fill="#fff" text-anchor="middle" textLength="58.0" lengthAdjust="spacingAndGlyphs">Close/min</text>
<rect x="1041.5" y="64.5" width="81" height="15" fill="#555" stroke="#c8c8c8"/>
<text x="1082" y="76" class="r" font-size="13" fill="#fff" text-anchor="middle" textLength="63.0" lengthAdjust="spacingAndGlyphs">Noises/min</text>
<text x="902.5" y="111" class="b" font-size="26" fill="#fff" text-anchor="end" textLength="18.5" lengthAdjust="spacingAndGlyphs">0</text>
<text x="1012.5" y="111" class="b" font-size="26" fill="#fff" text-anchor="end" textLength="18.5" lengthAdjust="spacingAndGlyphs">0</text>
<text x="1122.5" y="111" class="b" font-size="26" fill="#b8b8b8" text-anchor="end" textLength="18.5" lengthAdjust="spacingAndGlyphs">0</text>
<text x="902.5" y="143" class="r" font-size="13" fill="#fff" text-anchor="end" textLength="75.7" lengthAdjust="spacingAndGlyphs">Total Strikes</text>
<text x="1012.5" y="143" class="r" font-size="13" fill="#fff" text-anchor="end" textLength="68.5" lengthAdjust="spacingAndGlyphs">Total Close</text>
<text x="1122.5" y="143" class="r" font-size="13" fill="#c8c8c8" text-anchor="end" textLength="75.5" lengthAdjust="spacingAndGlyphs">Total Noises</text>
<text x="902.5" y="161" class="r" font-size="13" fill="#fff" text-anchor="end" textLength="15.5" lengthAdjust="spacingAndGlyphs">27</text>
<text x="1012.5" y="161" class="r" font-size="13" fill="#fff" text-anchor="end" textLength="7.8" lengthAdjust="spacingAndGlyphs">0</text>
<text x="1122.5" y="161" class="r" font-size="13" fill="#fff" text-anchor="end" textLength="15.5" lengthAdjust="spacingAndGlyphs">22</text>
<text x="821" y="215" class="r" font-size="13" fill="#c0c0c0" textLength="164.0" lengthAdjust="spacingAndGlyphs">Lightning type distribution</text>
<rect x="821" y="217" width="303" height="1" fill="#999"/>
<text x="821" y="237" class="b" font-size="13" fill="#fff" textLength="84.4" lengthAdjust="spacingAndGlyphs">Cloud-ground</text>
<text x="913" y="237" class="r" font-size="13" fill="#c8c8c8" textLength="8.0" lengthAdjust="spacingAndGlyphs">+</text>
<rect x="925.5" y="227.5" width="50" height="10" rx="2" fill="#000" stroke="#b8b8b8"/><rect x="926" y="228" width="20.1" height="9" fill="#f01010"/>
<text x="979.5" y="237" class="b" font-size="13" fill="#fff" textLength="28.5" lengthAdjust="spacingAndGlyphs">41%</text>
<text x="1016" y="237" class="b" font-size="13" fill="#c8c8c8" textLength="7.5" lengthAdjust="spacingAndGlyphs">−</text>
<rect x="1028.5" y="227.5" width="50" height="10" rx="2" fill="#000" stroke="#b8b8b8"/><rect x="1029" y="228" width="27.4" height="9" fill="#98d0ff"/>
<text x="1082.5" y="237" class="b" font-size="13" fill="#fff" textLength="29.0" lengthAdjust="spacingAndGlyphs">56%</text>
<text x="821" y="261" class="r" font-size="13" fill="#bcbcbc" textLength="38.0" lengthAdjust="spacingAndGlyphs">Count</text>
<text x="925" y="261" class="b" font-size="13" fill="#fff" textLength="15.0" lengthAdjust="spacingAndGlyphs">11</text>
<text x="1028.5" y="261" class="b" font-size="13" fill="#fff" textLength="15.0" lengthAdjust="spacingAndGlyphs">15</text>
<text x="821" y="291" class="b" font-size="13" fill="#fff" textLength="63.5" lengthAdjust="spacingAndGlyphs">Intracloud</text>
<text x="913" y="291" class="r" font-size="13" fill="#c8c8c8" textLength="8.0" lengthAdjust="spacingAndGlyphs">+</text>
<rect x="925.5" y="281.5" width="50" height="10" rx="2" fill="#000" stroke="#b8b8b8"/><rect x="926" y="282" width="2.0" height="9" fill="#e060a8"/>
<text x="979.5" y="291" class="b" font-size="13" fill="#fff" textLength="20.0" lengthAdjust="spacingAndGlyphs">4%</text>
<text x="1016" y="291" class="b" font-size="13" fill="#c8c8c8" textLength="7.5" lengthAdjust="spacingAndGlyphs">−</text>
<rect x="1028.5" y="281.5" width="50" height="10" rx="2" fill="#000" stroke="#b8b8b8"/>
<text x="1082.5" y="291" class="b" font-size="13" fill="#fff" textLength="20.5" lengthAdjust="spacingAndGlyphs">0%</text>
<text x="821" y="315" class="r" font-size="13" fill="#bcbcbc" textLength="38.0" lengthAdjust="spacingAndGlyphs">Count</text>
<text x="925" y="315" class="b" font-size="13" fill="#fff" textLength="7.5" lengthAdjust="spacingAndGlyphs">1</text>
<text x="1028.5" y="315" class="b" font-size="13" fill="#fff" textLength="7.5" lengthAdjust="spacingAndGlyphs">0</text>
<text x="821" y="353.5" class="b" font-size="17" fill="#00ff00" textLength="201.5" lengthAdjust="spacingAndGlyphs">3/21/2026 7:20:18 AM</text>
<rect x="821" y="358" width="303" height="1" fill="#888"/>
<text x="821" y="388" class="r" font-size="13" fill="#fff" textLength="49.4" lengthAdjust="spacingAndGlyphs">Squelch</text>
<text x="909.5" y="388" class="r" font-size="13" fill="#fff" textLength="7.9" lengthAdjust="spacingAndGlyphs">0</text>
<text x="981" y="388" class="r" font-size="13" fill="#fff" textLength="43.5" lengthAdjust="spacingAndGlyphs">Upload</text>
<text x="1061" y="388" class="r" font-size="13" fill="#c0c0c0" textLength="53.9" lengthAdjust="spacingAndGlyphs">Disabled</text>
<text x="821" y="408" class="r" font-size="13" fill="#fff" textLength="71.0" lengthAdjust="spacingAndGlyphs">Persistence</text>
<text x="909.5" y="408" class="r" font-size="13" fill="#fff" textLength="43.1" lengthAdjust="spacingAndGlyphs">90 min</text>
<text x="981" y="408" class="r" font-size="13" fill="#fff" textLength="49.4" lengthAdjust="spacingAndGlyphs">Capture</text>
<text x="1061" y="408" class="r" font-size="13" fill="#14f014" textLength="38.4" lengthAdjust="spacingAndGlyphs">Active</text>
<text x="821" y="428" class="r" font-size="13" fill="#fff" textLength="39.3" lengthAdjust="spacingAndGlyphs">Range</text>
<text x="909.5" y="428" class="r" font-size="13" fill="#fff" textLength="43.2" lengthAdjust="spacingAndGlyphs">313 mi</text>
<text x="981" y="428" class="r" font-size="13" fill="#fff" textLength="53.7" lengthAdjust="spacingAndGlyphs">Receiver</text>
<text x="1061" y="428" class="r" font-size="13" fill="#14f014" textLength="50.2" lengthAdjust="spacingAndGlyphs">Enabled</text>
<text x="821" y="475" class="r" font-size="13" fill="#b8b8b8" textLength="45.0" lengthAdjust="spacingAndGlyphs">Uptime</text>
<text x="909.5" y="475" class="r" font-size="13" fill="#fff" textLength="51.5" lengthAdjust="spacingAndGlyphs">1627:05</text>
<text x="981" y="475" class="r" font-size="13" fill="#b8b8b8" textLength="61.5" lengthAdjust="spacingAndGlyphs">Peak time</text>
<text x="1061" y="475" class="r" font-size="13" fill="#b8b8b8" textLength="23.4" lengthAdjust="spacingAndGlyphs">Plot</text>
<text x="821" y="498" class="r" font-size="13" fill="#b8b8b8" textLength="58.6" lengthAdjust="spacingAndGlyphs">Peak rate</text>
<text x="909.5" y="498" class="r" font-size="13" fill="#fff" textLength="35.5" lengthAdjust="spacingAndGlyphs">2/min</text>
<text x="981" y="498" class="r" font-size="13" fill="#fff" textLength="51.0" lengthAdjust="spacingAndGlyphs">3:16 AM</text>
<text x="1061" y="498" class="r" font-size="13" fill="#fff" textLength="35.7" lengthAdjust="spacingAndGlyphs">Strike</text>
</svg></body></html>
